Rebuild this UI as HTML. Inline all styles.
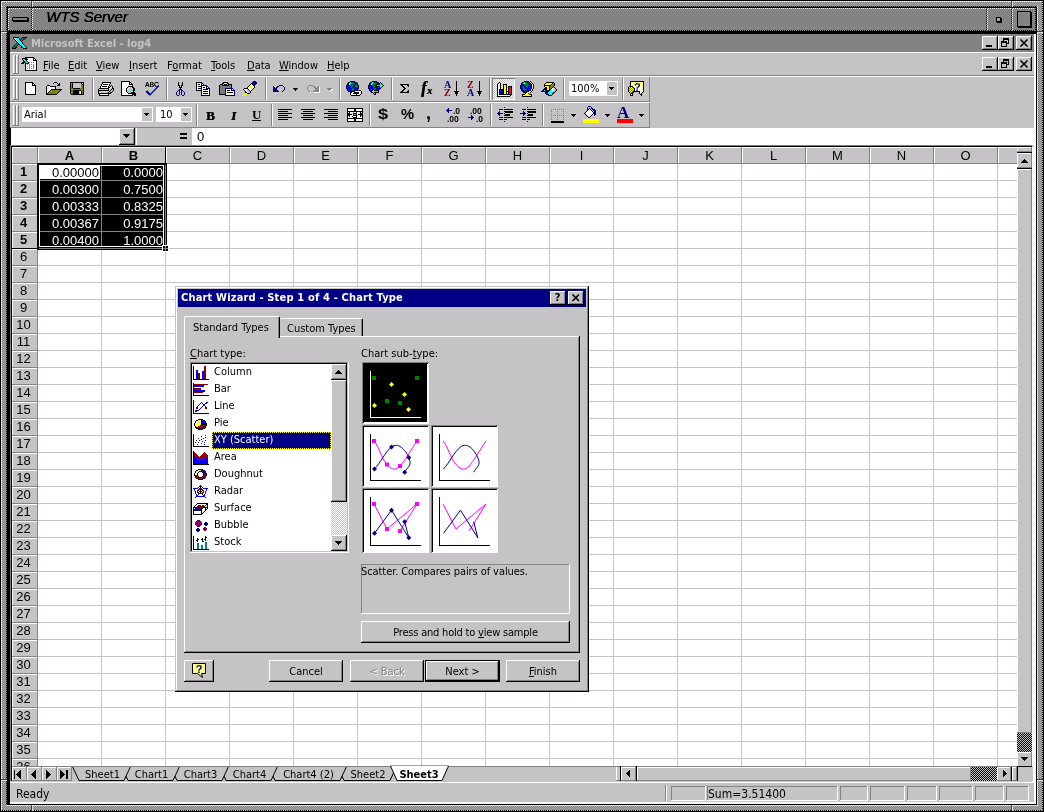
<!DOCTYPE html>
<html><head><meta charset="utf-8"><title>WTS Server</title>
<style>
html,body{margin:0;padding:0;background:#a5a2a5;}
#root{will-change:transform;position:relative;width:1044px;height:812px;overflow:hidden;background:#a5a2a5;font-family:"DejaVu Sans Condensed","Liberation Sans",sans-serif;font-size:11px;color:#000;}
#root div{position:absolute;box-sizing:border-box;white-space:nowrap;}
#root svg{position:absolute;overflow:visible;}
.dith{background:repeating-conic-gradient(#848284 0% 25%,#adaaad 0% 50%) 0 0/2px 2px;}
.dith2{background:repeating-conic-gradient(#000 0% 25%,#c6c3c6 0% 50%) 0 0/2px 2px;}
.dithw2{background:repeating-conic-gradient(#fff 0% 25%,#848284 0% 50%) 0 0/2px 2px;}
.dith3{background:repeating-conic-gradient(#000 0% 25%,#848284 0% 50%) 0 0/2px 2px;}
.dithw{background:repeating-conic-gradient(#fff 0% 25%,#c6c3c6 0% 50%) 0 0/2px 2px;}
.t{line-height:13px;}
.ar{font-family:"Liberation Sans",sans-serif;font-size:13px;line-height:15px;}
.face{background:#c6c3c6;}
.btn{background:#c6c3c6;box-shadow:inset -1px -1px 0 #000,inset 1px 1px 0 #fff,inset -2px -2px 0 #848284,inset 2px 2px 0 #c6c3c6;}
.btn1{background:#c6c3c6;box-shadow:inset -1px -1px 0 #848284,inset 1px 1px 0 #fff;}
.sunk{box-shadow:inset -1px -1px 0 #fff,inset 1px 1px 0 #848284,inset -2px -2px 0 #c6c3c6,inset 2px 2px 0 #000;}
.sunk1{box-shadow:inset -1px -1px 0 #fff,inset 1px 1px 0 #848284;}
u{text-decoration:underline;text-underline-offset:1px;}
</style></head>
<body><div id="root">
<div style="left:0px;top:0px;width:1044px;height:812px;background:#000"></div>
<div class="dith" style="left:1px;top:1px;width:1042px;height:810px;"></div>
<div class="dithw" style="left:1px;top:1px;width:1042px;height:1px;"></div>
<div class="dithw" style="left:1px;top:1px;width:1px;height:810px;"></div>
<div class="dith2" style="left:1px;top:810px;width:1042px;height:1px;"></div>
<div class="dith2" style="left:1042px;top:1px;width:1px;height:810px;"></div>
<div class="dith3" style="left:6px;top:6px;width:1032px;height:1px;"></div>
<div class="dith3" style="left:6px;top:6px;width:1px;height:800px;"></div>
<div class="dithw" style="left:6px;top:805px;width:1032px;height:1px;"></div>
<div class="dithw" style="left:1037px;top:6px;width:1px;height:800px;"></div>
<div style="left:31px;top:1px;width:1px;height:6px;background:#404040"></div>
<div style="left:32px;top:1px;width:1px;height:6px;background:#e0e0e0"></div>
<div style="left:31px;top:805px;width:1px;height:6px;background:#404040"></div>
<div style="left:32px;top:805px;width:1px;height:6px;background:#e0e0e0"></div>
<div style="left:1011px;top:1px;width:1px;height:6px;background:#404040"></div>
<div style="left:1012px;top:1px;width:1px;height:6px;background:#e0e0e0"></div>
<div style="left:1011px;top:805px;width:1px;height:6px;background:#404040"></div>
<div style="left:1012px;top:805px;width:1px;height:6px;background:#e0e0e0"></div>
<div style="left:1px;top:31px;width:6px;height:1px;background:#404040"></div>
<div style="left:1px;top:32px;width:6px;height:1px;background:#e0e0e0"></div>
<div style="left:1037px;top:31px;width:6px;height:1px;background:#404040"></div>
<div style="left:1037px;top:32px;width:6px;height:1px;background:#e0e0e0"></div>
<div style="left:1px;top:779px;width:6px;height:1px;background:#404040"></div>
<div style="left:1px;top:780px;width:6px;height:1px;background:#e0e0e0"></div>
<div style="left:1037px;top:779px;width:6px;height:1px;background:#404040"></div>
<div style="left:1037px;top:780px;width:6px;height:1px;background:#e0e0e0"></div>
<div style="left:7px;top:7px;width:1030px;height:798px;background:#000"></div>
<div style="left:8px;top:8px;width:1028px;height:23px;background:#848284"></div>
<div class="dithw2" style="left:8px;top:8px;width:24px;height:1px;"></div>
<div class="dithw2" style="left:8px;top:8px;width:1px;height:23px;"></div>
<div class="dith3" style="left:8px;top:30px;width:24px;height:1px;"></div>
<div class="dith3" style="left:31px;top:8px;width:1px;height:23px;"></div>
<div class="dithw2" style="left:32px;top:8px;width:955px;height:1px;"></div>
<div class="dithw2" style="left:32px;top:8px;width:1px;height:23px;"></div>
<div class="dith3" style="left:32px;top:30px;width:955px;height:1px;"></div>
<div class="dith3" style="left:986px;top:8px;width:1px;height:23px;"></div>
<div class="dithw2" style="left:987px;top:8px;width:25px;height:1px;"></div>
<div class="dithw2" style="left:987px;top:8px;width:1px;height:23px;"></div>
<div class="dith3" style="left:987px;top:30px;width:25px;height:1px;"></div>
<div class="dith3" style="left:1011px;top:8px;width:1px;height:23px;"></div>
<div class="dithw2" style="left:1012px;top:8px;width:24px;height:1px;"></div>
<div class="dithw2" style="left:1012px;top:8px;width:1px;height:23px;"></div>
<div class="dith3" style="left:1012px;top:30px;width:24px;height:1px;"></div>
<div class="dith3" style="left:1035px;top:8px;width:1px;height:23px;"></div>
<div style="left:12px;top:17px;width:16px;height:4px;background:#848284;border:1px solid #000;box-shadow:1px 1px 0 #000"></div>
<div style="left:996px;top:17px;width:5px;height:5px;background:#a5a2a5;border:1px solid #000;box-shadow:1px 1px 0 #000"></div>
<div style="left:1017px;top:11px;width:14px;height:16px;background:#848284;border:1px solid #000;box-shadow:1px 1px 0 #000"></div>
<div class="t" style="left:46px;top:7px;font-family:'Liberation Sans',sans-serif;font-style:italic;font-size:15px;line-height:20px;color:#000;text-shadow:0.4px 0 0 #000">WTS Server</div>
<div style="left:10px;top:34px;width:1026px;height:770px;background:#fff"></div>
<div style="left:10px;top:34px;width:1024px;height:768px;background:#c6c3c6"></div>
<div style="left:10px;top:34px;width:1024px;height:18px;background:#848284"></div>
<div class="t" style="left:31px;top:37px;font-family:'DejaVu Sans Condensed','Liberation Sans',sans-serif;font-size:11px;font-weight:bold;color:#c6c3c6;line-height:14px">Microsoft Excel - log4</div>
<svg style="left:12px;top:37px" width="16" height="12" viewBox="0 0 16 12" shape-rendering="crispEdges"><rect x="1" y="0" width="6" height="1" fill="#000"/><rect x="10" y="0" width="5" height="1" fill="#000"/><rect x="1" y="1" width="1" height="1" fill="#000"/><rect x="2" y="1" width="1" height="1" fill="#fff"/><rect x="3" y="1" width="4" height="1" fill="#00ffff"/><rect x="7" y="1" width="1" height="1" fill="#000"/><rect x="9" y="1" width="1" height="1" fill="#000"/><rect x="10" y="1" width="3" height="1" fill="#008284"/><rect x="13" y="1" width="1" height="1" fill="#000"/><rect x="2" y="2" width="1" height="1" fill="#000"/><rect x="3" y="2" width="1" height="1" fill="#fff"/><rect x="4" y="2" width="3" height="1" fill="#00ffff"/><rect x="7" y="2" width="2" height="1" fill="#000"/><rect x="9" y="2" width="2" height="1" fill="#008284"/><rect x="11" y="2" width="2" height="1" fill="#000"/><rect x="3" y="3" width="1" height="1" fill="#000"/><rect x="4" y="3" width="1" height="1" fill="#fff"/><rect x="5" y="3" width="3" height="1" fill="#00ffff"/><rect x="8" y="3" width="1" height="1" fill="#000"/><rect x="9" y="3" width="1" height="1" fill="#008284"/><rect x="10" y="3" width="1" height="1" fill="#000"/><rect x="4" y="4" width="1" height="1" fill="#000"/><rect x="5" y="4" width="1" height="1" fill="#fff"/><rect x="6" y="4" width="3" height="1" fill="#00ffff"/><rect x="9" y="4" width="1" height="1" fill="#000"/><rect x="5" y="5" width="1" height="1" fill="#000"/><rect x="6" y="5" width="4" height="1" fill="#00ffff"/><rect x="10" y="5" width="1" height="1" fill="#000"/><rect x="4" y="6" width="1" height="1" fill="#000"/><rect x="5" y="6" width="1" height="1" fill="#008284"/><rect x="6" y="6" width="1" height="1" fill="#000"/><rect x="7" y="6" width="3" height="1" fill="#00ffff"/><rect x="10" y="6" width="1" height="1" fill="#000"/><rect x="3" y="7" width="1" height="1" fill="#000"/><rect x="4" y="7" width="2" height="1" fill="#008284"/><rect x="6" y="7" width="2" height="1" fill="#000"/><rect x="8" y="7" width="3" height="1" fill="#00ffff"/><rect x="11" y="7" width="1" height="1" fill="#000"/><rect x="2" y="8" width="1" height="1" fill="#000"/><rect x="3" y="8" width="2" height="1" fill="#008284"/><rect x="5" y="8" width="1" height="1" fill="#000"/><rect x="8" y="8" width="1" height="1" fill="#000"/><rect x="9" y="8" width="3" height="1" fill="#00ffff"/><rect x="12" y="8" width="1" height="1" fill="#000"/><rect x="1" y="9" width="1" height="1" fill="#000"/><rect x="2" y="9" width="2" height="1" fill="#008284"/><rect x="4" y="9" width="1" height="1" fill="#000"/><rect x="9" y="9" width="1" height="1" fill="#000"/><rect x="10" y="9" width="3" height="1" fill="#00ffff"/><rect x="13" y="9" width="1" height="1" fill="#000"/><rect x="0" y="10" width="1" height="1" fill="#000"/><rect x="1" y="10" width="2" height="1" fill="#008284"/><rect x="3" y="10" width="2" height="1" fill="#000"/><rect x="9" y="10" width="2" height="1" fill="#000"/><rect x="11" y="10" width="3" height="1" fill="#00ffff"/><rect x="14" y="10" width="1" height="1" fill="#000"/><rect x="0" y="11" width="4" height="1" fill="#000"/><rect x="11" y="11" width="4" height="1" fill="#000"/></svg>
<div class="btn" style="left:982px;top:36px;width:16px;height:14px;"></div>
<div style="left:986px;top:45px;width:6px;height:2px;background:#000"></div>
<div class="btn" style="left:998px;top:36px;width:16px;height:14px;"></div>
<svg style="left:998px;top:36px" width="16" height="14" viewBox="0 0 16 14" shape-rendering="crispEdges"><path d="M5 2h6v2H5zM5 4h1v1H5zM10 4h1v4h-1zM9 7h1v1H9z" fill="#000"/><path d="M3 5h6v2H3zM3 7h1v4H3zM8 7h1v4H8zM3 10h6v1H3z" fill="#000"/></svg>
<div class="btn" style="left:1016px;top:36px;width:16px;height:14px;"></div>
<svg style="left:1016px;top:36px" width="16" height="14" viewBox="0 0 16 14"><path d="M4.5 3.5l7 7M11.5 3.5l-7 7" stroke="#000" stroke-width="1.6" fill="none"/></svg>
<div class="btn" style="left:982px;top:57px;width:16px;height:14px;"></div>
<div style="left:986px;top:66px;width:6px;height:2px;background:#000"></div>
<div class="btn" style="left:998px;top:57px;width:16px;height:14px;"></div>
<svg style="left:998px;top:57px" width="16" height="14" viewBox="0 0 16 14" shape-rendering="crispEdges"><path d="M5 2h6v2H5zM5 4h1v1H5zM10 4h1v4h-1zM9 7h1v1H9z" fill="#000"/><path d="M3 5h6v2H3zM3 7h1v4H3zM8 7h1v4H8zM3 10h6v1H3z" fill="#000"/></svg>
<div class="btn" style="left:1016px;top:57px;width:16px;height:14px;"></div>
<svg style="left:1016px;top:57px" width="16" height="14" viewBox="0 0 16 14"><path d="M4.5 3.5l7 7M11.5 3.5l-7 7" stroke="#000" stroke-width="1.6" fill="none"/></svg>
<div style="left:10px;top:52px;width:1024px;height:1px;background:#fff"></div>
<div style="left:10px;top:75px;width:1024px;height:1px;background:#848284"></div>
<div style="left:10px;top:76px;width:1024px;height:1px;background:#fff"></div>
<div style="left:10px;top:101px;width:640px;height:1px;background:#848284"></div>
<div style="left:10px;top:102px;width:640px;height:1px;background:#fff"></div>
<div style="left:10px;top:127px;width:640px;height:1px;background:#848284"></div>
<div class="btn1" style="left:13px;top:55px;width:3px;height:19px;"></div>
<div class="btn1" style="left:16px;top:55px;width:3px;height:19px;"></div>
<div class="btn1" style="left:13px;top:79px;width:3px;height:21px;"></div>
<div class="btn1" style="left:16px;top:79px;width:3px;height:21px;"></div>
<div class="btn1" style="left:13px;top:105px;width:3px;height:21px;"></div>
<div class="btn1" style="left:16px;top:105px;width:3px;height:21px;"></div>
<svg style="left:21px;top:57px" width="16" height="14" viewBox="0 0 16 14" shape-rendering="crispEdges"><rect x="4" y="0" width="9" height="1" fill="#000"/><rect x="1" y="1" width="5" height="1" fill="#000"/><rect x="7" y="1" width="5" height="1" fill="#fff"/><rect x="12" y="1" width="2" height="1" fill="#000"/><rect x="1" y="2" width="1" height="1" fill="#000"/><rect x="2" y="2" width="2" height="1" fill="#00ffff"/><rect x="4" y="2" width="3" height="1" fill="#000"/><rect x="7" y="2" width="5" height="1" fill="#fff"/><rect x="12" y="2" width="1" height="1" fill="#000"/><rect x="13" y="2" width="1" height="1" fill="#fff"/><rect x="14" y="2" width="1" height="1" fill="#000"/><rect x="2" y="3" width="1" height="1" fill="#000"/><rect x="3" y="3" width="2" height="1" fill="#00ffff"/><rect x="5" y="3" width="1" height="1" fill="#000"/><rect x="6" y="3" width="6" height="1" fill="#fff"/><rect x="12" y="3" width="4" height="1" fill="#000"/><rect x="2" y="4" width="2" height="1" fill="#000"/><rect x="4" y="4" width="2" height="1" fill="#00ffff"/><rect x="6" y="4" width="1" height="1" fill="#000"/><rect x="7" y="4" width="8" height="1" fill="#fff"/><rect x="15" y="4" width="1" height="1" fill="#000"/><rect x="1" y="5" width="4" height="1" fill="#000"/><rect x="5" y="5" width="2" height="1" fill="#00ffff"/><rect x="7" y="5" width="1" height="1" fill="#000"/><rect x="8" y="5" width="1" height="1" fill="#848284"/><rect x="9" y="5" width="1" height="1" fill="#fff"/><rect x="10" y="5" width="1" height="1" fill="#848284"/><rect x="11" y="5" width="1" height="1" fill="#fff"/><rect x="12" y="5" width="1" height="1" fill="#848284"/><rect x="13" y="5" width="2" height="1" fill="#fff"/><rect x="15" y="5" width="1" height="1" fill="#000"/><rect x="0" y="6" width="3" height="1" fill="#000"/><rect x="4" y="6" width="4" height="1" fill="#000"/><rect x="8" y="6" width="7" height="1" fill="#fff"/><rect x="15" y="6" width="1" height="1" fill="#000"/><rect x="4" y="7" width="1" height="1" fill="#000"/><rect x="5" y="7" width="1" height="1" fill="#fff"/><rect x="6" y="7" width="1" height="1" fill="#848284"/><rect x="7" y="7" width="1" height="1" fill="#fff"/><rect x="8" y="7" width="1" height="1" fill="#848284"/><rect x="9" y="7" width="1" height="1" fill="#fff"/><rect x="10" y="7" width="1" height="1" fill="#848284"/><rect x="11" y="7" width="1" height="1" fill="#fff"/><rect x="12" y="7" width="1" height="1" fill="#848284"/><rect x="13" y="7" width="2" height="1" fill="#fff"/><rect x="15" y="7" width="1" height="1" fill="#000"/><rect x="4" y="8" width="1" height="1" fill="#000"/><rect x="5" y="8" width="3" height="1" fill="#fff"/><rect x="8" y="8" width="1" height="1" fill="#848284"/><rect x="9" y="8" width="3" height="1" fill="#fff"/><rect x="12" y="8" width="1" height="1" fill="#848284"/><rect x="13" y="8" width="2" height="1" fill="#fff"/><rect x="15" y="8" width="1" height="1" fill="#000"/><rect x="4" y="9" width="1" height="1" fill="#000"/><rect x="5" y="9" width="1" height="1" fill="#fff"/><rect x="6" y="9" width="1" height="1" fill="#848284"/><rect x="7" y="9" width="1" height="1" fill="#fff"/><rect x="8" y="9" width="1" height="1" fill="#848284"/><rect x="9" y="9" width="1" height="1" fill="#fff"/><rect x="10" y="9" width="1" height="1" fill="#848284"/><rect x="11" y="9" width="1" height="1" fill="#fff"/><rect x="12" y="9" width="1" height="1" fill="#848284"/><rect x="13" y="9" width="2" height="1" fill="#fff"/><rect x="15" y="9" width="1" height="1" fill="#000"/><rect x="4" y="10" width="1" height="1" fill="#000"/><rect x="5" y="10" width="3" height="1" fill="#fff"/><rect x="8" y="10" width="1" height="1" fill="#848284"/><rect x="9" y="10" width="3" height="1" fill="#fff"/><rect x="12" y="10" width="1" height="1" fill="#848284"/><rect x="13" y="10" width="2" height="1" fill="#fff"/><rect x="15" y="10" width="1" height="1" fill="#000"/><rect x="4" y="11" width="1" height="1" fill="#000"/><rect x="5" y="11" width="1" height="1" fill="#fff"/><rect x="6" y="11" width="1" height="1" fill="#848284"/><rect x="7" y="11" width="1" height="1" fill="#fff"/><rect x="8" y="11" width="1" height="1" fill="#848284"/><rect x="9" y="11" width="1" height="1" fill="#fff"/><rect x="10" y="11" width="1" height="1" fill="#848284"/><rect x="11" y="11" width="1" height="1" fill="#fff"/><rect x="12" y="11" width="1" height="1" fill="#848284"/><rect x="13" y="11" width="2" height="1" fill="#fff"/><rect x="15" y="11" width="1" height="1" fill="#000"/><rect x="4" y="12" width="1" height="1" fill="#000"/><rect x="5" y="12" width="10" height="1" fill="#fff"/><rect x="15" y="12" width="1" height="1" fill="#000"/><rect x="4" y="13" width="12" height="1" fill="#000"/></svg>
<div class="t" style="left:43px;top:59px;font-family:'DejaVu Sans Condensed','Liberation Sans',sans-serif;font-size:11px;line-height:14px"><u>F</u>ile</div>
<div class="t" style="left:68px;top:59px;font-family:'DejaVu Sans Condensed','Liberation Sans',sans-serif;font-size:11px;line-height:14px"><u>E</u>dit</div>
<div class="t" style="left:96px;top:59px;font-family:'DejaVu Sans Condensed','Liberation Sans',sans-serif;font-size:11px;line-height:14px"><u>V</u>iew</div>
<div class="t" style="left:129px;top:59px;font-family:'DejaVu Sans Condensed','Liberation Sans',sans-serif;font-size:11px;line-height:14px"><u>I</u>nsert</div>
<div class="t" style="left:167px;top:59px;font-family:'DejaVu Sans Condensed','Liberation Sans',sans-serif;font-size:11px;line-height:14px">F<u>o</u>rmat</div>
<div class="t" style="left:211px;top:59px;font-family:'DejaVu Sans Condensed','Liberation Sans',sans-serif;font-size:11px;line-height:14px"><u>T</u>ools</div>
<div class="t" style="left:247px;top:59px;font-family:'DejaVu Sans Condensed','Liberation Sans',sans-serif;font-size:11px;line-height:14px"><u>D</u>ata</div>
<div class="t" style="left:279px;top:59px;font-family:'DejaVu Sans Condensed','Liberation Sans',sans-serif;font-size:11px;line-height:14px"><u>W</u>indow</div>
<div class="t" style="left:327px;top:59px;font-family:'DejaVu Sans Condensed','Liberation Sans',sans-serif;font-size:11px;line-height:14px"><u>H</u>elp</div>
<div style="left:649px;top:77px;width:1px;height:25px;background:#848284"></div>
<div style="left:649px;top:103px;width:1px;height:25px;background:#848284"></div>
<div style="left:92px;top:78px;width:1px;height:22px;background:#848284"></div>
<div style="left:93px;top:78px;width:1px;height:22px;background:#fff"></div>
<div style="left:166px;top:78px;width:1px;height:22px;background:#848284"></div>
<div style="left:167px;top:78px;width:1px;height:22px;background:#fff"></div>
<div style="left:265px;top:78px;width:1px;height:22px;background:#848284"></div>
<div style="left:266px;top:78px;width:1px;height:22px;background:#fff"></div>
<div style="left:339px;top:78px;width:1px;height:22px;background:#848284"></div>
<div style="left:340px;top:78px;width:1px;height:22px;background:#fff"></div>
<div style="left:391px;top:78px;width:1px;height:22px;background:#848284"></div>
<div style="left:392px;top:78px;width:1px;height:22px;background:#fff"></div>
<div style="left:489px;top:78px;width:1px;height:22px;background:#848284"></div>
<div style="left:490px;top:78px;width:1px;height:22px;background:#fff"></div>
<div style="left:563px;top:78px;width:1px;height:22px;background:#848284"></div>
<div style="left:564px;top:78px;width:1px;height:22px;background:#fff"></div>
<div style="left:622px;top:78px;width:1px;height:22px;background:#848284"></div>
<div style="left:623px;top:78px;width:1px;height:22px;background:#fff"></div>
<div style="left:196px;top:104px;width:1px;height:22px;background:#848284"></div>
<div style="left:197px;top:104px;width:1px;height:22px;background:#fff"></div>
<div style="left:271px;top:104px;width:1px;height:22px;background:#848284"></div>
<div style="left:272px;top:104px;width:1px;height:22px;background:#fff"></div>
<div style="left:369px;top:104px;width:1px;height:22px;background:#848284"></div>
<div style="left:370px;top:104px;width:1px;height:22px;background:#fff"></div>
<div style="left:490px;top:104px;width:1px;height:22px;background:#848284"></div>
<div style="left:491px;top:104px;width:1px;height:22px;background:#fff"></div>
<div style="left:542px;top:104px;width:1px;height:22px;background:#848284"></div>
<div style="left:543px;top:104px;width:1px;height:22px;background:#fff"></div>
<div style="left:22px;top:107px;width:131px;height:15px;background:#fff"></div>
<div style="left:142px;top:108px;width:10px;height:13px;background:#c6c3c6"></div>
<div class="t" style="left:24px;top:108px;font-family:'DejaVu Sans Condensed','Liberation Sans',sans-serif;font-size:11px;line-height:14px">Arial</div>
<div style="left:156px;top:107px;width:36px;height:15px;background:#fff"></div>
<div style="left:181px;top:108px;width:10px;height:13px;background:#c6c3c6"></div>
<div class="t" style="left:160px;top:108px;font-family:'DejaVu Sans Condensed','Liberation Sans',sans-serif;font-size:11px;line-height:14px">10</div>
<div style="left:569px;top:81px;width:49px;height:15px;background:#fff"></div>
<div style="left:607px;top:82px;width:10px;height:13px;background:#c6c3c6"></div>
<div class="t" style="left:571px;top:82px;font-family:'DejaVu Sans Condensed','Liberation Sans',sans-serif;font-size:11px;line-height:14px">100%</div>
<svg style="left:144px;top:113px" width="5" height="3" shape-rendering="crispEdges"><path d="M0 0h5 l-2.5 3 z" fill="#000"/></svg>
<svg style="left:183px;top:113px" width="5" height="3" shape-rendering="crispEdges"><path d="M0 0h5 l-2.5 3 z" fill="#000"/></svg>
<svg style="left:609px;top:87px" width="5" height="3" shape-rendering="crispEdges"><path d="M0 0h5 l-2.5 3 z" fill="#000"/></svg>
<div style="left:10px;top:128px;width:1024px;height:17px;background:#c6c3c6"></div>
<div style="left:11px;top:128px;width:108px;height:17px;background:#fff"></div>
<div class="btn" style="left:119px;top:128px;width:16px;height:17px;"></div>
<svg style="left:123px;top:134px" width="7" height="4" shape-rendering="crispEdges"><path d="M0 0h7 l-3.5 4 z" fill="#000"/></svg>
<div style="left:136px;top:128px;width:1px;height:17px;background:#fff"></div>
<div style="left:192px;top:128px;width:844px;height:17px;background:#fff"></div>
<div style="left:180px;top:133px;width:7px;height:2px;background:#000"></div>
<div style="left:180px;top:137px;width:7px;height:2px;background:#000"></div>
<div class="t" style="left:197px;top:129px;font-family:'Liberation Sans',sans-serif;font-size:13px;line-height:15px">0</div>
<div style="left:10px;top:145px;width:1022px;height:1px;background:#848284"></div>
<div style="left:10px;top:146px;width:1022px;height:1px;background:#000"></div>
<div style="left:10px;top:781px;width:1024px;height:1px;background:#c6c3c6"></div>
<div style="left:10px;top:782px;width:1024px;height:1px;background:#fff"></div>
<div style="left:10px;top:783px;width:1024px;height:19px;background:#c6c3c6"></div>
<div class="t" style="left:16px;top:787px;font-family:'DejaVu Sans Condensed','Liberation Sans',sans-serif;font-size:11px;font-size:12px;line-height:14px">Ready</div>
<div class="t" style="left:708px;top:787px;font-family:'DejaVu Sans Condensed','Liberation Sans',sans-serif;font-size:11px;font-size:12px;line-height:14px">Sum=3.51400</div>
<div class="sunk1" style="left:671px;top:786px;width:35px;height:15px;"></div>
<div class="sunk1" style="left:707px;top:786px;width:131px;height:15px;"></div>
<div class="sunk1" style="left:840px;top:786px;width:28px;height:15px;"></div>
<div class="sunk1" style="left:870px;top:786px;width:35px;height:15px;"></div>
<div class="sunk1" style="left:907px;top:786px;width:30px;height:15px;"></div>
<div class="sunk1" style="left:939px;top:786px;width:34px;height:15px;"></div>
<div class="sunk1" style="left:975px;top:786px;width:29px;height:15px;"></div>
<div class="sunk1" style="left:1006px;top:786px;width:23px;height:15px;"></div>
<div style="left:665px;top:785px;width:1px;height:16px;background:#848284"></div>
<div style="left:666px;top:785px;width:1px;height:16px;background:#fff"></div>
<svg style="left:25px;top:82px" width="11" height="13" viewBox="0 0 11 13" shape-rendering="crispEdges"><rect x="0" y="0" width="8" height="1" fill="#000"/><rect x="0" y="1" width="1" height="1" fill="#000"/><rect x="1" y="1" width="6" height="1" fill="#fff"/><rect x="7" y="1" width="2" height="1" fill="#000"/><rect x="0" y="2" width="1" height="1" fill="#000"/><rect x="1" y="2" width="6" height="1" fill="#fff"/><rect x="7" y="2" width="1" height="1" fill="#000"/><rect x="8" y="2" width="1" height="1" fill="#fff"/><rect x="9" y="2" width="1" height="1" fill="#000"/><rect x="0" y="3" width="1" height="1" fill="#000"/><rect x="1" y="3" width="6" height="1" fill="#fff"/><rect x="7" y="3" width="4" height="1" fill="#000"/><rect x="0" y="4" width="1" height="1" fill="#000"/><rect x="1" y="4" width="9" height="1" fill="#fff"/><rect x="10" y="4" width="1" height="1" fill="#000"/><rect x="0" y="5" width="1" height="1" fill="#000"/><rect x="1" y="5" width="9" height="1" fill="#fff"/><rect x="10" y="5" width="1" height="1" fill="#000"/><rect x="0" y="6" width="1" height="1" fill="#000"/><rect x="1" y="6" width="9" height="1" fill="#fff"/><rect x="10" y="6" width="1" height="1" fill="#000"/><rect x="0" y="7" width="1" height="1" fill="#000"/><rect x="1" y="7" width="9" height="1" fill="#fff"/><rect x="10" y="7" width="1" height="1" fill="#000"/><rect x="0" y="8" width="1" height="1" fill="#000"/><rect x="1" y="8" width="9" height="1" fill="#fff"/><rect x="10" y="8" width="1" height="1" fill="#000"/><rect x="0" y="9" width="1" height="1" fill="#000"/><rect x="1" y="9" width="9" height="1" fill="#fff"/><rect x="10" y="9" width="1" height="1" fill="#000"/><rect x="0" y="10" width="1" height="1" fill="#000"/><rect x="1" y="10" width="9" height="1" fill="#fff"/><rect x="10" y="10" width="1" height="1" fill="#000"/><rect x="0" y="11" width="1" height="1" fill="#000"/><rect x="1" y="11" width="9" height="1" fill="#fff"/><rect x="10" y="11" width="1" height="1" fill="#000"/><rect x="0" y="12" width="11" height="1" fill="#000"/></svg>
<svg style="left:46px;top:82px" width="16" height="13" viewBox="0 0 16 13" shape-rendering="crispEdges"><rect x="8" y="0" width="3" height="1" fill="#000"/><rect x="7" y="1" width="1" height="1" fill="#000"/><rect x="11" y="1" width="1" height="1" fill="#000"/><rect x="13" y="1" width="1" height="1" fill="#000"/><rect x="12" y="2" width="2" height="1" fill="#000"/><rect x="1" y="3" width="3" height="1" fill="#000"/><rect x="11" y="3" width="3" height="1" fill="#000"/><rect x="0" y="4" width="1" height="1" fill="#000"/><rect x="1" y="4" width="1" height="1" fill="#ffff00"/><rect x="2" y="4" width="1" height="1" fill="#fff"/><rect x="3" y="4" width="1" height="1" fill="#ffff00"/><rect x="4" y="4" width="6" height="1" fill="#000"/><rect x="0" y="5" width="1" height="1" fill="#000"/><rect x="1" y="5" width="1" height="1" fill="#fff"/><rect x="2" y="5" width="1" height="1" fill="#ffff00"/><rect x="3" y="5" width="1" height="1" fill="#fff"/><rect x="4" y="5" width="1" height="1" fill="#ffff00"/><rect x="5" y="5" width="1" height="1" fill="#fff"/><rect x="6" y="5" width="1" height="1" fill="#ffff00"/><rect x="7" y="5" width="1" height="1" fill="#fff"/><rect x="8" y="5" width="1" height="1" fill="#ffff00"/><rect x="9" y="5" width="1" height="1" fill="#000"/><rect x="0" y="6" width="1" height="1" fill="#000"/><rect x="1" y="6" width="1" height="1" fill="#ffff00"/><rect x="2" y="6" width="1" height="1" fill="#fff"/><rect x="3" y="6" width="1" height="1" fill="#ffff00"/><rect x="4" y="6" width="1" height="1" fill="#fff"/><rect x="5" y="6" width="1" height="1" fill="#ffff00"/><rect x="6" y="6" width="1" height="1" fill="#fff"/><rect x="7" y="6" width="1" height="1" fill="#ffff00"/><rect x="8" y="6" width="1" height="1" fill="#fff"/><rect x="9" y="6" width="1" height="1" fill="#000"/><rect x="0" y="7" width="1" height="1" fill="#000"/><rect x="1" y="7" width="1" height="1" fill="#fff"/><rect x="2" y="7" width="1" height="1" fill="#ffff00"/><rect x="3" y="7" width="1" height="1" fill="#fff"/><rect x="4" y="7" width="1" height="1" fill="#ffff00"/><rect x="5" y="7" width="11" height="1" fill="#000"/><rect x="0" y="8" width="1" height="1" fill="#000"/><rect x="1" y="8" width="1" height="1" fill="#ffff00"/><rect x="2" y="8" width="1" height="1" fill="#fff"/><rect x="3" y="8" width="1" height="1" fill="#ffff00"/><rect x="4" y="8" width="1" height="1" fill="#000"/><rect x="5" y="8" width="9" height="1" fill="#848200"/><rect x="14" y="8" width="1" height="1" fill="#000"/><rect x="0" y="9" width="1" height="1" fill="#000"/><rect x="1" y="9" width="1" height="1" fill="#fff"/><rect x="2" y="9" width="1" height="1" fill="#ffff00"/><rect x="3" y="9" width="1" height="1" fill="#000"/><rect x="4" y="9" width="9" height="1" fill="#848200"/><rect x="13" y="9" width="1" height="1" fill="#000"/><rect x="0" y="10" width="1" height="1" fill="#000"/><rect x="1" y="10" width="1" height="1" fill="#ffff00"/><rect x="2" y="10" width="1" height="1" fill="#000"/><rect x="3" y="10" width="9" height="1" fill="#848200"/><rect x="12" y="10" width="1" height="1" fill="#000"/><rect x="0" y="11" width="2" height="1" fill="#000"/><rect x="2" y="11" width="9" height="1" fill="#848200"/><rect x="11" y="11" width="1" height="1" fill="#000"/><rect x="0" y="12" width="11" height="1" fill="#000"/></svg>
<svg style="left:70px;top:82px" width="14" height="13" viewBox="0 0 14 13" shape-rendering="crispEdges"><rect x="0" y="0" width="14" height="1" fill="#000"/><rect x="0" y="1" width="1" height="1" fill="#000"/><rect x="1" y="1" width="1" height="1" fill="#848200"/><rect x="2" y="1" width="1" height="1" fill="#000"/><rect x="3" y="1" width="8" height="1" fill="#c6c3c6"/><rect x="11" y="1" width="1" height="1" fill="#000"/><rect x="12" y="1" width="1" height="1" fill="#c6c3c6"/><rect x="13" y="1" width="1" height="1" fill="#000"/><rect x="0" y="2" width="1" height="1" fill="#000"/><rect x="1" y="2" width="1" height="1" fill="#848200"/><rect x="2" y="2" width="1" height="1" fill="#000"/><rect x="3" y="2" width="8" height="1" fill="#c6c3c6"/><rect x="11" y="2" width="1" height="1" fill="#848200"/><rect x="12" y="2" width="2" height="1" fill="#000"/><rect x="0" y="3" width="1" height="1" fill="#000"/><rect x="1" y="3" width="1" height="1" fill="#848200"/><rect x="2" y="3" width="1" height="1" fill="#000"/><rect x="3" y="3" width="8" height="1" fill="#c6c3c6"/><rect x="11" y="3" width="2" height="1" fill="#848200"/><rect x="13" y="3" width="1" height="1" fill="#000"/><rect x="0" y="4" width="1" height="1" fill="#000"/><rect x="1" y="4" width="1" height="1" fill="#848200"/><rect x="2" y="4" width="1" height="1" fill="#000"/><rect x="3" y="4" width="8" height="1" fill="#c6c3c6"/><rect x="11" y="4" width="2" height="1" fill="#848200"/><rect x="13" y="4" width="1" height="1" fill="#000"/><rect x="0" y="5" width="1" height="1" fill="#000"/><rect x="1" y="5" width="1" height="1" fill="#848200"/><rect x="2" y="5" width="1" height="1" fill="#000"/><rect x="3" y="5" width="8" height="1" fill="#c6c3c6"/><rect x="11" y="5" width="2" height="1" fill="#848200"/><rect x="13" y="5" width="1" height="1" fill="#000"/><rect x="0" y="6" width="1" height="1" fill="#000"/><rect x="1" y="6" width="2" height="1" fill="#848200"/><rect x="3" y="6" width="7" height="1" fill="#000"/><rect x="10" y="6" width="3" height="1" fill="#848200"/><rect x="13" y="6" width="1" height="1" fill="#000"/><rect x="0" y="7" width="1" height="1" fill="#000"/><rect x="1" y="7" width="12" height="1" fill="#848200"/><rect x="13" y="7" width="1" height="1" fill="#000"/><rect x="0" y="8" width="1" height="1" fill="#000"/><rect x="1" y="8" width="2" height="1" fill="#848200"/><rect x="3" y="8" width="8" height="1" fill="#000"/><rect x="11" y="8" width="2" height="1" fill="#848200"/><rect x="13" y="8" width="1" height="1" fill="#000"/><rect x="0" y="9" width="1" height="1" fill="#000"/><rect x="1" y="9" width="2" height="1" fill="#848200"/><rect x="3" y="9" width="6" height="1" fill="#000"/><rect x="9" y="9" width="1" height="1" fill="#c6c3c6"/><rect x="10" y="9" width="1" height="1" fill="#fff"/><rect x="11" y="9" width="1" height="1" fill="#000"/><rect x="12" y="9" width="1" height="1" fill="#848200"/><rect x="13" y="9" width="1" height="1" fill="#000"/><rect x="0" y="10" width="1" height="1" fill="#000"/><rect x="1" y="10" width="2" height="1" fill="#848200"/><rect x="3" y="10" width="6" height="1" fill="#000"/><rect x="9" y="10" width="1" height="1" fill="#c6c3c6"/><rect x="10" y="10" width="1" height="1" fill="#fff"/><rect x="11" y="10" width="1" height="1" fill="#000"/><rect x="12" y="10" width="1" height="1" fill="#848200"/><rect x="13" y="10" width="1" height="1" fill="#000"/><rect x="0" y="11" width="1" height="1" fill="#000"/><rect x="1" y="11" width="2" height="1" fill="#848200"/><rect x="3" y="11" width="6" height="1" fill="#000"/><rect x="9" y="11" width="1" height="1" fill="#c6c3c6"/><rect x="10" y="11" width="1" height="1" fill="#fff"/><rect x="11" y="11" width="1" height="1" fill="#000"/><rect x="12" y="11" width="1" height="1" fill="#848200"/><rect x="13" y="11" width="1" height="1" fill="#000"/><rect x="1" y="12" width="13" height="1" fill="#000"/></svg>
<svg style="left:98px;top:82px" width="16" height="14" viewBox="0 0 16 14" shape-rendering="crispEdges"><rect x="4" y="0" width="9" height="1" fill="#000"/><rect x="4" y="1" width="1" height="1" fill="#000"/><rect x="5" y="1" width="7" height="1" fill="#fff"/><rect x="12" y="1" width="1" height="1" fill="#000"/><rect x="3" y="2" width="1" height="1" fill="#000"/><rect x="4" y="2" width="1" height="1" fill="#fff"/><rect x="5" y="2" width="5" height="1" fill="#000"/><rect x="10" y="2" width="1" height="1" fill="#fff"/><rect x="11" y="2" width="1" height="1" fill="#000"/><rect x="3" y="3" width="1" height="1" fill="#000"/><rect x="4" y="3" width="7" height="1" fill="#fff"/><rect x="11" y="3" width="1" height="1" fill="#000"/><rect x="13" y="3" width="1" height="1" fill="#000"/><rect x="2" y="4" width="1" height="1" fill="#000"/><rect x="3" y="4" width="1" height="1" fill="#fff"/><rect x="4" y="4" width="5" height="1" fill="#000"/><rect x="9" y="4" width="1" height="1" fill="#fff"/><rect x="10" y="4" width="1" height="1" fill="#000"/><rect x="12" y="4" width="1" height="1" fill="#000"/><rect x="13" y="4" width="1" height="1" fill="#fff"/><rect x="14" y="4" width="1" height="1" fill="#000"/><rect x="2" y="5" width="1" height="1" fill="#000"/><rect x="3" y="5" width="7" height="1" fill="#fff"/><rect x="10" y="5" width="2" height="1" fill="#000"/><rect x="12" y="5" width="1" height="1" fill="#fff"/><rect x="13" y="5" width="1" height="1" fill="#c6c3c6"/><rect x="14" y="5" width="1" height="1" fill="#000"/><rect x="1" y="6" width="10" height="1" fill="#000"/><rect x="11" y="6" width="1" height="1" fill="#fff"/><rect x="12" y="6" width="2" height="1" fill="#c6c3c6"/><rect x="14" y="6" width="2" height="1" fill="#000"/><rect x="0" y="7" width="1" height="1" fill="#000"/><rect x="1" y="7" width="9" height="1" fill="#c6c3c6"/><rect x="10" y="7" width="1" height="1" fill="#000"/><rect x="11" y="7" width="2" height="1" fill="#c6c3c6"/><rect x="13" y="7" width="1" height="1" fill="#000"/><rect x="14" y="7" width="1" height="1" fill="#c6c3c6"/><rect x="15" y="7" width="1" height="1" fill="#000"/><rect x="0" y="8" width="11" height="1" fill="#000"/><rect x="11" y="8" width="1" height="1" fill="#c6c3c6"/><rect x="12" y="8" width="1" height="1" fill="#000"/><rect x="13" y="8" width="2" height="1" fill="#c6c3c6"/><rect x="15" y="8" width="1" height="1" fill="#000"/><rect x="0" y="9" width="1" height="1" fill="#000"/><rect x="1" y="9" width="4" height="1" fill="#c6c3c6"/><rect x="5" y="9" width="3" height="1" fill="#ffff00"/><rect x="8" y="9" width="3" height="1" fill="#c6c3c6"/><rect x="11" y="9" width="1" height="1" fill="#000"/><rect x="12" y="9" width="2" height="1" fill="#c6c3c6"/><rect x="14" y="9" width="1" height="1" fill="#000"/><rect x="0" y="10" width="1" height="1" fill="#000"/><rect x="1" y="10" width="9" height="1" fill="#c6c3c6"/><rect x="10" y="10" width="1" height="1" fill="#000"/><rect x="11" y="10" width="1" height="1" fill="#c6c3c6"/><rect x="12" y="10" width="2" height="1" fill="#000"/><rect x="0" y="11" width="13" height="1" fill="#000"/><rect x="1" y="12" width="1" height="1" fill="#000"/><rect x="2" y="12" width="8" height="1" fill="#fff"/><rect x="10" y="12" width="1" height="1" fill="#000"/><rect x="1" y="13" width="10" height="1" fill="#000"/></svg>
<svg style="left:121px;top:81px" width="16" height="15" viewBox="0 0 16 15" shape-rendering="crispEdges"><rect x="0" y="0" width="9" height="1" fill="#000"/><rect x="0" y="1" width="1" height="1" fill="#000"/><rect x="1" y="1" width="7" height="1" fill="#fff"/><rect x="8" y="1" width="2" height="1" fill="#000"/><rect x="0" y="2" width="1" height="1" fill="#000"/><rect x="1" y="2" width="7" height="1" fill="#fff"/><rect x="8" y="2" width="1" height="1" fill="#000"/><rect x="9" y="2" width="1" height="1" fill="#fff"/><rect x="10" y="2" width="1" height="1" fill="#000"/><rect x="0" y="3" width="1" height="1" fill="#000"/><rect x="1" y="3" width="7" height="1" fill="#fff"/><rect x="8" y="3" width="4" height="1" fill="#000"/><rect x="0" y="4" width="1" height="1" fill="#000"/><rect x="1" y="4" width="10" height="1" fill="#fff"/><rect x="11" y="4" width="1" height="1" fill="#000"/><rect x="0" y="5" width="1" height="1" fill="#000"/><rect x="1" y="5" width="6" height="1" fill="#fff"/><rect x="7" y="5" width="5" height="1" fill="#000"/><rect x="0" y="6" width="1" height="1" fill="#000"/><rect x="1" y="6" width="5" height="1" fill="#fff"/><rect x="6" y="6" width="1" height="1" fill="#000"/><rect x="7" y="6" width="1" height="1" fill="#00ffff"/><rect x="8" y="6" width="1" height="1" fill="#fff"/><rect x="9" y="6" width="2" height="1" fill="#c6c3c6"/><rect x="11" y="6" width="2" height="1" fill="#000"/><rect x="0" y="7" width="1" height="1" fill="#000"/><rect x="1" y="7" width="4" height="1" fill="#fff"/><rect x="5" y="7" width="1" height="1" fill="#000"/><rect x="6" y="7" width="1" height="1" fill="#00ffff"/><rect x="7" y="7" width="1" height="1" fill="#fff"/><rect x="8" y="7" width="4" height="1" fill="#c6c3c6"/><rect x="12" y="7" width="2" height="1" fill="#000"/><rect x="0" y="8" width="1" height="1" fill="#000"/><rect x="1" y="8" width="4" height="1" fill="#fff"/><rect x="5" y="8" width="1" height="1" fill="#000"/><rect x="6" y="8" width="1" height="1" fill="#fff"/><rect x="7" y="8" width="3" height="1" fill="#c6c3c6"/><rect x="10" y="8" width="1" height="1" fill="#00ffff"/><rect x="11" y="8" width="1" height="1" fill="#c6c3c6"/><rect x="12" y="8" width="2" height="1" fill="#000"/><rect x="0" y="9" width="1" height="1" fill="#000"/><rect x="1" y="9" width="4" height="1" fill="#fff"/><rect x="5" y="9" width="1" height="1" fill="#000"/><rect x="6" y="9" width="3" height="1" fill="#c6c3c6"/><rect x="9" y="9" width="1" height="1" fill="#00ffff"/><rect x="10" y="9" width="2" height="1" fill="#c6c3c6"/><rect x="12" y="9" width="2" height="1" fill="#000"/><rect x="0" y="10" width="1" height="1" fill="#000"/><rect x="1" y="10" width="4" height="1" fill="#fff"/><rect x="5" y="10" width="1" height="1" fill="#000"/><rect x="6" y="10" width="6" height="1" fill="#c6c3c6"/><rect x="12" y="10" width="1" height="1" fill="#000"/><rect x="0" y="11" width="1" height="1" fill="#000"/><rect x="1" y="11" width="5" height="1" fill="#fff"/><rect x="6" y="11" width="1" height="1" fill="#000"/><rect x="7" y="11" width="3" height="1" fill="#c6c3c6"/><rect x="10" y="11" width="4" height="1" fill="#000"/><rect x="0" y="12" width="1" height="1" fill="#000"/><rect x="1" y="12" width="6" height="1" fill="#fff"/><rect x="7" y="12" width="8" height="1" fill="#000"/><rect x="0" y="13" width="1" height="1" fill="#000"/><rect x="1" y="13" width="10" height="1" fill="#fff"/><rect x="11" y="13" width="4" height="1" fill="#000"/><rect x="0" y="14" width="12" height="1" fill="#000"/><rect x="13" y="14" width="2" height="1" fill="#000"/></svg>
<div class="t" style="left:145px;top:81px;font-family:'Liberation Sans',sans-serif;font-size:6.5px;line-height:8px;letter-spacing:0.2px;text-shadow:0.3px 0 0 #000">ABC</div>
<svg style="left:145px;top:83px" width="16" height="14" viewBox="0 0 16 14"><path d="M1.500 8.500l3.500 3.500L14 2.500" stroke="#000084" stroke-width="1.200" fill="none"/><path d="M0.500 8.500l2-1 3 3.500-1 1.500z" fill="#000084"/></svg>
<svg style="left:176px;top:82px" width="10" height="14" viewBox="0 0 10 14" shape-rendering="crispEdges"><rect x="2" y="0" width="1" height="1" fill="#000"/><rect x="6" y="0" width="1" height="1" fill="#000"/><rect x="2" y="1" width="1" height="1" fill="#000"/><rect x="6" y="1" width="1" height="1" fill="#000"/><rect x="2" y="2" width="1" height="1" fill="#000"/><rect x="6" y="2" width="1" height="1" fill="#000"/><rect x="2" y="3" width="2" height="1" fill="#000"/><rect x="5" y="3" width="2" height="1" fill="#000"/><rect x="3" y="4" width="1" height="1" fill="#000"/><rect x="5" y="4" width="1" height="1" fill="#000"/><rect x="3" y="5" width="3" height="1" fill="#000"/><rect x="4" y="6" width="1" height="1" fill="#000"/><rect x="3" y="7" width="1" height="1" fill="#000"/><rect x="4" y="7" width="1" height="1" fill="#000084"/><rect x="5" y="7" width="1" height="1" fill="#000"/><rect x="2" y="8" width="2" height="1" fill="#000084"/><rect x="5" y="8" width="2" height="1" fill="#000084"/><rect x="1" y="9" width="1" height="1" fill="#000084"/><rect x="3" y="9" width="1" height="1" fill="#000084"/><rect x="5" y="9" width="1" height="1" fill="#000084"/><rect x="7" y="9" width="1" height="1" fill="#000084"/><rect x="0" y="10" width="1" height="1" fill="#000084"/><rect x="3" y="10" width="1" height="1" fill="#000084"/><rect x="5" y="10" width="1" height="1" fill="#000084"/><rect x="8" y="10" width="1" height="1" fill="#000084"/><rect x="0" y="11" width="1" height="1" fill="#000084"/><rect x="3" y="11" width="1" height="1" fill="#000084"/><rect x="5" y="11" width="1" height="1" fill="#000084"/><rect x="8" y="11" width="1" height="1" fill="#000084"/><rect x="0" y="12" width="1" height="1" fill="#000084"/><rect x="3" y="12" width="1" height="1" fill="#000084"/><rect x="5" y="12" width="1" height="1" fill="#000084"/><rect x="8" y="12" width="1" height="1" fill="#000084"/><rect x="1" y="13" width="2" height="1" fill="#000084"/><rect x="6" y="13" width="2" height="1" fill="#000084"/></svg>
<svg style="left:196px;top:82px" width="16" height="14" viewBox="0 0 16 14" shape-rendering="crispEdges"><rect x="0" y="0" width="6" height="1" fill="#000"/><rect x="0" y="1" width="1" height="1" fill="#000"/><rect x="1" y="1" width="4" height="1" fill="#fff"/><rect x="5" y="1" width="2" height="1" fill="#000"/><rect x="0" y="2" width="1" height="1" fill="#000"/><rect x="1" y="2" width="1" height="1" fill="#fff"/><rect x="2" y="2" width="2" height="1" fill="#000"/><rect x="4" y="2" width="1" height="1" fill="#fff"/><rect x="5" y="2" width="1" height="1" fill="#000"/><rect x="6" y="2" width="1" height="1" fill="#fff"/><rect x="7" y="2" width="1" height="1" fill="#000"/><rect x="0" y="3" width="1" height="1" fill="#000"/><rect x="1" y="3" width="4" height="1" fill="#fff"/><rect x="5" y="3" width="6" height="1" fill="#000084"/><rect x="0" y="4" width="1" height="1" fill="#000"/><rect x="1" y="4" width="1" height="1" fill="#fff"/><rect x="2" y="4" width="3" height="1" fill="#000"/><rect x="5" y="4" width="1" height="1" fill="#000084"/><rect x="6" y="4" width="4" height="1" fill="#fff"/><rect x="10" y="4" width="2" height="1" fill="#000084"/><rect x="0" y="5" width="1" height="1" fill="#000"/><rect x="1" y="5" width="4" height="1" fill="#fff"/><rect x="5" y="5" width="1" height="1" fill="#000084"/><rect x="6" y="5" width="1" height="1" fill="#fff"/><rect x="7" y="5" width="2" height="1" fill="#000"/><rect x="9" y="5" width="1" height="1" fill="#fff"/><rect x="10" y="5" width="1" height="1" fill="#000084"/><rect x="11" y="5" width="1" height="1" fill="#fff"/><rect x="12" y="5" width="1" height="1" fill="#000084"/><rect x="0" y="6" width="1" height="1" fill="#000"/><rect x="1" y="6" width="1" height="1" fill="#fff"/><rect x="2" y="6" width="3" height="1" fill="#000"/><rect x="5" y="6" width="1" height="1" fill="#000084"/><rect x="6" y="6" width="4" height="1" fill="#fff"/><rect x="10" y="6" width="4" height="1" fill="#000084"/><rect x="0" y="7" width="1" height="1" fill="#000"/><rect x="1" y="7" width="4" height="1" fill="#fff"/><rect x="5" y="7" width="1" height="1" fill="#000084"/><rect x="6" y="7" width="1" height="1" fill="#fff"/><rect x="7" y="7" width="5" height="1" fill="#000"/><rect x="12" y="7" width="1" height="1" fill="#fff"/><rect x="13" y="7" width="1" height="1" fill="#000084"/><rect x="0" y="8" width="5" height="1" fill="#000"/><rect x="5" y="8" width="1" height="1" fill="#000084"/><rect x="6" y="8" width="7" height="1" fill="#fff"/><rect x="13" y="8" width="1" height="1" fill="#000084"/><rect x="5" y="9" width="1" height="1" fill="#000084"/><rect x="6" y="9" width="1" height="1" fill="#fff"/><rect x="7" y="9" width="5" height="1" fill="#000"/><rect x="12" y="9" width="1" height="1" fill="#fff"/><rect x="13" y="9" width="1" height="1" fill="#000084"/><rect x="5" y="10" width="1" height="1" fill="#000084"/><rect x="6" y="10" width="7" height="1" fill="#fff"/><rect x="13" y="10" width="1" height="1" fill="#000084"/><rect x="5" y="11" width="1" height="1" fill="#000084"/><rect x="6" y="11" width="1" height="1" fill="#fff"/><rect x="7" y="11" width="5" height="1" fill="#000"/><rect x="12" y="11" width="1" height="1" fill="#fff"/><rect x="13" y="11" width="1" height="1" fill="#000084"/><rect x="5" y="12" width="1" height="1" fill="#000084"/><rect x="6" y="12" width="7" height="1" fill="#fff"/><rect x="13" y="12" width="1" height="1" fill="#000084"/><rect x="5" y="13" width="9" height="1" fill="#000084"/></svg>
<svg style="left:219px;top:82px" width="16" height="14" viewBox="0 0 16 14" shape-rendering="crispEdges"><rect x="4" y="0" width="5" height="1" fill="#000"/><rect x="3" y="1" width="2" height="1" fill="#000"/><rect x="5" y="1" width="3" height="1" fill="#ffff00"/><rect x="8" y="1" width="2" height="1" fill="#000"/><rect x="1" y="2" width="3" height="1" fill="#000"/><rect x="4" y="2" width="1" height="1" fill="#ffff00"/><rect x="5" y="2" width="3" height="1" fill="#000"/><rect x="8" y="2" width="1" height="1" fill="#ffff00"/><rect x="9" y="2" width="4" height="1" fill="#000"/><rect x="0" y="3" width="1" height="1" fill="#000"/><rect x="1" y="3" width="1" height="1" fill="#848200"/><rect x="2" y="3" width="1" height="1" fill="#848284"/><rect x="3" y="3" width="7" height="1" fill="#000"/><rect x="10" y="3" width="1" height="1" fill="#848284"/><rect x="11" y="3" width="1" height="1" fill="#848200"/><rect x="12" y="3" width="1" height="1" fill="#000"/><rect x="0" y="4" width="1" height="1" fill="#000"/><rect x="1" y="4" width="1" height="1" fill="#848284"/><rect x="2" y="4" width="1" height="1" fill="#848200"/><rect x="3" y="4" width="1" height="1" fill="#848284"/><rect x="4" y="4" width="1" height="1" fill="#848200"/><rect x="5" y="4" width="1" height="1" fill="#848284"/><rect x="6" y="4" width="1" height="1" fill="#848200"/><rect x="7" y="4" width="1" height="1" fill="#848284"/><rect x="8" y="4" width="1" height="1" fill="#848200"/><rect x="9" y="4" width="1" height="1" fill="#848284"/><rect x="10" y="4" width="1" height="1" fill="#848200"/><rect x="11" y="4" width="1" height="1" fill="#848284"/><rect x="12" y="4" width="1" height="1" fill="#000"/><rect x="0" y="5" width="1" height="1" fill="#000"/><rect x="1" y="5" width="1" height="1" fill="#848200"/><rect x="2" y="5" width="1" height="1" fill="#848284"/><rect x="3" y="5" width="1" height="1" fill="#848200"/><rect x="4" y="5" width="1" height="1" fill="#848284"/><rect x="5" y="5" width="1" height="1" fill="#848200"/><rect x="6" y="5" width="1" height="1" fill="#848284"/><rect x="7" y="5" width="1" height="1" fill="#848200"/><rect x="8" y="5" width="1" height="1" fill="#848284"/><rect x="9" y="5" width="1" height="1" fill="#848200"/><rect x="10" y="5" width="1" height="1" fill="#848284"/><rect x="11" y="5" width="1" height="1" fill="#848200"/><rect x="12" y="5" width="1" height="1" fill="#000"/><rect x="0" y="6" width="1" height="1" fill="#000"/><rect x="1" y="6" width="1" height="1" fill="#848284"/><rect x="2" y="6" width="1" height="1" fill="#848200"/><rect x="3" y="6" width="1" height="1" fill="#848284"/><rect x="4" y="6" width="1" height="1" fill="#848200"/><rect x="5" y="6" width="1" height="1" fill="#848284"/><rect x="6" y="6" width="8" height="1" fill="#000084"/><rect x="0" y="7" width="1" height="1" fill="#000"/><rect x="1" y="7" width="1" height="1" fill="#848200"/><rect x="2" y="7" width="1" height="1" fill="#848284"/><rect x="3" y="7" width="1" height="1" fill="#848200"/><rect x="4" y="7" width="1" height="1" fill="#848284"/><rect x="5" y="7" width="1" height="1" fill="#848200"/><rect x="6" y="7" width="1" height="1" fill="#000084"/><rect x="7" y="7" width="5" height="1" fill="#fff"/><rect x="12" y="7" width="1" height="1" fill="#000084"/><rect x="13" y="7" width="1" height="1" fill="#fff"/><rect x="14" y="7" width="1" height="1" fill="#000084"/><rect x="0" y="8" width="1" height="1" fill="#000"/><rect x="1" y="8" width="1" height="1" fill="#848284"/><rect x="2" y="8" width="1" height="1" fill="#848200"/><rect x="3" y="8" width="1" height="1" fill="#848284"/><rect x="4" y="8" width="1" height="1" fill="#848200"/><rect x="5" y="8" width="1" height="1" fill="#848284"/><rect x="6" y="8" width="1" height="1" fill="#000084"/><rect x="7" y="8" width="1" height="1" fill="#fff"/><rect x="8" y="8" width="3" height="1" fill="#000"/><rect x="11" y="8" width="1" height="1" fill="#fff"/><rect x="12" y="8" width="4" height="1" fill="#000084"/><rect x="0" y="9" width="1" height="1" fill="#000"/><rect x="1" y="9" width="1" height="1" fill="#848200"/><rect x="2" y="9" width="1" height="1" fill="#848284"/><rect x="3" y="9" width="1" height="1" fill="#848200"/><rect x="4" y="9" width="1" height="1" fill="#848284"/><rect x="5" y="9" width="1" height="1" fill="#848200"/><rect x="6" y="9" width="1" height="1" fill="#000084"/><rect x="7" y="9" width="8" height="1" fill="#fff"/><rect x="15" y="9" width="1" height="1" fill="#000084"/><rect x="0" y="10" width="1" height="1" fill="#000"/><rect x="1" y="10" width="1" height="1" fill="#848284"/><rect x="2" y="10" width="1" height="1" fill="#848200"/><rect x="3" y="10" width="1" height="1" fill="#848284"/><rect x="4" y="10" width="1" height="1" fill="#848200"/><rect x="5" y="10" width="1" height="1" fill="#848284"/><rect x="6" y="10" width="1" height="1" fill="#000084"/><rect x="7" y="10" width="1" height="1" fill="#fff"/><rect x="8" y="10" width="6" height="1" fill="#000"/><rect x="14" y="10" width="1" height="1" fill="#fff"/><rect x="15" y="10" width="1" height="1" fill="#000084"/><rect x="0" y="11" width="1" height="1" fill="#000"/><rect x="1" y="11" width="1" height="1" fill="#848200"/><rect x="2" y="11" width="1" height="1" fill="#848284"/><rect x="3" y="11" width="1" height="1" fill="#848200"/><rect x="4" y="11" width="1" height="1" fill="#848284"/><rect x="5" y="11" width="1" height="1" fill="#848200"/><rect x="6" y="11" width="1" height="1" fill="#000084"/><rect x="7" y="11" width="8" height="1" fill="#fff"/><rect x="15" y="11" width="1" height="1" fill="#000084"/><rect x="0" y="12" width="6" height="1" fill="#000"/><rect x="6" y="12" width="1" height="1" fill="#000084"/><rect x="7" y="12" width="8" height="1" fill="#fff"/><rect x="15" y="12" width="1" height="1" fill="#000084"/><rect x="6" y="13" width="10" height="1" fill="#000084"/></svg>
<svg style="left:242px;top:81px" width="16" height="15" viewBox="0 0 16 15" shape-rendering="crispEdges"><rect x="11" y="0" width="3" height="1" fill="#000084"/><rect x="10" y="1" width="5" height="1" fill="#000084"/><rect x="9" y="2" width="1" height="1" fill="#000"/><rect x="10" y="2" width="5" height="1" fill="#000084"/><rect x="8" y="3" width="1" height="1" fill="#000"/><rect x="9" y="3" width="1" height="1" fill="#fff"/><rect x="10" y="3" width="1" height="1" fill="#000"/><rect x="11" y="3" width="3" height="1" fill="#000084"/><rect x="7" y="4" width="1" height="1" fill="#000"/><rect x="8" y="4" width="1" height="1" fill="#ffff00"/><rect x="9" y="4" width="2" height="1" fill="#fff"/><rect x="11" y="4" width="1" height="1" fill="#000"/><rect x="12" y="4" width="1" height="1" fill="#000084"/><rect x="6" y="5" width="1" height="1" fill="#000"/><rect x="7" y="5" width="1" height="1" fill="#fff"/><rect x="8" y="5" width="2" height="1" fill="#ffff00"/><rect x="10" y="5" width="2" height="1" fill="#fff"/><rect x="12" y="5" width="1" height="1" fill="#000"/><rect x="5" y="6" width="1" height="1" fill="#000"/><rect x="6" y="6" width="2" height="1" fill="#fff"/><rect x="8" y="6" width="3" height="1" fill="#ffff00"/><rect x="11" y="6" width="1" height="1" fill="#fff"/><rect x="12" y="6" width="1" height="1" fill="#000"/><rect x="2" y="7" width="4" height="1" fill="#000"/><rect x="6" y="7" width="3" height="1" fill="#fff"/><rect x="9" y="7" width="2" height="1" fill="#ffff00"/><rect x="11" y="7" width="1" height="1" fill="#000"/><rect x="1" y="8" width="1" height="1" fill="#000"/><rect x="2" y="8" width="3" height="1" fill="#fff"/><rect x="5" y="8" width="1" height="1" fill="#c6c3c6"/><rect x="6" y="8" width="1" height="1" fill="#000"/><rect x="7" y="8" width="3" height="1" fill="#fff"/><rect x="10" y="8" width="1" height="1" fill="#000"/><rect x="2" y="9" width="1" height="1" fill="#000"/><rect x="3" y="9" width="2" height="1" fill="#fff"/><rect x="5" y="9" width="2" height="1" fill="#c6c3c6"/><rect x="7" y="9" width="1" height="1" fill="#000"/><rect x="8" y="9" width="1" height="1" fill="#fff"/><rect x="9" y="9" width="1" height="1" fill="#000"/><rect x="3" y="10" width="1" height="1" fill="#000"/><rect x="4" y="10" width="1" height="1" fill="#fff"/><rect x="5" y="10" width="3" height="1" fill="#c6c3c6"/><rect x="8" y="10" width="1" height="1" fill="#000"/><rect x="3" y="11" width="2" height="1" fill="#000"/><rect x="5" y="11" width="1" height="1" fill="#fff"/><rect x="6" y="11" width="2" height="1" fill="#c6c3c6"/><rect x="8" y="11" width="1" height="1" fill="#000"/><rect x="4" y="12" width="1" height="1" fill="#ffff00"/><rect x="5" y="12" width="3" height="1" fill="#000"/><rect x="2" y="13" width="3" height="1" fill="#ffff00"/><rect x="0" y="14" width="3" height="1" fill="#ffff00"/></svg>
<svg style="left:273px;top:85px" width="12" height="7" viewBox="0 0 12 7" shape-rendering="crispEdges"><rect x="6" y="0" width="4" height="1" fill="#000084"/><rect x="0" y="1" width="1" height="1" fill="#000084"/><rect x="4" y="1" width="2" height="1" fill="#000084"/><rect x="10" y="1" width="1" height="1" fill="#000084"/><rect x="0" y="2" width="2" height="1" fill="#000084"/><rect x="3" y="2" width="2" height="1" fill="#000084"/><rect x="11" y="2" width="1" height="1" fill="#000084"/><rect x="0" y="3" width="4" height="1" fill="#000084"/><rect x="11" y="3" width="1" height="1" fill="#000084"/><rect x="0" y="4" width="4" height="1" fill="#000084"/><rect x="11" y="4" width="1" height="1" fill="#000084"/><rect x="0" y="5" width="5" height="1" fill="#000084"/><rect x="10" y="5" width="1" height="1" fill="#000084"/><rect x="0" y="6" width="6" height="1" fill="#000084"/><rect x="9" y="6" width="1" height="1" fill="#000084"/></svg>
<svg style="left:293px;top:88px" width="5" height="3" shape-rendering="crispEdges"><rect x="0" y="0" width="5" height="1" fill="#000"/><rect x="1" y="1" width="3" height="1" fill="#000"/><rect x="2" y="2" width="1" height="1" fill="#000"/></svg>
<svg style="left:307px;top:85px" width="13" height="8" viewBox="0 0 13 8" shape-rendering="crispEdges"><rect x="2" y="0" width="4" height="1" fill="#848284"/><rect x="1" y="1" width="1" height="1" fill="#848284"/><rect x="6" y="1" width="2" height="1" fill="#848284"/><rect x="11" y="1" width="1" height="1" fill="#848284"/><rect x="0" y="2" width="1" height="1" fill="#848284"/><rect x="7" y="2" width="2" height="1" fill="#848284"/><rect x="10" y="2" width="2" height="1" fill="#848284"/><rect x="12" y="2" width="1" height="1" fill="#fff"/><rect x="0" y="3" width="1" height="1" fill="#848284"/><rect x="8" y="3" width="4" height="1" fill="#848284"/><rect x="12" y="3" width="1" height="1" fill="#fff"/><rect x="0" y="4" width="1" height="1" fill="#848284"/><rect x="8" y="4" width="4" height="1" fill="#848284"/><rect x="12" y="4" width="1" height="1" fill="#fff"/><rect x="1" y="5" width="1" height="1" fill="#848284"/><rect x="7" y="5" width="5" height="1" fill="#848284"/><rect x="12" y="5" width="1" height="1" fill="#fff"/><rect x="2" y="6" width="1" height="1" fill="#848284"/><rect x="6" y="6" width="6" height="1" fill="#848284"/><rect x="12" y="6" width="1" height="1" fill="#fff"/><rect x="3" y="7" width="1" height="1" fill="#fff"/><rect x="7" y="7" width="6" height="1" fill="#fff"/></svg>
<svg style="left:328px;top:89px" width="5" height="3" shape-rendering="crispEdges"><rect x="0" y="0" width="5" height="1" fill="#fff"/><rect x="1" y="1" width="3" height="1" fill="#fff"/><rect x="2" y="2" width="1" height="1" fill="#fff"/></svg>
<svg style="left:327px;top:88px" width="5" height="3" shape-rendering="crispEdges"><rect x="0" y="0" width="5" height="1" fill="#848284"/><rect x="1" y="1" width="3" height="1" fill="#848284"/><rect x="2" y="2" width="1" height="1" fill="#848284"/></svg>
<svg style="left:346px;top:81px" width="16" height="15" viewBox="0 0 16 15" shape-rendering="crispEdges"><rect x="4" y="0" width="5" height="1" fill="#000"/><rect x="2" y="1" width="2" height="1" fill="#000"/><rect x="4" y="1" width="1" height="1" fill="#00ffff"/><rect x="5" y="1" width="3" height="1" fill="#008200"/><rect x="8" y="1" width="1" height="1" fill="#0000ff"/><rect x="9" y="1" width="2" height="1" fill="#000"/><rect x="1" y="2" width="1" height="1" fill="#000"/><rect x="2" y="2" width="1" height="1" fill="#0000ff"/><rect x="3" y="2" width="1" height="1" fill="#00ffff"/><rect x="4" y="2" width="1" height="1" fill="#fff"/><rect x="5" y="2" width="4" height="1" fill="#008200"/><rect x="9" y="2" width="2" height="1" fill="#0000ff"/><rect x="11" y="2" width="1" height="1" fill="#000"/><rect x="1" y="3" width="1" height="1" fill="#000"/><rect x="2" y="3" width="1" height="1" fill="#0000ff"/><rect x="3" y="3" width="1" height="1" fill="#fff"/><rect x="4" y="3" width="4" height="1" fill="#008200"/><rect x="8" y="3" width="2" height="1" fill="#0000ff"/><rect x="10" y="3" width="1" height="1" fill="#008200"/><rect x="11" y="3" width="1" height="1" fill="#000"/><rect x="0" y="4" width="1" height="1" fill="#000"/><rect x="1" y="4" width="3" height="1" fill="#0000ff"/><rect x="4" y="4" width="3" height="1" fill="#008200"/><rect x="7" y="4" width="2" height="1" fill="#0000ff"/><rect x="9" y="4" width="3" height="1" fill="#008200"/><rect x="12" y="4" width="1" height="1" fill="#000"/><rect x="0" y="5" width="1" height="1" fill="#000"/><rect x="1" y="5" width="4" height="1" fill="#0000ff"/><rect x="5" y="5" width="2" height="1" fill="#008200"/><rect x="7" y="5" width="2" height="1" fill="#0000ff"/><rect x="9" y="5" width="3" height="1" fill="#008200"/><rect x="12" y="5" width="1" height="1" fill="#000"/><rect x="0" y="6" width="1" height="1" fill="#000"/><rect x="1" y="6" width="4" height="1" fill="#0000ff"/><rect x="5" y="6" width="1" height="1" fill="#008200"/><rect x="6" y="6" width="4" height="1" fill="#0000ff"/><rect x="10" y="6" width="1" height="1" fill="#008200"/><rect x="11" y="6" width="1" height="1" fill="#0000ff"/><rect x="12" y="6" width="1" height="1" fill="#000"/><rect x="0" y="7" width="1" height="1" fill="#000"/><rect x="1" y="7" width="5" height="1" fill="#0000ff"/><rect x="6" y="7" width="2" height="1" fill="#008200"/><rect x="8" y="7" width="4" height="1" fill="#0000ff"/><rect x="12" y="7" width="1" height="1" fill="#000"/><rect x="1" y="8" width="1" height="1" fill="#000"/><rect x="2" y="8" width="4" height="1" fill="#0000ff"/><rect x="6" y="8" width="2" height="1" fill="#008200"/><rect x="8" y="8" width="3" height="1" fill="#0000ff"/><rect x="11" y="8" width="1" height="1" fill="#000"/><rect x="1" y="9" width="1" height="1" fill="#000"/><rect x="2" y="9" width="4" height="1" fill="#0000ff"/><rect x="6" y="9" width="1" height="1" fill="#008200"/><rect x="7" y="9" width="2" height="1" fill="#0000ff"/><rect x="9" y="9" width="6" height="1" fill="#000"/><rect x="2" y="10" width="7" height="1" fill="#000"/><rect x="9" y="10" width="6" height="1" fill="#fff"/><rect x="15" y="10" width="1" height="1" fill="#000"/><rect x="4" y="11" width="2" height="1" fill="#000"/><rect x="6" y="11" width="2" height="1" fill="#fff"/><rect x="8" y="11" width="5" height="1" fill="#000"/><rect x="13" y="11" width="2" height="1" fill="#fff"/><rect x="15" y="11" width="1" height="1" fill="#000"/><rect x="4" y="12" width="1" height="1" fill="#000"/><rect x="5" y="12" width="2" height="1" fill="#fff"/><rect x="7" y="12" width="6" height="1" fill="#000"/><rect x="13" y="12" width="2" height="1" fill="#fff"/><rect x="15" y="12" width="1" height="1" fill="#000"/><rect x="4" y="13" width="1" height="1" fill="#000"/><rect x="5" y="13" width="5" height="1" fill="#fff"/><rect x="10" y="13" width="1" height="1" fill="#000"/><rect x="11" y="13" width="3" height="1" fill="#fff"/><rect x="14" y="13" width="1" height="1" fill="#000"/><rect x="5" y="14" width="9" height="1" fill="#000"/></svg>
<svg style="left:368px;top:81px" width="16" height="14" viewBox="0 0 16 14" shape-rendering="crispEdges"><rect x="4" y="0" width="5" height="1" fill="#000"/><rect x="2" y="1" width="2" height="1" fill="#000"/><rect x="4" y="1" width="1" height="1" fill="#00ffff"/><rect x="5" y="1" width="3" height="1" fill="#008200"/><rect x="8" y="1" width="1" height="1" fill="#0000ff"/><rect x="9" y="1" width="2" height="1" fill="#000"/><rect x="12" y="1" width="1" height="1" fill="#000"/><rect x="1" y="2" width="1" height="1" fill="#000"/><rect x="2" y="2" width="1" height="1" fill="#0000ff"/><rect x="3" y="2" width="1" height="1" fill="#00ffff"/><rect x="4" y="2" width="1" height="1" fill="#fff"/><rect x="5" y="2" width="4" height="1" fill="#008200"/><rect x="9" y="2" width="2" height="1" fill="#0000ff"/><rect x="11" y="2" width="1" height="1" fill="#000"/><rect x="12" y="2" width="1" height="1" fill="#00ffff"/><rect x="13" y="2" width="1" height="1" fill="#000"/><rect x="1" y="3" width="1" height="1" fill="#000"/><rect x="2" y="3" width="1" height="1" fill="#0000ff"/><rect x="3" y="3" width="1" height="1" fill="#fff"/><rect x="4" y="3" width="4" height="1" fill="#008200"/><rect x="8" y="3" width="4" height="1" fill="#000"/><rect x="12" y="3" width="2" height="1" fill="#00ffff"/><rect x="14" y="3" width="1" height="1" fill="#000"/><rect x="0" y="4" width="1" height="1" fill="#000"/><rect x="1" y="4" width="3" height="1" fill="#0000ff"/><rect x="4" y="4" width="3" height="1" fill="#008200"/><rect x="7" y="4" width="1" height="1" fill="#0000ff"/><rect x="8" y="4" width="1" height="1" fill="#000"/><rect x="9" y="4" width="6" height="1" fill="#00ffff"/><rect x="15" y="4" width="1" height="1" fill="#000"/><rect x="0" y="5" width="1" height="1" fill="#000"/><rect x="1" y="5" width="4" height="1" fill="#0000ff"/><rect x="5" y="5" width="2" height="1" fill="#008200"/><rect x="7" y="5" width="1" height="1" fill="#0000ff"/><rect x="8" y="5" width="4" height="1" fill="#000"/><rect x="12" y="5" width="2" height="1" fill="#00ffff"/><rect x="14" y="5" width="1" height="1" fill="#000"/><rect x="0" y="6" width="1" height="1" fill="#000"/><rect x="1" y="6" width="4" height="1" fill="#0000ff"/><rect x="5" y="6" width="1" height="1" fill="#008200"/><rect x="6" y="6" width="4" height="1" fill="#0000ff"/><rect x="10" y="6" width="1" height="1" fill="#008200"/><rect x="11" y="6" width="1" height="1" fill="#000"/><rect x="12" y="6" width="1" height="1" fill="#00ffff"/><rect x="13" y="6" width="1" height="1" fill="#000"/><rect x="0" y="7" width="1" height="1" fill="#000"/><rect x="1" y="7" width="5" height="1" fill="#0000ff"/><rect x="6" y="7" width="2" height="1" fill="#008200"/><rect x="8" y="7" width="3" height="1" fill="#0000ff"/><rect x="11" y="7" width="2" height="1" fill="#000"/><rect x="1" y="8" width="1" height="1" fill="#000"/><rect x="2" y="8" width="3" height="1" fill="#0000ff"/><rect x="5" y="8" width="1" height="1" fill="#000"/><rect x="6" y="8" width="2" height="1" fill="#008200"/><rect x="8" y="8" width="3" height="1" fill="#0000ff"/><rect x="11" y="8" width="1" height="1" fill="#000"/><rect x="1" y="9" width="1" height="1" fill="#000"/><rect x="2" y="9" width="2" height="1" fill="#0000ff"/><rect x="4" y="9" width="1" height="1" fill="#000"/><rect x="5" y="9" width="1" height="1" fill="#00ffff"/><rect x="6" y="9" width="5" height="1" fill="#000"/><rect x="2" y="10" width="2" height="1" fill="#000"/><rect x="4" y="10" width="6" height="1" fill="#00ffff"/><rect x="10" y="10" width="1" height="1" fill="#000"/><rect x="3" y="11" width="2" height="1" fill="#000"/><rect x="5" y="11" width="1" height="1" fill="#00ffff"/><rect x="6" y="11" width="5" height="1" fill="#000"/><rect x="5" y="12" width="1" height="1" fill="#000"/><rect x="6" y="12" width="1" height="1" fill="#00ffff"/><rect x="7" y="12" width="1" height="1" fill="#000"/><rect x="6" y="13" width="2" height="1" fill="#000"/></svg>
<svg style="left:400px;top:84px" width="9" height="9" viewBox="0 0 9 9" shape-rendering="crispEdges"><rect x="0" y="0" width="9" height="1" fill="#000"/><rect x="1" y="1" width="2" height="1" fill="#000"/><rect x="7" y="1" width="2" height="1" fill="#000"/><rect x="2" y="2" width="2" height="1" fill="#000"/><rect x="8" y="2" width="1" height="1" fill="#000"/><rect x="3" y="3" width="2" height="1" fill="#000"/><rect x="4" y="4" width="2" height="1" fill="#000"/><rect x="3" y="5" width="2" height="1" fill="#000"/><rect x="2" y="6" width="2" height="1" fill="#000"/><rect x="8" y="6" width="1" height="1" fill="#000"/><rect x="1" y="7" width="2" height="1" fill="#000"/><rect x="7" y="7" width="2" height="1" fill="#000"/><rect x="0" y="8" width="9" height="1" fill="#000"/></svg>
<div class="t" style="left:421px;top:80px;font-family:'Liberation Serif',serif;font-style:italic;font-weight:bold;font-size:16px;line-height:16px;text-shadow:0.5px 0 0 #000">f</div>
<div class="t" style="left:427px;top:86px;font-family:'Liberation Serif',serif;font-style:italic;font-weight:bold;font-size:10px;line-height:9px;text-shadow:0.4px 0 0 #000">x</div>
<div class="t" style="left:444px;top:80px;font-family:'Liberation Serif',serif;font-weight:bold;font-size:10px;line-height:9px;color:#000084">A</div>
<div class="t" style="left:444px;top:88px;font-family:'Liberation Serif',serif;font-weight:bold;font-size:10px;line-height:9px;color:#840000">Z</div>
<div style="left:456px;top:81px;width:1px;height:13px;background:#000"></div>
<svg style="left:454px;top:91px" width="5" height="5" shape-rendering="crispEdges"><path d="M0 0h5L2.500 5z" fill="#000"/></svg>
<div class="t" style="left:467px;top:80px;font-family:'Liberation Serif',serif;font-weight:bold;font-size:10px;line-height:9px;color:#840000">Z</div>
<div class="t" style="left:467px;top:88px;font-family:'Liberation Serif',serif;font-weight:bold;font-size:10px;line-height:9px;color:#000084">A</div>
<div style="left:479px;top:81px;width:1px;height:13px;background:#000"></div>
<svg style="left:477px;top:91px" width="5" height="5" shape-rendering="crispEdges"><path d="M0 0h5L2.500 5z" fill="#000"/></svg>
<div class="dithw" style="left:492px;top:78px;width:23px;height:22px;box-shadow:inset 1px 1px 0 #848284,inset -1px -1px 0 #fff;"></div>
<svg style="left:496px;top:82px" width="16" height="15" viewBox="0 0 16 15" shape-rendering="crispEdges"><rect x="3" y="0" width="1" height="1" fill="#000"/><rect x="2" y="1" width="1" height="1" fill="#000"/><rect x="3" y="1" width="1" height="1" fill="#fff"/><rect x="4" y="1" width="1" height="1" fill="#000"/><rect x="1" y="2" width="1" height="1" fill="#000"/><rect x="2" y="2" width="2" height="1" fill="#fff"/><rect x="4" y="2" width="1" height="1" fill="#000"/><rect x="7" y="2" width="4" height="1" fill="#000"/><rect x="1" y="3" width="1" height="1" fill="#000"/><rect x="2" y="3" width="2" height="1" fill="#fff"/><rect x="4" y="3" width="1" height="1" fill="#000"/><rect x="7" y="3" width="1" height="1" fill="#000"/><rect x="8" y="3" width="2" height="1" fill="#ffff00"/><rect x="10" y="3" width="1" height="1" fill="#000"/><rect x="1" y="4" width="1" height="1" fill="#000"/><rect x="2" y="4" width="2" height="1" fill="#fff"/><rect x="4" y="4" width="1" height="1" fill="#000"/><rect x="7" y="4" width="1" height="1" fill="#000"/><rect x="8" y="4" width="2" height="1" fill="#ffff00"/><rect x="10" y="4" width="1" height="1" fill="#000"/><rect x="12" y="4" width="4" height="1" fill="#000"/><rect x="1" y="5" width="1" height="1" fill="#000"/><rect x="2" y="5" width="2" height="1" fill="#fff"/><rect x="4" y="5" width="1" height="1" fill="#000"/><rect x="7" y="5" width="1" height="1" fill="#000"/><rect x="8" y="5" width="2" height="1" fill="#ffff00"/><rect x="10" y="5" width="1" height="1" fill="#000"/><rect x="12" y="5" width="1" height="1" fill="#000"/><rect x="13" y="5" width="2" height="1" fill="#ff0000"/><rect x="15" y="5" width="1" height="1" fill="#000"/><rect x="1" y="6" width="1" height="1" fill="#000"/><rect x="2" y="6" width="2" height="1" fill="#fff"/><rect x="4" y="6" width="1" height="1" fill="#000"/><rect x="7" y="6" width="1" height="1" fill="#000"/><rect x="8" y="6" width="2" height="1" fill="#ffff00"/><rect x="10" y="6" width="1" height="1" fill="#000"/><rect x="12" y="6" width="1" height="1" fill="#000"/><rect x="13" y="6" width="2" height="1" fill="#ff0000"/><rect x="15" y="6" width="1" height="1" fill="#000"/><rect x="1" y="7" width="1" height="1" fill="#000"/><rect x="2" y="7" width="1" height="1" fill="#fff"/><rect x="3" y="7" width="5" height="1" fill="#000"/><rect x="8" y="7" width="2" height="1" fill="#ffff00"/><rect x="10" y="7" width="1" height="1" fill="#000"/><rect x="12" y="7" width="1" height="1" fill="#000"/><rect x="13" y="7" width="2" height="1" fill="#ff0000"/><rect x="15" y="7" width="1" height="1" fill="#000"/><rect x="1" y="8" width="1" height="1" fill="#000"/><rect x="2" y="8" width="1" height="1" fill="#fff"/><rect x="3" y="8" width="1" height="1" fill="#000"/><rect x="4" y="8" width="2" height="1" fill="#0000ff"/><rect x="6" y="8" width="2" height="1" fill="#000"/><rect x="8" y="8" width="2" height="1" fill="#ffff00"/><rect x="10" y="8" width="1" height="1" fill="#000"/><rect x="12" y="8" width="1" height="1" fill="#000"/><rect x="13" y="8" width="2" height="1" fill="#ff0000"/><rect x="15" y="8" width="1" height="1" fill="#000"/><rect x="1" y="9" width="1" height="1" fill="#000"/><rect x="2" y="9" width="1" height="1" fill="#fff"/><rect x="3" y="9" width="1" height="1" fill="#000"/><rect x="4" y="9" width="2" height="1" fill="#0000ff"/><rect x="6" y="9" width="2" height="1" fill="#000"/><rect x="8" y="9" width="2" height="1" fill="#ffff00"/><rect x="10" y="9" width="3" height="1" fill="#000"/><rect x="13" y="9" width="2" height="1" fill="#ff0000"/><rect x="15" y="9" width="1" height="1" fill="#000"/><rect x="1" y="10" width="1" height="1" fill="#000"/><rect x="2" y="10" width="1" height="1" fill="#fff"/><rect x="3" y="10" width="1" height="1" fill="#000"/><rect x="4" y="10" width="2" height="1" fill="#0000ff"/><rect x="6" y="10" width="2" height="1" fill="#000"/><rect x="8" y="10" width="2" height="1" fill="#ffff00"/><rect x="10" y="10" width="1" height="1" fill="#000"/><rect x="12" y="10" width="1" height="1" fill="#000"/><rect x="13" y="10" width="2" height="1" fill="#ff0000"/><rect x="15" y="10" width="1" height="1" fill="#000"/><rect x="1" y="11" width="1" height="1" fill="#000"/><rect x="2" y="11" width="1" height="1" fill="#fff"/><rect x="3" y="11" width="1" height="1" fill="#000"/><rect x="4" y="11" width="2" height="1" fill="#0000ff"/><rect x="6" y="11" width="2" height="1" fill="#000"/><rect x="8" y="11" width="2" height="1" fill="#ffff00"/><rect x="10" y="11" width="1" height="1" fill="#000"/><rect x="12" y="11" width="1" height="1" fill="#000"/><rect x="13" y="11" width="2" height="1" fill="#ff0000"/><rect x="15" y="11" width="1" height="1" fill="#000"/><rect x="1" y="12" width="1" height="1" fill="#000"/><rect x="2" y="12" width="1" height="1" fill="#fff"/><rect x="3" y="12" width="13" height="1" fill="#000"/><rect x="1" y="13" width="1" height="1" fill="#000"/><rect x="2" y="13" width="12" height="1" fill="#fff"/><rect x="14" y="13" width="1" height="1" fill="#000"/><rect x="1" y="14" width="13" height="1" fill="#000"/></svg>
<svg style="left:520px;top:81px" width="14" height="16" viewBox="0 0 14 16" shape-rendering="crispEdges"><rect x="4" y="0" width="5" height="1" fill="#000"/><rect x="10" y="0" width="1" height="1" fill="#000"/><rect x="2" y="1" width="2" height="1" fill="#000"/><rect x="4" y="1" width="1" height="1" fill="#00ffff"/><rect x="5" y="1" width="1" height="1" fill="#0000ff"/><rect x="6" y="1" width="1" height="1" fill="#008200"/><rect x="7" y="1" width="2" height="1" fill="#0000ff"/><rect x="9" y="1" width="1" height="1" fill="#000"/><rect x="10" y="1" width="1" height="1" fill="#ffff00"/><rect x="11" y="1" width="1" height="1" fill="#000"/><rect x="1" y="2" width="1" height="1" fill="#000"/><rect x="2" y="2" width="1" height="1" fill="#0000ff"/><rect x="3" y="2" width="1" height="1" fill="#00ffff"/><rect x="4" y="2" width="1" height="1" fill="#fff"/><rect x="5" y="2" width="3" height="1" fill="#008200"/><rect x="8" y="2" width="2" height="1" fill="#0000ff"/><rect x="10" y="2" width="1" height="1" fill="#000"/><rect x="11" y="2" width="1" height="1" fill="#ffff00"/><rect x="12" y="2" width="1" height="1" fill="#000"/><rect x="1" y="3" width="1" height="1" fill="#000"/><rect x="2" y="3" width="2" height="1" fill="#0000ff"/><rect x="4" y="3" width="5" height="1" fill="#008200"/><rect x="9" y="3" width="2" height="1" fill="#0000ff"/><rect x="11" y="3" width="1" height="1" fill="#000"/><rect x="12" y="3" width="1" height="1" fill="#ffff00"/><rect x="13" y="3" width="1" height="1" fill="#000"/><rect x="0" y="4" width="1" height="1" fill="#000"/><rect x="1" y="4" width="4" height="1" fill="#0000ff"/><rect x="5" y="4" width="3" height="1" fill="#008200"/><rect x="8" y="4" width="1" height="1" fill="#0000ff"/><rect x="9" y="4" width="1" height="1" fill="#008200"/><rect x="10" y="4" width="1" height="1" fill="#0000ff"/><rect x="11" y="4" width="1" height="1" fill="#000"/><rect x="12" y="4" width="1" height="1" fill="#ffff00"/><rect x="13" y="4" width="1" height="1" fill="#000"/><rect x="0" y="5" width="1" height="1" fill="#000"/><rect x="1" y="5" width="2" height="1" fill="#0000ff"/><rect x="3" y="5" width="1" height="1" fill="#008200"/><rect x="4" y="5" width="2" height="1" fill="#0000ff"/><rect x="6" y="5" width="2" height="1" fill="#008200"/><rect x="8" y="5" width="3" height="1" fill="#0000ff"/><rect x="11" y="5" width="1" height="1" fill="#000"/><rect x="12" y="5" width="1" height="1" fill="#ffff00"/><rect x="13" y="5" width="1" height="1" fill="#000"/><rect x="0" y="6" width="1" height="1" fill="#000"/><rect x="1" y="6" width="1" height="1" fill="#0000ff"/><rect x="2" y="6" width="2" height="1" fill="#008200"/><rect x="4" y="6" width="3" height="1" fill="#0000ff"/><rect x="7" y="6" width="1" height="1" fill="#008200"/><rect x="8" y="6" width="3" height="1" fill="#0000ff"/><rect x="11" y="6" width="1" height="1" fill="#000"/><rect x="12" y="6" width="1" height="1" fill="#ffff00"/><rect x="13" y="6" width="1" height="1" fill="#000"/><rect x="0" y="7" width="1" height="1" fill="#000"/><rect x="1" y="7" width="2" height="1" fill="#0000ff"/><rect x="3" y="7" width="2" height="1" fill="#008200"/><rect x="5" y="7" width="6" height="1" fill="#0000ff"/><rect x="11" y="7" width="1" height="1" fill="#000"/><rect x="12" y="7" width="1" height="1" fill="#ffff00"/><rect x="13" y="7" width="1" height="1" fill="#000"/><rect x="1" y="8" width="1" height="1" fill="#000"/><rect x="2" y="8" width="1" height="1" fill="#0000ff"/><rect x="3" y="8" width="3" height="1" fill="#008200"/><rect x="6" y="8" width="4" height="1" fill="#0000ff"/><rect x="10" y="8" width="1" height="1" fill="#000"/><rect x="11" y="8" width="1" height="1" fill="#ffff00"/><rect x="12" y="8" width="1" height="1" fill="#000"/><rect x="1" y="9" width="1" height="1" fill="#000"/><rect x="2" y="9" width="2" height="1" fill="#0000ff"/><rect x="4" y="9" width="1" height="1" fill="#008200"/><rect x="5" y="9" width="4" height="1" fill="#0000ff"/><rect x="9" y="9" width="2" height="1" fill="#000"/><rect x="11" y="9" width="1" height="1" fill="#ffff00"/><rect x="12" y="9" width="1" height="1" fill="#000"/><rect x="2" y="10" width="2" height="1" fill="#000"/><rect x="4" y="10" width="3" height="1" fill="#0000ff"/><rect x="7" y="10" width="2" height="1" fill="#000"/><rect x="9" y="10" width="2" height="1" fill="#ffff00"/><rect x="11" y="10" width="1" height="1" fill="#000"/><rect x="3" y="11" width="4" height="1" fill="#000"/><rect x="7" y="11" width="3" height="1" fill="#ffff00"/><rect x="10" y="11" width="1" height="1" fill="#000"/><rect x="5" y="12" width="1" height="1" fill="#000"/><rect x="6" y="12" width="2" height="1" fill="#ffff00"/><rect x="8" y="12" width="1" height="1" fill="#000"/><rect x="2" y="13" width="3" height="1" fill="#000"/><rect x="5" y="13" width="4" height="1" fill="#ffff00"/><rect x="9" y="13" width="3" height="1" fill="#000"/><rect x="2" y="14" width="1" height="1" fill="#000"/><rect x="3" y="14" width="8" height="1" fill="#ffff00"/><rect x="11" y="14" width="1" height="1" fill="#000"/><rect x="2" y="15" width="10" height="1" fill="#000"/></svg>
<svg style="left:541px;top:82px" width="16" height="14" viewBox="0 0 16 14" shape-rendering="crispEdges"><rect x="5" y="0" width="8" height="1" fill="#000"/><rect x="4" y="1" width="1" height="1" fill="#000"/><rect x="5" y="1" width="6" height="1" fill="#ffff00"/><rect x="11" y="1" width="1" height="1" fill="#000"/><rect x="12" y="1" width="1" height="1" fill="#848200"/><rect x="13" y="1" width="1" height="1" fill="#000"/><rect x="3" y="2" width="1" height="1" fill="#000"/><rect x="4" y="2" width="6" height="1" fill="#ffff00"/><rect x="10" y="2" width="1" height="1" fill="#000"/><rect x="11" y="2" width="2" height="1" fill="#848200"/><rect x="13" y="2" width="1" height="1" fill="#000"/><rect x="3" y="3" width="7" height="1" fill="#000"/><rect x="10" y="3" width="3" height="1" fill="#848200"/><rect x="13" y="3" width="1" height="1" fill="#000"/><rect x="3" y="4" width="1" height="1" fill="#000"/><rect x="4" y="4" width="4" height="1" fill="#ffff00"/><rect x="8" y="4" width="1" height="1" fill="#000"/><rect x="9" y="4" width="3" height="1" fill="#848200"/><rect x="12" y="4" width="1" height="1" fill="#000"/><rect x="4" y="5" width="1" height="1" fill="#000084"/><rect x="5" y="5" width="1" height="1" fill="#000"/><rect x="6" y="5" width="2" height="1" fill="#ffff00"/><rect x="8" y="5" width="1" height="1" fill="#000"/><rect x="9" y="5" width="2" height="1" fill="#848200"/><rect x="11" y="5" width="1" height="1" fill="#000"/><rect x="12" y="5" width="1" height="1" fill="#c6c3c6"/><rect x="13" y="5" width="1" height="1" fill="#000"/><rect x="3" y="6" width="2" height="1" fill="#000084"/><rect x="5" y="6" width="1" height="1" fill="#000"/><rect x="6" y="6" width="2" height="1" fill="#ffff00"/><rect x="8" y="6" width="1" height="1" fill="#000"/><rect x="9" y="6" width="1" height="1" fill="#848200"/><rect x="10" y="6" width="1" height="1" fill="#000"/><rect x="11" y="6" width="2" height="1" fill="#fff"/><rect x="13" y="6" width="1" height="1" fill="#c6c3c6"/><rect x="14" y="6" width="1" height="1" fill="#000"/><rect x="2" y="7" width="3" height="1" fill="#000084"/><rect x="5" y="7" width="1" height="1" fill="#000"/><rect x="6" y="7" width="2" height="1" fill="#ffff00"/><rect x="8" y="7" width="2" height="1" fill="#000"/><rect x="10" y="7" width="2" height="1" fill="#fff"/><rect x="12" y="7" width="3" height="1" fill="#c6c3c6"/><rect x="15" y="7" width="1" height="1" fill="#000"/><rect x="1" y="8" width="2" height="1" fill="#000084"/><rect x="4" y="8" width="1" height="1" fill="#000084"/><rect x="5" y="8" width="4" height="1" fill="#000"/><rect x="9" y="8" width="2" height="1" fill="#00ffff"/><rect x="11" y="8" width="1" height="1" fill="#fff"/><rect x="12" y="8" width="3" height="1" fill="#c6c3c6"/><rect x="15" y="8" width="1" height="1" fill="#000"/><rect x="0" y="9" width="6" height="1" fill="#000084"/><rect x="6" y="9" width="2" height="1" fill="#000"/><rect x="8" y="9" width="4" height="1" fill="#00ffff"/><rect x="12" y="9" width="2" height="1" fill="#c6c3c6"/><rect x="14" y="9" width="1" height="1" fill="#000"/><rect x="4" y="10" width="2" height="1" fill="#000084"/><rect x="6" y="10" width="1" height="1" fill="#000"/><rect x="7" y="10" width="5" height="1" fill="#00ffff"/><rect x="12" y="10" width="2" height="1" fill="#000"/><rect x="4" y="11" width="2" height="1" fill="#000084"/><rect x="6" y="11" width="1" height="1" fill="#000"/><rect x="7" y="11" width="4" height="1" fill="#00ffff"/><rect x="11" y="11" width="2" height="1" fill="#000"/><rect x="5" y="12" width="1" height="1" fill="#000084"/><rect x="6" y="12" width="2" height="1" fill="#000"/><rect x="8" y="12" width="3" height="1" fill="#00ffff"/><rect x="11" y="12" width="1" height="1" fill="#000"/><rect x="7" y="13" width="4" height="1" fill="#000"/></svg>
<svg style="left:628px;top:81px" width="16" height="15" viewBox="0 0 16 15" shape-rendering="crispEdges"><rect x="2" y="0" width="14" height="1" fill="#000"/><rect x="2" y="1" width="1" height="1" fill="#000"/><rect x="3" y="1" width="1" height="1" fill="#fff"/><rect x="4" y="1" width="1" height="1" fill="#ffff80"/><rect x="5" y="1" width="1" height="1" fill="#fff"/><rect x="6" y="1" width="1" height="1" fill="#ffff80"/><rect x="7" y="1" width="1" height="1" fill="#fff"/><rect x="8" y="1" width="1" height="1" fill="#ffff80"/><rect x="9" y="1" width="1" height="1" fill="#fff"/><rect x="10" y="1" width="1" height="1" fill="#ffff80"/><rect x="11" y="1" width="1" height="1" fill="#fff"/><rect x="12" y="1" width="1" height="1" fill="#ffff80"/><rect x="13" y="1" width="1" height="1" fill="#fff"/><rect x="14" y="1" width="1" height="1" fill="#ffff80"/><rect x="15" y="1" width="1" height="1" fill="#000"/><rect x="2" y="2" width="1" height="1" fill="#000"/><rect x="3" y="2" width="1" height="1" fill="#ffff80"/><rect x="4" y="2" width="1" height="1" fill="#fff"/><rect x="5" y="2" width="1" height="1" fill="#ffff80"/><rect x="6" y="2" width="1" height="1" fill="#fff"/><rect x="7" y="2" width="1" height="1" fill="#ffff80"/><rect x="8" y="2" width="1" height="1" fill="#fff"/><rect x="9" y="2" width="1" height="1" fill="#ffff80"/><rect x="10" y="2" width="1" height="1" fill="#fff"/><rect x="11" y="2" width="1" height="1" fill="#ffff80"/><rect x="12" y="2" width="1" height="1" fill="#fff"/><rect x="13" y="2" width="1" height="1" fill="#ffff80"/><rect x="14" y="2" width="1" height="1" fill="#fff"/><rect x="15" y="2" width="1" height="1" fill="#000"/><rect x="2" y="3" width="1" height="1" fill="#000"/><rect x="3" y="3" width="1" height="1" fill="#fff"/><rect x="4" y="3" width="1" height="1" fill="#ffff80"/><rect x="5" y="3" width="1" height="1" fill="#fff"/><rect x="6" y="3" width="1" height="1" fill="#ffff80"/><rect x="7" y="3" width="1" height="1" fill="#fff"/><rect x="8" y="3" width="1" height="1" fill="#ffff80"/><rect x="9" y="3" width="1" height="1" fill="#fff"/><rect x="10" y="3" width="1" height="1" fill="#ffff80"/><rect x="11" y="3" width="1" height="1" fill="#fff"/><rect x="12" y="3" width="1" height="1" fill="#ffff80"/><rect x="13" y="3" width="1" height="1" fill="#fff"/><rect x="14" y="3" width="1" height="1" fill="#ffff80"/><rect x="15" y="3" width="1" height="1" fill="#000"/><rect x="2" y="4" width="1" height="1" fill="#000"/><rect x="3" y="4" width="1" height="1" fill="#ffff80"/><rect x="4" y="4" width="1" height="1" fill="#fff"/><rect x="5" y="4" width="1" height="1" fill="#ffff80"/><rect x="6" y="4" width="1" height="1" fill="#fff"/><rect x="7" y="4" width="1" height="1" fill="#ffff80"/><rect x="8" y="4" width="1" height="1" fill="#fff"/><rect x="9" y="4" width="1" height="1" fill="#ffff80"/><rect x="10" y="4" width="1" height="1" fill="#fff"/><rect x="11" y="4" width="1" height="1" fill="#ffff80"/><rect x="12" y="4" width="1" height="1" fill="#fff"/><rect x="13" y="4" width="1" height="1" fill="#ffff80"/><rect x="14" y="4" width="1" height="1" fill="#fff"/><rect x="15" y="4" width="1" height="1" fill="#000"/><rect x="1" y="5" width="4" height="1" fill="#000"/><rect x="5" y="5" width="1" height="1" fill="#fff"/><rect x="6" y="5" width="1" height="1" fill="#ffff80"/><rect x="7" y="5" width="1" height="1" fill="#fff"/><rect x="8" y="5" width="1" height="1" fill="#ffff80"/><rect x="9" y="5" width="1" height="1" fill="#fff"/><rect x="10" y="5" width="1" height="1" fill="#ffff80"/><rect x="11" y="5" width="1" height="1" fill="#fff"/><rect x="12" y="5" width="1" height="1" fill="#ffff80"/><rect x="13" y="5" width="1" height="1" fill="#fff"/><rect x="14" y="5" width="1" height="1" fill="#ffff80"/><rect x="15" y="5" width="1" height="1" fill="#000"/><rect x="0" y="6" width="1" height="1" fill="#000"/><rect x="1" y="6" width="1" height="1" fill="#ffff00"/><rect x="2" y="6" width="1" height="1" fill="#848200"/><rect x="3" y="6" width="1" height="1" fill="#ffff00"/><rect x="4" y="6" width="1" height="1" fill="#848200"/><rect x="5" y="6" width="1" height="1" fill="#000"/><rect x="6" y="6" width="1" height="1" fill="#ffff80"/><rect x="7" y="6" width="1" height="1" fill="#fff"/><rect x="8" y="6" width="1" height="1" fill="#ffff80"/><rect x="9" y="6" width="1" height="1" fill="#fff"/><rect x="10" y="6" width="1" height="1" fill="#ffff80"/><rect x="11" y="6" width="1" height="1" fill="#fff"/><rect x="12" y="6" width="1" height="1" fill="#ffff80"/><rect x="13" y="6" width="2" height="1" fill="#fff"/><rect x="15" y="6" width="1" height="1" fill="#000"/><rect x="0" y="7" width="1" height="1" fill="#000"/><rect x="1" y="7" width="1" height="1" fill="#848200"/><rect x="2" y="7" width="1" height="1" fill="#ffff00"/><rect x="3" y="7" width="1" height="1" fill="#848200"/><rect x="4" y="7" width="1" height="1" fill="#ffff00"/><rect x="5" y="7" width="1" height="1" fill="#848200"/><rect x="6" y="7" width="1" height="1" fill="#000"/><rect x="7" y="7" width="1" height="1" fill="#ffff80"/><rect x="8" y="7" width="1" height="1" fill="#fff"/><rect x="9" y="7" width="1" height="1" fill="#ffff80"/><rect x="10" y="7" width="1" height="1" fill="#fff"/><rect x="11" y="7" width="1" height="1" fill="#ffff80"/><rect x="12" y="7" width="1" height="1" fill="#fff"/><rect x="13" y="7" width="2" height="1" fill="#ffff80"/><rect x="15" y="7" width="1" height="1" fill="#000"/><rect x="0" y="8" width="1" height="1" fill="#000"/><rect x="1" y="8" width="1" height="1" fill="#ffff00"/><rect x="2" y="8" width="1" height="1" fill="#848200"/><rect x="3" y="8" width="1" height="1" fill="#ffff00"/><rect x="4" y="8" width="1" height="1" fill="#848200"/><rect x="5" y="8" width="1" height="1" fill="#ffff00"/><rect x="6" y="8" width="1" height="1" fill="#000"/><rect x="7" y="8" width="1" height="1" fill="#fff"/><rect x="8" y="8" width="1" height="1" fill="#ffff80"/><rect x="9" y="8" width="1" height="1" fill="#fff"/><rect x="10" y="8" width="1" height="1" fill="#ffff80"/><rect x="11" y="8" width="1" height="1" fill="#fff"/><rect x="12" y="8" width="1" height="1" fill="#ffff80"/><rect x="13" y="8" width="2" height="1" fill="#fff"/><rect x="15" y="8" width="1" height="1" fill="#000"/><rect x="0" y="9" width="1" height="1" fill="#000"/><rect x="1" y="9" width="1" height="1" fill="#848200"/><rect x="2" y="9" width="1" height="1" fill="#ffff00"/><rect x="3" y="9" width="1" height="1" fill="#848200"/><rect x="4" y="9" width="1" height="1" fill="#ffff00"/><rect x="5" y="9" width="1" height="1" fill="#848200"/><rect x="6" y="9" width="1" height="1" fill="#000"/><rect x="7" y="9" width="1" height="1" fill="#ffff80"/><rect x="8" y="9" width="1" height="1" fill="#fff"/><rect x="9" y="9" width="1" height="1" fill="#ffff80"/><rect x="10" y="9" width="1" height="1" fill="#fff"/><rect x="11" y="9" width="1" height="1" fill="#ffff80"/><rect x="12" y="9" width="1" height="1" fill="#fff"/><rect x="13" y="9" width="2" height="1" fill="#ffff80"/><rect x="15" y="9" width="1" height="1" fill="#000"/><rect x="0" y="10" width="1" height="1" fill="#000"/><rect x="1" y="10" width="1" height="1" fill="#ffff00"/><rect x="2" y="10" width="1" height="1" fill="#848200"/><rect x="3" y="10" width="1" height="1" fill="#ffff00"/><rect x="4" y="10" width="1" height="1" fill="#848200"/><rect x="5" y="10" width="7" height="1" fill="#000"/><rect x="12" y="10" width="1" height="1" fill="#ffff80"/><rect x="13" y="10" width="1" height="1" fill="#fff"/><rect x="14" y="10" width="1" height="1" fill="#ffff80"/><rect x="15" y="10" width="1" height="1" fill="#000"/><rect x="1" y="11" width="1" height="1" fill="#000"/><rect x="2" y="11" width="1" height="1" fill="#ffff00"/><rect x="3" y="11" width="1" height="1" fill="#848200"/><rect x="4" y="11" width="2" height="1" fill="#000"/><rect x="11" y="11" width="1" height="1" fill="#000"/><rect x="12" y="11" width="1" height="1" fill="#fff"/><rect x="13" y="11" width="1" height="1" fill="#ffff80"/><rect x="14" y="11" width="1" height="1" fill="#000"/><rect x="2" y="12" width="3" height="1" fill="#000"/><rect x="11" y="12" width="1" height="1" fill="#000"/><rect x="12" y="12" width="1" height="1" fill="#ffff80"/><rect x="13" y="12" width="1" height="1" fill="#000"/><rect x="2" y="13" width="1" height="1" fill="#000"/><rect x="3" y="13" width="1" height="1" fill="#fff"/><rect x="4" y="13" width="1" height="1" fill="#000"/><rect x="12" y="13" width="2" height="1" fill="#000"/><rect x="2" y="14" width="3" height="1" fill="#000"/><rect x="13" y="14" width="1" height="1" fill="#000"/></svg>
<div class="t" style="left:634px;top:81px;font-family:'Liberation Sans',sans-serif;font-weight:bold;font-size:11px;line-height:12px;color:#000084">?</div>
<div class="t" style="left:206px;top:108px;font-family:'Liberation Serif',serif;font-weight:bold;font-size:13px;line-height:16px;text-shadow:0.5px 0 0 #000">B</div>
<div class="t" style="left:229px;top:108px;font-family:'Liberation Serif',serif;font-weight:bold;font-style:italic;font-size:13px;line-height:16px;padding-left:2px;text-shadow:0.5px 0 0 #000">I</div>
<div class="t" style="left:252px;top:107px;font-family:'Liberation Serif',serif;font-weight:bold;font-size:13px;line-height:16px">U</div>
<div style="left:252px;top:120px;width:9px;height:1px;background:#000"></div>
<div style="left:278px;top:109px;width:14px;height:1px;background:#000"></div>
<div style="left:278px;top:111px;width:10px;height:1px;background:#000"></div>
<div style="left:278px;top:113px;width:14px;height:1px;background:#000"></div>
<div style="left:278px;top:115px;width:10px;height:1px;background:#000"></div>
<div style="left:278px;top:117px;width:14px;height:1px;background:#000"></div>
<div style="left:278px;top:119px;width:10px;height:1px;background:#000"></div>
<div style="left:301px;top:109px;width:14px;height:1px;background:#000"></div>
<div style="left:303px;top:111px;width:10px;height:1px;background:#000"></div>
<div style="left:301px;top:113px;width:14px;height:1px;background:#000"></div>
<div style="left:303px;top:115px;width:10px;height:1px;background:#000"></div>
<div style="left:301px;top:117px;width:14px;height:1px;background:#000"></div>
<div style="left:303px;top:119px;width:10px;height:1px;background:#000"></div>
<div style="left:324px;top:109px;width:14px;height:1px;background:#000"></div>
<div style="left:328px;top:111px;width:10px;height:1px;background:#000"></div>
<div style="left:324px;top:113px;width:14px;height:1px;background:#000"></div>
<div style="left:328px;top:115px;width:10px;height:1px;background:#000"></div>
<div style="left:324px;top:117px;width:14px;height:1px;background:#000"></div>
<div style="left:328px;top:119px;width:10px;height:1px;background:#000"></div>
<svg style="left:347px;top:108px" width="16" height="14" viewBox="0 0 16 14" shape-rendering="crispEdges"><rect x="0" y="0" width="16" height="1" fill="#000"/><rect x="0" y="1" width="1" height="1" fill="#000"/><rect x="1" y="1" width="6" height="1" fill="#fff"/><rect x="7" y="1" width="2" height="1" fill="#000"/><rect x="9" y="1" width="6" height="1" fill="#fff"/><rect x="15" y="1" width="1" height="1" fill="#000"/><rect x="0" y="2" width="1" height="1" fill="#000"/><rect x="1" y="2" width="6" height="1" fill="#fff"/><rect x="7" y="2" width="2" height="1" fill="#000"/><rect x="9" y="2" width="6" height="1" fill="#fff"/><rect x="15" y="2" width="1" height="1" fill="#000"/><rect x="0" y="3" width="16" height="1" fill="#000"/><rect x="0" y="4" width="1" height="1" fill="#000"/><rect x="1" y="4" width="1" height="1" fill="#fff"/><rect x="2" y="4" width="1" height="1" fill="#000"/><rect x="3" y="4" width="10" height="1" fill="#fff"/><rect x="13" y="4" width="1" height="1" fill="#000"/><rect x="14" y="4" width="1" height="1" fill="#fff"/><rect x="15" y="4" width="1" height="1" fill="#000"/><rect x="0" y="5" width="3" height="1" fill="#000"/><rect x="3" y="5" width="3" height="1" fill="#fff"/><rect x="6" y="5" width="3" height="1" fill="#000"/><rect x="9" y="5" width="4" height="1" fill="#fff"/><rect x="13" y="5" width="3" height="1" fill="#000"/><rect x="0" y="6" width="5" height="1" fill="#000"/><rect x="5" y="6" width="1" height="1" fill="#fff"/><rect x="9" y="6" width="1" height="1" fill="#000"/><rect x="10" y="6" width="1" height="1" fill="#fff"/><rect x="11" y="6" width="5" height="1" fill="#000"/><rect x="0" y="7" width="3" height="1" fill="#000"/><rect x="3" y="7" width="3" height="1" fill="#fff"/><rect x="6" y="7" width="4" height="1" fill="#000"/><rect x="10" y="7" width="3" height="1" fill="#fff"/><rect x="13" y="7" width="3" height="1" fill="#000"/><rect x="0" y="8" width="1" height="1" fill="#000"/><rect x="1" y="8" width="1" height="1" fill="#fff"/><rect x="2" y="8" width="1" height="1" fill="#000"/><rect x="3" y="8" width="2" height="1" fill="#fff"/><rect x="5" y="8" width="1" height="1" fill="#000"/><rect x="6" y="8" width="3" height="1" fill="#fff"/><rect x="9" y="8" width="1" height="1" fill="#000"/><rect x="10" y="8" width="3" height="1" fill="#fff"/><rect x="13" y="8" width="1" height="1" fill="#000"/><rect x="14" y="8" width="1" height="1" fill="#fff"/><rect x="15" y="8" width="1" height="1" fill="#000"/><rect x="0" y="9" width="1" height="1" fill="#000"/><rect x="1" y="9" width="5" height="1" fill="#fff"/><rect x="6" y="9" width="4" height="1" fill="#000"/><rect x="10" y="9" width="5" height="1" fill="#fff"/><rect x="15" y="9" width="1" height="1" fill="#000"/><rect x="0" y="10" width="16" height="1" fill="#000"/><rect x="0" y="11" width="1" height="1" fill="#000"/><rect x="1" y="11" width="6" height="1" fill="#fff"/><rect x="7" y="11" width="2" height="1" fill="#000"/><rect x="9" y="11" width="6" height="1" fill="#fff"/><rect x="15" y="11" width="1" height="1" fill="#000"/><rect x="0" y="12" width="1" height="1" fill="#000"/><rect x="1" y="12" width="6" height="1" fill="#fff"/><rect x="7" y="12" width="2" height="1" fill="#000"/><rect x="9" y="12" width="6" height="1" fill="#fff"/><rect x="15" y="12" width="1" height="1" fill="#000"/><rect x="0" y="13" width="16" height="1" fill="#000"/></svg>
<div class="t" style="left:346px;top:108px;font-family:'Liberation Sans',sans-serif;font-size:9px;line-height:10px;width:18px;text-align:center">a</div>
<div class="t" style="left:378px;top:106px;font-family:'Liberation Sans',sans-serif;font-weight:bold;font-size:14px;line-height:16px;transform:scaleX(1.3);transform-origin:0 0">$</div>
<div class="t" style="left:401px;top:106px;font-family:'Liberation Sans',sans-serif;font-weight:bold;font-size:14px;line-height:16px;transform:scaleX(1.05);transform-origin:0 0">%</div>
<div class="t" style="left:426px;top:105px;font-family:'Liberation Sans',sans-serif;font-weight:bold;font-size:18px;line-height:16px">,</div>
<div class="t" style="left:453px;top:107px;font-family:'Liberation Sans',sans-serif;font-size:8.5px;line-height:8px;font-weight:bold;">.0</div>
<div class="t" style="left:447px;top:115px;font-family:'Liberation Sans',sans-serif;font-size:8.5px;line-height:8px;font-weight:bold;">.00</div>
<svg style="left:446px;top:108px" width="6" height="5" viewBox="0 0 6 5" shape-rendering="crispEdges"><path d="M0 2h6v1H0zM1 1h2v3H1zM2 0h1v5H2z" fill="#000084"/></svg>
<div class="t" style="left:470px;top:107px;font-family:'Liberation Sans',sans-serif;font-size:8.5px;line-height:8px;font-weight:bold;">.00</div>
<div class="t" style="left:476px;top:115px;font-family:'Liberation Sans',sans-serif;font-size:8.5px;line-height:8px;font-weight:bold;">.0</div>
<svg style="left:468px;top:115px" width="6" height="5" viewBox="0 0 6 5" shape-rendering="crispEdges"><path d="M0 2h6v1H0zM3 1h2v3H3zM3 0h1v5H3z" fill="#000084"/></svg>
<svg style="left:497px;top:107px" width="16" height="15" viewBox="0 0 16 15" shape-rendering="crispEdges"><rect x="7" y="0" width="1" height="1" fill="#000"/><rect x="2" y="2" width="4" height="1" fill="#000"/><rect x="7" y="2" width="9" height="1" fill="#000"/><rect x="2" y="4" width="1" height="1" fill="#000084"/><rect x="7" y="4" width="9" height="1" fill="#000"/><rect x="1" y="5" width="2" height="1" fill="#000084"/><rect x="8" y="5" width="8" height="1" fill="#000"/><rect x="0" y="6" width="6" height="1" fill="#000084"/><rect x="7" y="6" width="1" height="1" fill="#000"/><rect x="1" y="7" width="2" height="1" fill="#000084"/><rect x="8" y="7" width="5" height="1" fill="#000"/><rect x="2" y="8" width="1" height="1" fill="#000084"/><rect x="7" y="8" width="6" height="1" fill="#000"/><rect x="2" y="10" width="4" height="1" fill="#000"/><rect x="7" y="10" width="9" height="1" fill="#000"/><rect x="2" y="12" width="4" height="1" fill="#000"/><rect x="7" y="12" width="3" height="1" fill="#000"/><rect x="7" y="14" width="1" height="1" fill="#000"/></svg>
<svg style="left:520px;top:107px" width="16" height="15" viewBox="0 0 16 15" shape-rendering="crispEdges"><rect x="7" y="0" width="1" height="1" fill="#000"/><rect x="2" y="2" width="4" height="1" fill="#000"/><rect x="7" y="2" width="9" height="1" fill="#000"/><rect x="3" y="4" width="1" height="1" fill="#000084"/><rect x="7" y="4" width="9" height="1" fill="#000"/><rect x="3" y="5" width="2" height="1" fill="#000084"/><rect x="8" y="5" width="8" height="1" fill="#000"/><rect x="0" y="6" width="6" height="1" fill="#000084"/><rect x="7" y="6" width="1" height="1" fill="#000"/><rect x="3" y="7" width="2" height="1" fill="#000084"/><rect x="8" y="7" width="5" height="1" fill="#000"/><rect x="3" y="8" width="1" height="1" fill="#000084"/><rect x="7" y="8" width="6" height="1" fill="#000"/><rect x="2" y="10" width="4" height="1" fill="#000"/><rect x="7" y="10" width="9" height="1" fill="#000"/><rect x="2" y="12" width="4" height="1" fill="#000"/><rect x="7" y="12" width="3" height="1" fill="#000"/><rect x="7" y="14" width="1" height="1" fill="#000"/></svg>
<svg style="left:551px;top:109px" width="13" height="14" viewBox="0 0 13 14" shape-rendering="crispEdges"><rect x="0" y="0" width="1" height="1" fill="#848284"/><rect x="2" y="0" width="1" height="1" fill="#848284"/><rect x="4" y="0" width="1" height="1" fill="#848284"/><rect x="6" y="0" width="1" height="1" fill="#848284"/><rect x="8" y="0" width="1" height="1" fill="#848284"/><rect x="10" y="0" width="1" height="1" fill="#848284"/><rect x="12" y="0" width="1" height="1" fill="#848284"/><rect x="0" y="2" width="1" height="1" fill="#848284"/><rect x="6" y="2" width="1" height="1" fill="#848284"/><rect x="12" y="2" width="1" height="1" fill="#848284"/><rect x="0" y="4" width="1" height="1" fill="#848284"/><rect x="6" y="4" width="1" height="1" fill="#848284"/><rect x="12" y="4" width="1" height="1" fill="#848284"/><rect x="0" y="6" width="1" height="1" fill="#848284"/><rect x="2" y="6" width="1" height="1" fill="#848284"/><rect x="4" y="6" width="1" height="1" fill="#848284"/><rect x="6" y="6" width="1" height="1" fill="#848284"/><rect x="8" y="6" width="1" height="1" fill="#848284"/><rect x="10" y="6" width="1" height="1" fill="#848284"/><rect x="12" y="6" width="1" height="1" fill="#848284"/><rect x="0" y="8" width="1" height="1" fill="#848284"/><rect x="6" y="8" width="1" height="1" fill="#848284"/><rect x="12" y="8" width="1" height="1" fill="#848284"/><rect x="0" y="10" width="1" height="1" fill="#848284"/><rect x="6" y="10" width="1" height="1" fill="#848284"/><rect x="12" y="10" width="1" height="1" fill="#848284"/><rect x="0" y="12" width="13" height="1" fill="#000"/><rect x="0" y="13" width="13" height="1" fill="#000"/></svg>
<svg style="left:571px;top:114px" width="5" height="3" shape-rendering="crispEdges"><rect x="0" y="0" width="5" height="1" fill="#000"/><rect x="1" y="1" width="3" height="1" fill="#000"/><rect x="2" y="2" width="1" height="1" fill="#000"/></svg>
<svg style="left:584px;top:106px" width="14" height="12" viewBox="0 0 14 12" shape-rendering="crispEdges"><rect x="4" y="0" width="3" height="1" fill="#000084"/><rect x="3" y="1" width="1" height="1" fill="#000084"/><rect x="7" y="1" width="1" height="1" fill="#000084"/><rect x="3" y="2" width="1" height="1" fill="#000084"/><rect x="5" y="2" width="1" height="1" fill="#000"/><rect x="7" y="2" width="2" height="1" fill="#000084"/><rect x="3" y="3" width="1" height="1" fill="#000084"/><rect x="4" y="3" width="1" height="1" fill="#000"/><rect x="5" y="3" width="1" height="1" fill="#fff"/><rect x="6" y="3" width="1" height="1" fill="#000"/><rect x="8" y="3" width="3" height="1" fill="#000084"/><rect x="3" y="4" width="1" height="1" fill="#000"/><rect x="4" y="4" width="3" height="1" fill="#fff"/><rect x="7" y="4" width="1" height="1" fill="#000"/><rect x="9" y="4" width="3" height="1" fill="#000084"/><rect x="2" y="5" width="1" height="1" fill="#000"/><rect x="3" y="5" width="5" height="1" fill="#fff"/><rect x="8" y="5" width="1" height="1" fill="#000"/><rect x="10" y="5" width="2" height="1" fill="#000084"/><rect x="1" y="6" width="1" height="1" fill="#000"/><rect x="2" y="6" width="7" height="1" fill="#fff"/><rect x="9" y="6" width="1" height="1" fill="#000"/><rect x="10" y="6" width="2" height="1" fill="#000084"/><rect x="0" y="7" width="1" height="1" fill="#000"/><rect x="1" y="7" width="1" height="1" fill="#c6c3c6"/><rect x="2" y="7" width="7" height="1" fill="#fff"/><rect x="9" y="7" width="1" height="1" fill="#000"/><rect x="10" y="7" width="2" height="1" fill="#000084"/><rect x="1" y="8" width="1" height="1" fill="#000"/><rect x="2" y="8" width="1" height="1" fill="#c6c3c6"/><rect x="3" y="8" width="5" height="1" fill="#fff"/><rect x="8" y="8" width="1" height="1" fill="#000"/><rect x="10" y="8" width="2" height="1" fill="#000084"/><rect x="2" y="9" width="1" height="1" fill="#000"/><rect x="3" y="9" width="1" height="1" fill="#c6c3c6"/><rect x="4" y="9" width="3" height="1" fill="#fff"/><rect x="7" y="9" width="1" height="1" fill="#000"/><rect x="10" y="9" width="1" height="1" fill="#000084"/><rect x="3" y="10" width="1" height="1" fill="#000"/><rect x="4" y="10" width="1" height="1" fill="#c6c3c6"/><rect x="5" y="10" width="1" height="1" fill="#fff"/><rect x="6" y="10" width="1" height="1" fill="#000"/><rect x="4" y="11" width="2" height="1" fill="#000"/></svg>
<div style="left:583px;top:119px;width:16px;height:4px;background:#ff0"></div>
<svg style="left:605px;top:114px" width="5" height="3" shape-rendering="crispEdges"><rect x="0" y="0" width="5" height="1" fill="#000"/><rect x="1" y="1" width="3" height="1" fill="#000"/><rect x="2" y="2" width="1" height="1" fill="#000"/></svg>
<div class="t" style="left:617px;top:104px;font-family:'Liberation Serif',serif;font-weight:bold;font-size:17px;line-height:17px;color:#000084">A</div>
<div style="left:617px;top:119px;width:16px;height:4px;background:#f00"></div>
<svg style="left:639px;top:114px" width="5" height="3" shape-rendering="crispEdges"><rect x="0" y="0" width="5" height="1" fill="#000"/><rect x="1" y="1" width="3" height="1" fill="#000"/><rect x="2" y="2" width="1" height="1" fill="#000"/></svg>
<div style="left:10px;top:128px;width:1px;height:17px;background:#000"></div>
<div style="left:10px;top:145px;width:1px;height:636px;background:#848284"></div>
<div style="left:11px;top:146px;width:1px;height:635px;background:#000"></div>
<div style="left:38px;top:164px;width:979px;height:603px;background-color:#fff;background-image:linear-gradient(90deg,#c6c3c6 1px,transparent 1px),linear-gradient(#c6c3c6 1px,transparent 1px);background-size:64px 17px,64px 17px;background-position:63px 0,0 16px;"></div>
<div style="left:12px;top:147px;width:1005px;height:17px;background:#c6c3c6"></div>
<div style="left:12px;top:147px;width:1005px;height:1px;background:#fff"></div>
<div style="left:12px;top:163px;width:1005px;height:1px;background:#848284"></div>
<div style="left:12px;top:147px;width:1px;height:16px;background:#fff"></div>
<div style="left:37px;top:147px;width:1px;height:17px;background:#848284"></div>
<div style="left:38px;top:147px;width:1px;height:16px;background:#fff"></div>
<div style="left:101px;top:147px;width:1px;height:17px;background:#848284"></div>
<div style="left:38px;top:148px;width:63px;height:15px;font-family:'Liberation Sans',sans-serif;font-size:13px;line-height:15px;font-weight:bold;text-align:center;">A</div>
<div style="left:102px;top:147px;width:1px;height:16px;background:#fff"></div>
<div style="left:165px;top:147px;width:1px;height:17px;background:#848284"></div>
<div style="left:102px;top:148px;width:63px;height:15px;font-family:'Liberation Sans',sans-serif;font-size:13px;line-height:15px;font-weight:bold;text-align:center;">B</div>
<div style="left:166px;top:147px;width:1px;height:16px;background:#fff"></div>
<div style="left:229px;top:147px;width:1px;height:17px;background:#848284"></div>
<div style="left:166px;top:148px;width:63px;height:15px;font-family:'Liberation Sans',sans-serif;font-size:13px;line-height:15px;text-align:center;">C</div>
<div style="left:230px;top:147px;width:1px;height:16px;background:#fff"></div>
<div style="left:293px;top:147px;width:1px;height:17px;background:#848284"></div>
<div style="left:230px;top:148px;width:63px;height:15px;font-family:'Liberation Sans',sans-serif;font-size:13px;line-height:15px;text-align:center;">D</div>
<div style="left:294px;top:147px;width:1px;height:16px;background:#fff"></div>
<div style="left:357px;top:147px;width:1px;height:17px;background:#848284"></div>
<div style="left:294px;top:148px;width:63px;height:15px;font-family:'Liberation Sans',sans-serif;font-size:13px;line-height:15px;text-align:center;">E</div>
<div style="left:358px;top:147px;width:1px;height:16px;background:#fff"></div>
<div style="left:421px;top:147px;width:1px;height:17px;background:#848284"></div>
<div style="left:358px;top:148px;width:63px;height:15px;font-family:'Liberation Sans',sans-serif;font-size:13px;line-height:15px;text-align:center;">F</div>
<div style="left:422px;top:147px;width:1px;height:16px;background:#fff"></div>
<div style="left:485px;top:147px;width:1px;height:17px;background:#848284"></div>
<div style="left:422px;top:148px;width:63px;height:15px;font-family:'Liberation Sans',sans-serif;font-size:13px;line-height:15px;text-align:center;">G</div>
<div style="left:486px;top:147px;width:1px;height:16px;background:#fff"></div>
<div style="left:549px;top:147px;width:1px;height:17px;background:#848284"></div>
<div style="left:486px;top:148px;width:63px;height:15px;font-family:'Liberation Sans',sans-serif;font-size:13px;line-height:15px;text-align:center;">H</div>
<div style="left:550px;top:147px;width:1px;height:16px;background:#fff"></div>
<div style="left:613px;top:147px;width:1px;height:17px;background:#848284"></div>
<div style="left:550px;top:148px;width:63px;height:15px;font-family:'Liberation Sans',sans-serif;font-size:13px;line-height:15px;text-align:center;">I</div>
<div style="left:614px;top:147px;width:1px;height:16px;background:#fff"></div>
<div style="left:677px;top:147px;width:1px;height:17px;background:#848284"></div>
<div style="left:614px;top:148px;width:63px;height:15px;font-family:'Liberation Sans',sans-serif;font-size:13px;line-height:15px;text-align:center;">J</div>
<div style="left:678px;top:147px;width:1px;height:16px;background:#fff"></div>
<div style="left:741px;top:147px;width:1px;height:17px;background:#848284"></div>
<div style="left:678px;top:148px;width:63px;height:15px;font-family:'Liberation Sans',sans-serif;font-size:13px;line-height:15px;text-align:center;">K</div>
<div style="left:742px;top:147px;width:1px;height:16px;background:#fff"></div>
<div style="left:805px;top:147px;width:1px;height:17px;background:#848284"></div>
<div style="left:742px;top:148px;width:63px;height:15px;font-family:'Liberation Sans',sans-serif;font-size:13px;line-height:15px;text-align:center;">L</div>
<div style="left:806px;top:147px;width:1px;height:16px;background:#fff"></div>
<div style="left:869px;top:147px;width:1px;height:17px;background:#848284"></div>
<div style="left:806px;top:148px;width:63px;height:15px;font-family:'Liberation Sans',sans-serif;font-size:13px;line-height:15px;text-align:center;">M</div>
<div style="left:870px;top:147px;width:1px;height:16px;background:#fff"></div>
<div style="left:933px;top:147px;width:1px;height:17px;background:#848284"></div>
<div style="left:870px;top:148px;width:63px;height:15px;font-family:'Liberation Sans',sans-serif;font-size:13px;line-height:15px;text-align:center;">N</div>
<div style="left:934px;top:147px;width:1px;height:16px;background:#fff"></div>
<div style="left:997px;top:147px;width:1px;height:17px;background:#848284"></div>
<div style="left:934px;top:148px;width:63px;height:15px;font-family:'Liberation Sans',sans-serif;font-size:13px;line-height:15px;text-align:center;">O</div>
<div style="left:998px;top:147px;width:1px;height:16px;background:#fff"></div>
<div style="left:165px;top:147px;width:1px;height:17px;background:#000"></div>
<div style="left:12px;top:164px;width:26px;height:603px;background:#c6c3c6"></div>
<div style="left:37px;top:164px;width:1px;height:603px;background:#848284"></div>
<div style="left:12px;top:164px;width:1px;height:603px;background:#fff"></div>
<div style="left:12px;top:164px;width:25px;height:1px;background:#fff"></div>
<div style="left:12px;top:180px;width:26px;height:1px;background:#848284"></div>
<div style="left:11px;top:164px;width:25px;height:16px;font-family:'Liberation Sans',sans-serif;font-size:13px;line-height:15px;font-weight:bold;text-align:center;overflow:hidden;">1</div>
<div style="left:12px;top:181px;width:25px;height:1px;background:#fff"></div>
<div style="left:12px;top:197px;width:26px;height:1px;background:#848284"></div>
<div style="left:11px;top:181px;width:25px;height:16px;font-family:'Liberation Sans',sans-serif;font-size:13px;line-height:15px;font-weight:bold;text-align:center;overflow:hidden;">2</div>
<div style="left:12px;top:198px;width:25px;height:1px;background:#fff"></div>
<div style="left:12px;top:214px;width:26px;height:1px;background:#848284"></div>
<div style="left:11px;top:198px;width:25px;height:16px;font-family:'Liberation Sans',sans-serif;font-size:13px;line-height:15px;font-weight:bold;text-align:center;overflow:hidden;">3</div>
<div style="left:12px;top:215px;width:25px;height:1px;background:#fff"></div>
<div style="left:12px;top:231px;width:26px;height:1px;background:#848284"></div>
<div style="left:11px;top:215px;width:25px;height:16px;font-family:'Liberation Sans',sans-serif;font-size:13px;line-height:15px;font-weight:bold;text-align:center;overflow:hidden;">4</div>
<div style="left:12px;top:232px;width:25px;height:1px;background:#fff"></div>
<div style="left:12px;top:248px;width:26px;height:1px;background:#848284"></div>
<div style="left:11px;top:232px;width:25px;height:16px;font-family:'Liberation Sans',sans-serif;font-size:13px;line-height:15px;font-weight:bold;text-align:center;overflow:hidden;">5</div>
<div style="left:12px;top:249px;width:25px;height:1px;background:#fff"></div>
<div style="left:12px;top:265px;width:26px;height:1px;background:#848284"></div>
<div style="left:11px;top:249px;width:25px;height:16px;font-family:'Liberation Sans',sans-serif;font-size:13px;line-height:15px;text-align:center;overflow:hidden;">6</div>
<div style="left:12px;top:266px;width:25px;height:1px;background:#fff"></div>
<div style="left:12px;top:282px;width:26px;height:1px;background:#848284"></div>
<div style="left:11px;top:266px;width:25px;height:16px;font-family:'Liberation Sans',sans-serif;font-size:13px;line-height:15px;text-align:center;overflow:hidden;">7</div>
<div style="left:12px;top:283px;width:25px;height:1px;background:#fff"></div>
<div style="left:12px;top:299px;width:26px;height:1px;background:#848284"></div>
<div style="left:11px;top:283px;width:25px;height:16px;font-family:'Liberation Sans',sans-serif;font-size:13px;line-height:15px;text-align:center;overflow:hidden;">8</div>
<div style="left:12px;top:300px;width:25px;height:1px;background:#fff"></div>
<div style="left:12px;top:316px;width:26px;height:1px;background:#848284"></div>
<div style="left:11px;top:300px;width:25px;height:16px;font-family:'Liberation Sans',sans-serif;font-size:13px;line-height:15px;text-align:center;overflow:hidden;">9</div>
<div style="left:12px;top:317px;width:25px;height:1px;background:#fff"></div>
<div style="left:12px;top:333px;width:26px;height:1px;background:#848284"></div>
<div style="left:11px;top:317px;width:25px;height:16px;font-family:'Liberation Sans',sans-serif;font-size:13px;line-height:15px;text-align:center;overflow:hidden;">10</div>
<div style="left:12px;top:334px;width:25px;height:1px;background:#fff"></div>
<div style="left:12px;top:350px;width:26px;height:1px;background:#848284"></div>
<div style="left:11px;top:334px;width:25px;height:16px;font-family:'Liberation Sans',sans-serif;font-size:13px;line-height:15px;text-align:center;overflow:hidden;">11</div>
<div style="left:12px;top:351px;width:25px;height:1px;background:#fff"></div>
<div style="left:12px;top:367px;width:26px;height:1px;background:#848284"></div>
<div style="left:11px;top:351px;width:25px;height:16px;font-family:'Liberation Sans',sans-serif;font-size:13px;line-height:15px;text-align:center;overflow:hidden;">12</div>
<div style="left:12px;top:368px;width:25px;height:1px;background:#fff"></div>
<div style="left:12px;top:384px;width:26px;height:1px;background:#848284"></div>
<div style="left:11px;top:368px;width:25px;height:16px;font-family:'Liberation Sans',sans-serif;font-size:13px;line-height:15px;text-align:center;overflow:hidden;">13</div>
<div style="left:12px;top:385px;width:25px;height:1px;background:#fff"></div>
<div style="left:12px;top:401px;width:26px;height:1px;background:#848284"></div>
<div style="left:11px;top:385px;width:25px;height:16px;font-family:'Liberation Sans',sans-serif;font-size:13px;line-height:15px;text-align:center;overflow:hidden;">14</div>
<div style="left:12px;top:402px;width:25px;height:1px;background:#fff"></div>
<div style="left:12px;top:418px;width:26px;height:1px;background:#848284"></div>
<div style="left:11px;top:402px;width:25px;height:16px;font-family:'Liberation Sans',sans-serif;font-size:13px;line-height:15px;text-align:center;overflow:hidden;">15</div>
<div style="left:12px;top:419px;width:25px;height:1px;background:#fff"></div>
<div style="left:12px;top:435px;width:26px;height:1px;background:#848284"></div>
<div style="left:11px;top:419px;width:25px;height:16px;font-family:'Liberation Sans',sans-serif;font-size:13px;line-height:15px;text-align:center;overflow:hidden;">16</div>
<div style="left:12px;top:436px;width:25px;height:1px;background:#fff"></div>
<div style="left:12px;top:452px;width:26px;height:1px;background:#848284"></div>
<div style="left:11px;top:436px;width:25px;height:16px;font-family:'Liberation Sans',sans-serif;font-size:13px;line-height:15px;text-align:center;overflow:hidden;">17</div>
<div style="left:12px;top:453px;width:25px;height:1px;background:#fff"></div>
<div style="left:12px;top:469px;width:26px;height:1px;background:#848284"></div>
<div style="left:11px;top:453px;width:25px;height:16px;font-family:'Liberation Sans',sans-serif;font-size:13px;line-height:15px;text-align:center;overflow:hidden;">18</div>
<div style="left:12px;top:470px;width:25px;height:1px;background:#fff"></div>
<div style="left:12px;top:486px;width:26px;height:1px;background:#848284"></div>
<div style="left:11px;top:470px;width:25px;height:16px;font-family:'Liberation Sans',sans-serif;font-size:13px;line-height:15px;text-align:center;overflow:hidden;">19</div>
<div style="left:12px;top:487px;width:25px;height:1px;background:#fff"></div>
<div style="left:12px;top:503px;width:26px;height:1px;background:#848284"></div>
<div style="left:11px;top:487px;width:25px;height:16px;font-family:'Liberation Sans',sans-serif;font-size:13px;line-height:15px;text-align:center;overflow:hidden;">20</div>
<div style="left:12px;top:504px;width:25px;height:1px;background:#fff"></div>
<div style="left:12px;top:520px;width:26px;height:1px;background:#848284"></div>
<div style="left:11px;top:504px;width:25px;height:16px;font-family:'Liberation Sans',sans-serif;font-size:13px;line-height:15px;text-align:center;overflow:hidden;">21</div>
<div style="left:12px;top:521px;width:25px;height:1px;background:#fff"></div>
<div style="left:12px;top:537px;width:26px;height:1px;background:#848284"></div>
<div style="left:11px;top:521px;width:25px;height:16px;font-family:'Liberation Sans',sans-serif;font-size:13px;line-height:15px;text-align:center;overflow:hidden;">22</div>
<div style="left:12px;top:538px;width:25px;height:1px;background:#fff"></div>
<div style="left:12px;top:554px;width:26px;height:1px;background:#848284"></div>
<div style="left:11px;top:538px;width:25px;height:16px;font-family:'Liberation Sans',sans-serif;font-size:13px;line-height:15px;text-align:center;overflow:hidden;">23</div>
<div style="left:12px;top:555px;width:25px;height:1px;background:#fff"></div>
<div style="left:12px;top:571px;width:26px;height:1px;background:#848284"></div>
<div style="left:11px;top:555px;width:25px;height:16px;font-family:'Liberation Sans',sans-serif;font-size:13px;line-height:15px;text-align:center;overflow:hidden;">24</div>
<div style="left:12px;top:572px;width:25px;height:1px;background:#fff"></div>
<div style="left:12px;top:588px;width:26px;height:1px;background:#848284"></div>
<div style="left:11px;top:572px;width:25px;height:16px;font-family:'Liberation Sans',sans-serif;font-size:13px;line-height:15px;text-align:center;overflow:hidden;">25</div>
<div style="left:12px;top:589px;width:25px;height:1px;background:#fff"></div>
<div style="left:12px;top:605px;width:26px;height:1px;background:#848284"></div>
<div style="left:11px;top:589px;width:25px;height:16px;font-family:'Liberation Sans',sans-serif;font-size:13px;line-height:15px;text-align:center;overflow:hidden;">26</div>
<div style="left:12px;top:606px;width:25px;height:1px;background:#fff"></div>
<div style="left:12px;top:622px;width:26px;height:1px;background:#848284"></div>
<div style="left:11px;top:606px;width:25px;height:16px;font-family:'Liberation Sans',sans-serif;font-size:13px;line-height:15px;text-align:center;overflow:hidden;">27</div>
<div style="left:12px;top:623px;width:25px;height:1px;background:#fff"></div>
<div style="left:12px;top:639px;width:26px;height:1px;background:#848284"></div>
<div style="left:11px;top:623px;width:25px;height:16px;font-family:'Liberation Sans',sans-serif;font-size:13px;line-height:15px;text-align:center;overflow:hidden;">28</div>
<div style="left:12px;top:640px;width:25px;height:1px;background:#fff"></div>
<div style="left:12px;top:656px;width:26px;height:1px;background:#848284"></div>
<div style="left:11px;top:640px;width:25px;height:16px;font-family:'Liberation Sans',sans-serif;font-size:13px;line-height:15px;text-align:center;overflow:hidden;">29</div>
<div style="left:12px;top:657px;width:25px;height:1px;background:#fff"></div>
<div style="left:12px;top:673px;width:26px;height:1px;background:#848284"></div>
<div style="left:11px;top:657px;width:25px;height:16px;font-family:'Liberation Sans',sans-serif;font-size:13px;line-height:15px;text-align:center;overflow:hidden;">30</div>
<div style="left:12px;top:674px;width:25px;height:1px;background:#fff"></div>
<div style="left:12px;top:690px;width:26px;height:1px;background:#848284"></div>
<div style="left:11px;top:674px;width:25px;height:16px;font-family:'Liberation Sans',sans-serif;font-size:13px;line-height:15px;text-align:center;overflow:hidden;">31</div>
<div style="left:12px;top:691px;width:25px;height:1px;background:#fff"></div>
<div style="left:12px;top:707px;width:26px;height:1px;background:#848284"></div>
<div style="left:11px;top:691px;width:25px;height:16px;font-family:'Liberation Sans',sans-serif;font-size:13px;line-height:15px;text-align:center;overflow:hidden;">32</div>
<div style="left:12px;top:708px;width:25px;height:1px;background:#fff"></div>
<div style="left:12px;top:724px;width:26px;height:1px;background:#848284"></div>
<div style="left:11px;top:708px;width:25px;height:16px;font-family:'Liberation Sans',sans-serif;font-size:13px;line-height:15px;text-align:center;overflow:hidden;">33</div>
<div style="left:12px;top:725px;width:25px;height:1px;background:#fff"></div>
<div style="left:12px;top:741px;width:26px;height:1px;background:#848284"></div>
<div style="left:11px;top:725px;width:25px;height:16px;font-family:'Liberation Sans',sans-serif;font-size:13px;line-height:15px;text-align:center;overflow:hidden;">34</div>
<div style="left:12px;top:742px;width:25px;height:1px;background:#fff"></div>
<div style="left:12px;top:758px;width:26px;height:1px;background:#848284"></div>
<div style="left:11px;top:742px;width:25px;height:16px;font-family:'Liberation Sans',sans-serif;font-size:13px;line-height:15px;text-align:center;overflow:hidden;">35</div>
<div style="left:12px;top:759px;width:25px;height:1px;background:#fff"></div>
<div style="left:11px;top:759px;width:25px;height:8px;font-family:'Liberation Sans',sans-serif;font-size:13px;line-height:15px;text-align:center;overflow:hidden;">36</div>
<div style="left:12px;top:248px;width:26px;height:1px;background:#000"></div>
<div style="left:37px;top:163px;width:130px;height:87px;background:#fff"></div>
<div style="left:37px;top:163px;width:2px;height:87px;background:#000"></div>
<div style="left:37px;top:163px;width:130px;height:2px;background:#000"></div>
<div style="left:164px;top:163px;width:3px;height:82px;background:#000"></div>
<div style="left:165px;top:165px;width:1px;height:80px;background:#848284"></div>
<div style="left:37px;top:247px;width:125px;height:3px;background:#000"></div>
<div style="left:39px;top:248px;width:123px;height:1px;background:#848284"></div>
<div style="left:40px;top:166px;width:123px;height:80px;background:#000"></div>
<div style="left:40px;top:180px;width:123px;height:1px;background:#848284"></div>
<div style="left:40px;top:197px;width:123px;height:1px;background:#848284"></div>
<div style="left:40px;top:214px;width:123px;height:1px;background:#848284"></div>
<div style="left:40px;top:231px;width:123px;height:1px;background:#848284"></div>
<div style="left:101px;top:166px;width:1px;height:80px;background:#848284"></div>
<div style="left:39px;top:165px;width:61px;height:14px;background:#fff"></div>
<div style="left:40px;top:165px;width:59px;height:15px;font-family:'Liberation Sans',sans-serif;font-size:13px;line-height:15px;text-align:right;color:#000;">0.00000</div>
<div style="left:104px;top:165px;width:59px;height:15px;font-family:'Liberation Sans',sans-serif;font-size:13px;line-height:15px;text-align:right;color:#fff;">0.0000</div>
<div style="left:40px;top:182px;width:59px;height:15px;font-family:'Liberation Sans',sans-serif;font-size:13px;line-height:15px;text-align:right;color:#fff;">0.00300</div>
<div style="left:104px;top:182px;width:59px;height:15px;font-family:'Liberation Sans',sans-serif;font-size:13px;line-height:15px;text-align:right;color:#fff;">0.7500</div>
<div style="left:40px;top:199px;width:59px;height:15px;font-family:'Liberation Sans',sans-serif;font-size:13px;line-height:15px;text-align:right;color:#fff;">0.00333</div>
<div style="left:104px;top:199px;width:59px;height:15px;font-family:'Liberation Sans',sans-serif;font-size:13px;line-height:15px;text-align:right;color:#fff;">0.8325</div>
<div style="left:40px;top:216px;width:59px;height:15px;font-family:'Liberation Sans',sans-serif;font-size:13px;line-height:15px;text-align:right;color:#fff;">0.00367</div>
<div style="left:104px;top:216px;width:59px;height:15px;font-family:'Liberation Sans',sans-serif;font-size:13px;line-height:15px;text-align:right;color:#fff;">0.9175</div>
<div style="left:40px;top:233px;width:59px;height:15px;font-family:'Liberation Sans',sans-serif;font-size:13px;line-height:15px;text-align:right;color:#fff;">0.00400</div>
<div style="left:104px;top:233px;width:59px;height:15px;font-family:'Liberation Sans',sans-serif;font-size:13px;line-height:15px;text-align:right;color:#fff;">1.0000</div>
<div style="left:162px;top:245px;width:7px;height:7px;background:#fff"></div>
<div style="left:163px;top:246px;width:5px;height:5px;background:#000"></div>
<div style="left:165px;top:246px;width:1px;height:5px;background:#848284"></div>
<div style="left:163px;top:248px;width:5px;height:1px;background:#848284"></div>
<div style="left:1032px;top:147px;width:4px;height:635px;background:#fff"></div>
<div style="left:1017px;top:147px;width:15px;height:620px;background:#c6c3c6"></div>
<div class="btn1" style="left:1017px;top:147px;width:15px;height:5px;"></div>
<div style="left:1017px;top:152px;width:15px;height:1px;background:#000"></div>
<div class="btn1" style="left:1017px;top:153px;width:15px;height:15px;"></div>
<div style="left:1017px;top:168px;width:15px;height:1px;background:#000"></div>
<div class="btn1" style="left:1017px;top:169px;width:15px;height:564px;"></div>
<div class="dith2" style="left:1017px;top:733px;width:15px;height:19px;"></div>
<div class="btn1" style="left:1017px;top:752px;width:15px;height:15px;"></div>
<svg style="left:1021px;top:159px" width="7" height="4" shape-rendering="crispEdges"><path d="M3.500 0L7 4H0z" fill="#000"/></svg>
<svg style="left:1021px;top:757px" width="7" height="4" shape-rendering="crispEdges"><path d="M0 0h7L3.500 4z" fill="#000"/></svg>
<div style="left:12px;top:767px;width:1020px;height:14px;background:#c6c3c6"></div>
<div style="left:12px;top:766px;width:1005px;height:1px;background:#848284"></div>
<div class="btn1" style="left:12px;top:767px;width:15px;height:14px;"></div>
<div class="btn1" style="left:27px;top:767px;width:15px;height:14px;"></div>
<div class="btn1" style="left:42px;top:767px;width:15px;height:14px;"></div>
<div class="btn1" style="left:57px;top:767px;width:15px;height:14px;"></div>
<div style="left:14px;top:770px;width:1px;height:9px;background:#000"></div>
<svg style="left:16px;top:770px" width="5" height="9" shape-rendering="crispEdges"><path d="M5 0v9L0 4.500z" fill="#000"/></svg>
<svg style="left:31px;top:770px" width="5" height="9" shape-rendering="crispEdges"><path d="M5 0v9L0 4.500z" fill="#000"/></svg>
<svg style="left:46px;top:770px" width="5" height="9" shape-rendering="crispEdges"><path d="M0 0v9L5 4.500z" fill="#000"/></svg>
<svg style="left:60px;top:770px" width="5" height="9" shape-rendering="crispEdges"><path d="M0 0v9L5 4.500z" fill="#000"/></svg>
<div style="left:66px;top:770px;width:2px;height:9px;background:#000"></div>
<svg style="left:0;top:767px" width="700" height="14" viewBox="0 767 700 14"><path d="M72 767H617V781H72z" fill="#c6c3c6"/><path d="M337.7 767L344 780.500H390L396.3 767" fill="#c6c3c6" stroke="#000" stroke-width="1"/><path d="M268.7 767L275 780.500H340L346.3 767" fill="#c6c3c6" stroke="#000" stroke-width="1"/><path d="M219.7 767L226 780.500H271L277.3 767" fill="#c6c3c6" stroke="#000" stroke-width="1"/><path d="M170.7 767L177 780.500H222L228.3 767" fill="#c6c3c6" stroke="#000" stroke-width="1"/><path d="M121.7 767L128 780.500H173L179.3 767" fill="#c6c3c6" stroke="#000" stroke-width="1"/><path d="M72.7 767L79 780.500H124L130.3 767" fill="#c6c3c6" stroke="#000" stroke-width="1"/><path d="M390.500 766L397 780.500H442L448.500 766z" fill="#fff" stroke="#000" stroke-width="1"/><path d="M391.500 766.500H447.500" stroke="#fff" stroke-width="1.500"/></svg>
<div style="left:78px;top:768px;width:49px;height:13px;font-family:'DejaVu Sans Condensed','Liberation Sans',sans-serif;font-size:11px;text-align:center;line-height:13px;">Sheet1</div>
<div style="left:127px;top:768px;width:49px;height:13px;font-family:'DejaVu Sans Condensed','Liberation Sans',sans-serif;font-size:11px;text-align:center;line-height:13px;">Chart1</div>
<div style="left:176px;top:768px;width:49px;height:13px;font-family:'DejaVu Sans Condensed','Liberation Sans',sans-serif;font-size:11px;text-align:center;line-height:13px;">Chart3</div>
<div style="left:225px;top:768px;width:49px;height:13px;font-family:'DejaVu Sans Condensed','Liberation Sans',sans-serif;font-size:11px;text-align:center;line-height:13px;">Chart4</div>
<div style="left:274px;top:768px;width:69px;height:13px;font-family:'DejaVu Sans Condensed','Liberation Sans',sans-serif;font-size:11px;text-align:center;line-height:13px;">Chart4 (2)</div>
<div style="left:343px;top:768px;width:50px;height:13px;font-family:'DejaVu Sans Condensed','Liberation Sans',sans-serif;font-size:11px;text-align:center;line-height:13px;">Sheet2</div>
<div style="left:394px;top:768px;width:50px;height:13px;font-family:'DejaVu Sans Condensed','Liberation Sans',sans-serif;font-size:11px;text-align:center;line-height:13px;font-weight:bold;">Sheet3</div>
<div style="left:616px;top:767px;width:1px;height:14px;background:#fff"></div>
<div style="left:617px;top:767px;width:3px;height:14px;background:#c6c3c6"></div>
<div style="left:616px;top:780px;width:4px;height:1px;background:#848284"></div>
<div style="left:620px;top:766px;width:1px;height:15px;background:#000"></div>
<div style="left:621px;top:767px;width:391px;height:14px;background:#c6c3c6"></div>
<div class="btn1" style="left:621px;top:767px;width:15px;height:14px;"></div>
<svg style="left:626px;top:770px" width="4" height="7" shape-rendering="crispEdges"><path d="M4 0v7L0 3.500z" fill="#000"/></svg>
<div style="left:636px;top:766px;width:1px;height:15px;background:#000"></div>
<div class="btn1" style="left:637px;top:767px;width:334px;height:14px;"></div>
<div class="dith2" style="left:971px;top:767px;width:26px;height:14px;"></div>
<div class="btn1" style="left:997px;top:767px;width:14px;height:14px;"></div>
<svg style="left:1003px;top:770px" width="4" height="7" shape-rendering="crispEdges"><path d="M0 0v7L4 3.500z" fill="#000"/></svg>
<div style="left:1011px;top:767px;width:1px;height:14px;background:#000"></div>
<div class="btn1" style="left:1012px;top:767px;width:5px;height:14px;"></div>
<div style="left:1017px;top:766px;width:16px;height:15px;background:#c6c3c6"></div>
<div style="left:1017px;top:766px;width:15px;height:1px;background:#000"></div>
<div style="left:1017px;top:766px;width:1px;height:15px;background:#000"></div>
<div style="left:175px;top:286px;width:414px;height:406px;background:#c6c3c6;box-shadow:inset -1px -1px 0 #000,inset 1px 1px 0 #c6c3c6,inset -2px -2px 0 #848284,inset 2px 2px 0 #fff;"></div>
<div style="left:178px;top:289px;width:408px;height:18px;background:#000084"></div>
<div class="t" style="left:181px;top:291px;font-family:'DejaVu Sans Condensed','Liberation Sans',sans-serif;font-size:11px;line-height:13px;font-weight:bold;color:#fff;line-height:14px;letter-spacing:0.17px">Chart Wizard - Step 1 of 4 - Chart Type</div>
<div class="btn" style="left:550px;top:291px;width:16px;height:14px;"></div>
<div class="btn" style="left:568px;top:291px;width:16px;height:14px;"></div>
<div class="t" style="left:550px;top:291px;font-family:'DejaVu Sans Condensed','Liberation Sans',sans-serif;font-size:11px;line-height:13px;font-weight:bold;width:15px;text-align:center;line-height:13px;font-size:11px">?</div>
<svg style="left:568px;top:291px" width="16" height="14" viewBox="0 0 16 14"><path d="M4.500 3.500l6.500 6.500M11 3.500l-6.500 6.500" stroke="#000" stroke-width="1.600" fill="none"/></svg>
<div style="left:184px;top:336px;width:396px;height:317px;background:#c6c3c6;box-shadow:inset -1px -1px 0 #000,inset 1px 1px 0 #fff,inset -2px -2px 0 #848284;"></div>
<div style="left:280px;top:318px;width:83px;height:19px;background:#c6c3c6;border-top:1px solid #fff;border-right:1px solid #000;border-radius:2px 2px 0 0;box-shadow:inset -1px 0 0 #848284;"></div>
<div style="left:280px;top:336px;width:83px;height:1px;background:#fff"></div>
<div class="t" style="left:287px;top:322px;font-family:'DejaVu Sans Condensed','Liberation Sans',sans-serif;font-size:11px;line-height:13px;">Custom Types</div>
<div style="left:184px;top:316px;width:96px;height:22px;background:#c6c3c6;border-top:1px solid #fff;border-left:1px solid #fff;border-right:1px solid #000;border-radius:2px 2px 0 0;box-shadow:inset -1px 0 0 #848284;"></div>
<div style="left:185px;top:336px;width:93px;height:2px;background:#c6c3c6"></div>
<div class="t" style="left:193px;top:321px;font-family:'DejaVu Sans Condensed','Liberation Sans',sans-serif;font-size:11px;line-height:13px;">Standard Types</div>
<div class="t" style="left:190px;top:347px;font-family:'DejaVu Sans Condensed','Liberation Sans',sans-serif;font-size:11px;line-height:13px;"><u>C</u>hart type:</div>
<div class="t" style="left:361px;top:347px;font-family:'DejaVu Sans Condensed','Liberation Sans',sans-serif;font-size:11px;line-height:13px;">Chart sub-<u>t</u>ype:</div>
<div class="sunk" style="left:190px;top:362px;width:159px;height:191px;background:#fff;"></div>
<div class="t" style="left:214px;top:365px;font-family:'DejaVu Sans Condensed','Liberation Sans',sans-serif;font-size:11px;line-height:13px;">Column</div>
<div class="t" style="left:214px;top:382px;font-family:'DejaVu Sans Condensed','Liberation Sans',sans-serif;font-size:11px;line-height:13px;">Bar</div>
<div class="t" style="left:214px;top:399px;font-family:'DejaVu Sans Condensed','Liberation Sans',sans-serif;font-size:11px;line-height:13px;">Line</div>
<div class="t" style="left:214px;top:416px;font-family:'DejaVu Sans Condensed','Liberation Sans',sans-serif;font-size:11px;line-height:13px;">Pie</div>
<div style="left:212px;top:432px;width:119px;height:17px;background:#000084;outline:1px dotted #ff0;outline-offset:-1px;"></div>
<div class="t" style="left:214px;top:433px;font-family:'DejaVu Sans Condensed','Liberation Sans',sans-serif;font-size:11px;line-height:13px;color:#fff">XY (Scatter)</div>
<div class="t" style="left:214px;top:450px;font-family:'DejaVu Sans Condensed','Liberation Sans',sans-serif;font-size:11px;line-height:13px;">Area</div>
<div class="t" style="left:214px;top:467px;font-family:'DejaVu Sans Condensed','Liberation Sans',sans-serif;font-size:11px;line-height:13px;">Doughnut</div>
<div class="t" style="left:214px;top:484px;font-family:'DejaVu Sans Condensed','Liberation Sans',sans-serif;font-size:11px;line-height:13px;">Radar</div>
<div class="t" style="left:214px;top:501px;font-family:'DejaVu Sans Condensed','Liberation Sans',sans-serif;font-size:11px;line-height:13px;">Surface</div>
<div class="t" style="left:214px;top:518px;font-family:'DejaVu Sans Condensed','Liberation Sans',sans-serif;font-size:11px;line-height:13px;">Bubble</div>
<div class="t" style="left:214px;top:535px;font-family:'DejaVu Sans Condensed','Liberation Sans',sans-serif;font-size:11px;line-height:13px;">Stock</div>
<svg style="left:193px;top:365px" width="16" height="15" viewBox="0 0 16 15" shape-rendering="crispEdges"><rect x="0" y="1" width="1" height="1" fill="#000"/><rect x="11" y="1" width="2" height="1" fill="#840000"/><rect x="0" y="2" width="1" height="1" fill="#000"/><rect x="11" y="2" width="2" height="1" fill="#840000"/><rect x="0" y="3" width="1" height="1" fill="#000"/><rect x="11" y="3" width="2" height="1" fill="#840000"/><rect x="0" y="4" width="1" height="1" fill="#000"/><rect x="11" y="4" width="2" height="1" fill="#840000"/><rect x="0" y="5" width="1" height="1" fill="#000"/><rect x="3" y="5" width="2" height="1" fill="#0000ff"/><rect x="11" y="5" width="2" height="1" fill="#840000"/><rect x="0" y="6" width="1" height="1" fill="#000"/><rect x="3" y="6" width="2" height="1" fill="#0000ff"/><rect x="9" y="6" width="2" height="1" fill="#0000ff"/><rect x="11" y="6" width="2" height="1" fill="#840000"/><rect x="0" y="7" width="1" height="1" fill="#000"/><rect x="3" y="7" width="2" height="1" fill="#0000ff"/><rect x="9" y="7" width="2" height="1" fill="#0000ff"/><rect x="11" y="7" width="2" height="1" fill="#840000"/><rect x="0" y="8" width="1" height="1" fill="#000"/><rect x="3" y="8" width="2" height="1" fill="#0000ff"/><rect x="5" y="8" width="2" height="1" fill="#840000"/><rect x="9" y="8" width="2" height="1" fill="#0000ff"/><rect x="11" y="8" width="2" height="1" fill="#840000"/><rect x="0" y="9" width="1" height="1" fill="#000"/><rect x="3" y="9" width="2" height="1" fill="#0000ff"/><rect x="5" y="9" width="2" height="1" fill="#840000"/><rect x="9" y="9" width="2" height="1" fill="#0000ff"/><rect x="11" y="9" width="2" height="1" fill="#840000"/><rect x="0" y="10" width="1" height="1" fill="#000"/><rect x="3" y="10" width="2" height="1" fill="#0000ff"/><rect x="5" y="10" width="2" height="1" fill="#840000"/><rect x="9" y="10" width="2" height="1" fill="#0000ff"/><rect x="11" y="10" width="2" height="1" fill="#840000"/><rect x="0" y="11" width="1" height="1" fill="#000"/><rect x="3" y="11" width="2" height="1" fill="#0000ff"/><rect x="5" y="11" width="2" height="1" fill="#840000"/><rect x="9" y="11" width="2" height="1" fill="#0000ff"/><rect x="11" y="11" width="2" height="1" fill="#840000"/><rect x="0" y="12" width="1" height="1" fill="#000"/><rect x="3" y="12" width="2" height="1" fill="#0000ff"/><rect x="5" y="12" width="2" height="1" fill="#840000"/><rect x="9" y="12" width="2" height="1" fill="#0000ff"/><rect x="11" y="12" width="2" height="1" fill="#840000"/><rect x="0" y="13" width="1" height="1" fill="#000"/><rect x="3" y="13" width="2" height="1" fill="#0000ff"/><rect x="5" y="13" width="2" height="1" fill="#840000"/><rect x="9" y="13" width="2" height="1" fill="#0000ff"/><rect x="11" y="13" width="2" height="1" fill="#840000"/><rect x="0" y="14" width="16" height="1" fill="#000"/></svg>
<svg style="left:193px;top:382px" width="16" height="15" viewBox="0 0 16 15" shape-rendering="crispEdges"><rect x="0" y="1" width="1" height="1" fill="#000"/><rect x="0" y="2" width="1" height="1" fill="#000"/><rect x="1" y="2" width="14" height="1" fill="#840000"/><rect x="0" y="3" width="1" height="1" fill="#000"/><rect x="1" y="3" width="10" height="1" fill="#0000ff"/><rect x="0" y="4" width="1" height="1" fill="#000"/><rect x="1" y="4" width="10" height="1" fill="#0000ff"/><rect x="0" y="5" width="1" height="1" fill="#000"/><rect x="0" y="6" width="1" height="1" fill="#000"/><rect x="1" y="6" width="7" height="1" fill="#840000"/><rect x="0" y="7" width="1" height="1" fill="#000"/><rect x="1" y="7" width="7" height="1" fill="#840000"/><rect x="0" y="8" width="1" height="1" fill="#000"/><rect x="1" y="8" width="11" height="1" fill="#0000ff"/><rect x="0" y="9" width="1" height="1" fill="#000"/><rect x="1" y="9" width="11" height="1" fill="#0000ff"/><rect x="0" y="10" width="1" height="1" fill="#000"/><rect x="1" y="10" width="9" height="1" fill="#840000"/><rect x="0" y="11" width="1" height="1" fill="#000"/><rect x="0" y="12" width="1" height="1" fill="#000"/><rect x="0" y="13" width="16" height="1" fill="#000"/></svg>
<svg style="left:193px;top:399px" width="16" height="15" viewBox="0 0 16 15" shape-rendering="crispEdges"><rect x="0" y="1" width="1" height="1" fill="#000"/><rect x="0" y="2" width="1" height="1" fill="#000"/><rect x="0" y="3" width="1" height="1" fill="#000"/><rect x="8" y="3" width="1" height="1" fill="#840000"/><rect x="13" y="3" width="2" height="1" fill="#0000ff"/><rect x="0" y="4" width="1" height="1" fill="#000"/><rect x="7" y="4" width="1" height="1" fill="#840000"/><rect x="9" y="4" width="1" height="1" fill="#840000"/><rect x="12" y="4" width="2" height="1" fill="#0000ff"/><rect x="0" y="5" width="1" height="1" fill="#000"/><rect x="6" y="5" width="1" height="1" fill="#840000"/><rect x="10" y="5" width="1" height="1" fill="#840000"/><rect x="11" y="5" width="1" height="1" fill="#0000ff"/><rect x="0" y="6" width="1" height="1" fill="#000"/><rect x="5" y="6" width="1" height="1" fill="#840000"/><rect x="10" y="6" width="1" height="1" fill="#0000ff"/><rect x="11" y="6" width="1" height="1" fill="#840000"/><rect x="0" y="7" width="1" height="1" fill="#000"/><rect x="4" y="7" width="1" height="1" fill="#840000"/><rect x="9" y="7" width="1" height="1" fill="#0000ff"/><rect x="12" y="7" width="1" height="1" fill="#840000"/><rect x="0" y="8" width="1" height="1" fill="#000"/><rect x="3" y="8" width="2" height="1" fill="#840000"/><rect x="8" y="8" width="1" height="1" fill="#0000ff"/><rect x="12" y="8" width="2" height="1" fill="#840000"/><rect x="0" y="9" width="1" height="1" fill="#000"/><rect x="3" y="9" width="2" height="1" fill="#840000"/><rect x="7" y="9" width="1" height="1" fill="#0000ff"/><rect x="12" y="9" width="2" height="1" fill="#840000"/><rect x="0" y="10" width="1" height="1" fill="#000"/><rect x="6" y="10" width="1" height="1" fill="#0000ff"/><rect x="0" y="11" width="1" height="1" fill="#000"/><rect x="2" y="11" width="4" height="1" fill="#0000ff"/><rect x="0" y="12" width="1" height="1" fill="#000"/><rect x="2" y="12" width="2" height="1" fill="#0000ff"/><rect x="0" y="13" width="1" height="1" fill="#000"/><rect x="0" y="14" width="16" height="1" fill="#000"/></svg>
<svg style="left:193px;top:416px" width="16" height="15" viewBox="0 0 16 15" shape-rendering="crispEdges"><rect x="5" y="3" width="5" height="1" fill="#000"/><rect x="3" y="4" width="2" height="1" fill="#000"/><rect x="5" y="4" width="1" height="1" fill="#ffff00"/><rect x="6" y="4" width="1" height="1" fill="#fff"/><rect x="7" y="4" width="1" height="1" fill="#ffff00"/><rect x="8" y="4" width="1" height="1" fill="#000"/><rect x="9" y="4" width="1" height="1" fill="#0000ff"/><rect x="10" y="4" width="2" height="1" fill="#000"/><rect x="2" y="5" width="1" height="1" fill="#000"/><rect x="3" y="5" width="1" height="1" fill="#ffff00"/><rect x="4" y="5" width="1" height="1" fill="#fff"/><rect x="5" y="5" width="1" height="1" fill="#ffff00"/><rect x="6" y="5" width="1" height="1" fill="#fff"/><rect x="7" y="5" width="1" height="1" fill="#ffff00"/><rect x="8" y="5" width="1" height="1" fill="#000"/><rect x="9" y="5" width="3" height="1" fill="#0000ff"/><rect x="12" y="5" width="1" height="1" fill="#000"/><rect x="2" y="6" width="1" height="1" fill="#000"/><rect x="3" y="6" width="1" height="1" fill="#fff"/><rect x="4" y="6" width="1" height="1" fill="#ffff00"/><rect x="5" y="6" width="1" height="1" fill="#fff"/><rect x="6" y="6" width="1" height="1" fill="#ffff00"/><rect x="7" y="6" width="1" height="1" fill="#fff"/><rect x="8" y="6" width="1" height="1" fill="#000"/><rect x="9" y="6" width="3" height="1" fill="#0000ff"/><rect x="12" y="6" width="1" height="1" fill="#000"/><rect x="1" y="7" width="1" height="1" fill="#000"/><rect x="2" y="7" width="1" height="1" fill="#ffff00"/><rect x="3" y="7" width="1" height="1" fill="#fff"/><rect x="4" y="7" width="1" height="1" fill="#ffff00"/><rect x="5" y="7" width="1" height="1" fill="#fff"/><rect x="6" y="7" width="1" height="1" fill="#ffff00"/><rect x="7" y="7" width="1" height="1" fill="#fff"/><rect x="8" y="7" width="1" height="1" fill="#000"/><rect x="9" y="7" width="4" height="1" fill="#0000ff"/><rect x="13" y="7" width="1" height="1" fill="#000"/><rect x="1" y="8" width="1" height="1" fill="#000"/><rect x="2" y="8" width="1" height="1" fill="#fff"/><rect x="3" y="8" width="1" height="1" fill="#ffff00"/><rect x="4" y="8" width="1" height="1" fill="#fff"/><rect x="5" y="8" width="1" height="1" fill="#ffff00"/><rect x="6" y="8" width="1" height="1" fill="#fff"/><rect x="7" y="8" width="1" height="1" fill="#ffff00"/><rect x="8" y="8" width="6" height="1" fill="#000"/><rect x="1" y="9" width="1" height="1" fill="#000"/><rect x="2" y="9" width="1" height="1" fill="#ffff00"/><rect x="3" y="9" width="1" height="1" fill="#fff"/><rect x="4" y="9" width="1" height="1" fill="#ffff00"/><rect x="5" y="9" width="1" height="1" fill="#fff"/><rect x="6" y="9" width="1" height="1" fill="#ffff00"/><rect x="7" y="9" width="2" height="1" fill="#840000"/><rect x="9" y="9" width="1" height="1" fill="#840084"/><rect x="10" y="9" width="1" height="1" fill="#840000"/><rect x="11" y="9" width="1" height="1" fill="#840084"/><rect x="12" y="9" width="1" height="1" fill="#840000"/><rect x="13" y="9" width="1" height="1" fill="#000"/><rect x="2" y="10" width="1" height="1" fill="#000"/><rect x="3" y="10" width="1" height="1" fill="#ffff00"/><rect x="4" y="10" width="1" height="1" fill="#fff"/><rect x="5" y="10" width="1" height="1" fill="#840000"/><rect x="6" y="10" width="1" height="1" fill="#840084"/><rect x="7" y="10" width="1" height="1" fill="#840000"/><rect x="8" y="10" width="1" height="1" fill="#840084"/><rect x="9" y="10" width="1" height="1" fill="#840000"/><rect x="10" y="10" width="1" height="1" fill="#840084"/><rect x="11" y="10" width="1" height="1" fill="#840000"/><rect x="12" y="10" width="1" height="1" fill="#000"/><rect x="2" y="11" width="2" height="1" fill="#000"/><rect x="4" y="11" width="1" height="1" fill="#840000"/><rect x="5" y="11" width="1" height="1" fill="#840084"/><rect x="6" y="11" width="1" height="1" fill="#840000"/><rect x="7" y="11" width="1" height="1" fill="#840084"/><rect x="8" y="11" width="1" height="1" fill="#840000"/><rect x="9" y="11" width="1" height="1" fill="#840084"/><rect x="10" y="11" width="1" height="1" fill="#840000"/><rect x="11" y="11" width="2" height="1" fill="#000"/><rect x="3" y="12" width="3" height="1" fill="#000"/><rect x="6" y="12" width="1" height="1" fill="#840000"/><rect x="7" y="12" width="1" height="1" fill="#840084"/><rect x="8" y="12" width="1" height="1" fill="#840000"/><rect x="9" y="12" width="3" height="1" fill="#000"/><rect x="5" y="13" width="5" height="1" fill="#000"/></svg>
<svg style="left:193px;top:433px" width="16" height="15" viewBox="0 0 16 15" shape-rendering="crispEdges"><rect x="0" y="1" width="1" height="1" fill="#000"/><rect x="0" y="2" width="1" height="1" fill="#000"/><rect x="12" y="2" width="1" height="1" fill="#0000ff"/><rect x="0" y="3" width="1" height="1" fill="#000"/><rect x="8" y="3" width="1" height="1" fill="#000"/><rect x="0" y="4" width="1" height="1" fill="#000"/><rect x="12" y="4" width="1" height="1" fill="#000"/><rect x="0" y="5" width="1" height="1" fill="#000"/><rect x="5" y="5" width="1" height="1" fill="#0000ff"/><rect x="10" y="5" width="1" height="1" fill="#0000ff"/><rect x="0" y="6" width="1" height="1" fill="#000"/><rect x="8" y="6" width="1" height="1" fill="#000"/><rect x="0" y="7" width="1" height="1" fill="#000"/><rect x="3" y="7" width="1" height="1" fill="#000"/><rect x="6" y="7" width="1" height="1" fill="#0000ff"/><rect x="12" y="7" width="1" height="1" fill="#000"/><rect x="0" y="8" width="1" height="1" fill="#000"/><rect x="9" y="8" width="1" height="1" fill="#0000ff"/><rect x="0" y="9" width="1" height="1" fill="#000"/><rect x="2" y="9" width="1" height="1" fill="#0000ff"/><rect x="5" y="9" width="1" height="1" fill="#000"/><rect x="11" y="9" width="1" height="1" fill="#0000ff"/><rect x="0" y="10" width="1" height="1" fill="#000"/><rect x="8" y="10" width="1" height="1" fill="#000"/><rect x="0" y="11" width="1" height="1" fill="#000"/><rect x="4" y="11" width="1" height="1" fill="#0000ff"/><rect x="11" y="11" width="1" height="1" fill="#0000ff"/><rect x="0" y="12" width="1" height="1" fill="#000"/><rect x="0" y="13" width="16" height="1" fill="#000"/></svg>
<svg style="left:193px;top:450px" width="16" height="15" viewBox="0 0 16 15" shape-rendering="crispEdges"><rect x="0" y="1" width="1" height="1" fill="#000"/><rect x="0" y="2" width="1" height="1" fill="#000"/><rect x="1" y="2" width="1" height="1" fill="#840000"/><rect x="11" y="2" width="1" height="1" fill="#840000"/><rect x="0" y="3" width="1" height="1" fill="#000"/><rect x="1" y="3" width="1" height="1" fill="#840000"/><rect x="2" y="3" width="1" height="1" fill="#840084"/><rect x="10" y="3" width="1" height="1" fill="#840000"/><rect x="11" y="3" width="1" height="1" fill="#840084"/><rect x="12" y="3" width="1" height="1" fill="#840000"/><rect x="0" y="4" width="1" height="1" fill="#000"/><rect x="1" y="4" width="1" height="1" fill="#840000"/><rect x="2" y="4" width="1" height="1" fill="#840084"/><rect x="3" y="4" width="1" height="1" fill="#840000"/><rect x="9" y="4" width="1" height="1" fill="#840000"/><rect x="10" y="4" width="1" height="1" fill="#840084"/><rect x="11" y="4" width="1" height="1" fill="#840000"/><rect x="12" y="4" width="1" height="1" fill="#840084"/><rect x="13" y="4" width="1" height="1" fill="#840000"/><rect x="0" y="5" width="1" height="1" fill="#000"/><rect x="1" y="5" width="1" height="1" fill="#840000"/><rect x="2" y="5" width="1" height="1" fill="#840084"/><rect x="3" y="5" width="1" height="1" fill="#840000"/><rect x="4" y="5" width="1" height="1" fill="#840084"/><rect x="8" y="5" width="1" height="1" fill="#840000"/><rect x="9" y="5" width="1" height="1" fill="#840084"/><rect x="10" y="5" width="1" height="1" fill="#840000"/><rect x="11" y="5" width="1" height="1" fill="#840084"/><rect x="12" y="5" width="1" height="1" fill="#840000"/><rect x="13" y="5" width="1" height="1" fill="#840084"/><rect x="14" y="5" width="1" height="1" fill="#840000"/><rect x="0" y="6" width="1" height="1" fill="#000"/><rect x="1" y="6" width="1" height="1" fill="#840000"/><rect x="2" y="6" width="1" height="1" fill="#840084"/><rect x="3" y="6" width="1" height="1" fill="#840000"/><rect x="4" y="6" width="1" height="1" fill="#840084"/><rect x="5" y="6" width="1" height="1" fill="#840000"/><rect x="7" y="6" width="1" height="1" fill="#840000"/><rect x="8" y="6" width="1" height="1" fill="#840084"/><rect x="9" y="6" width="1" height="1" fill="#840000"/><rect x="10" y="6" width="1" height="1" fill="#840084"/><rect x="11" y="6" width="1" height="1" fill="#840000"/><rect x="12" y="6" width="1" height="1" fill="#840084"/><rect x="13" y="6" width="1" height="1" fill="#840000"/><rect x="14" y="6" width="1" height="1" fill="#840084"/><rect x="0" y="7" width="1" height="1" fill="#000"/><rect x="1" y="7" width="1" height="1" fill="#0000ff"/><rect x="2" y="7" width="1" height="1" fill="#840000"/><rect x="3" y="7" width="1" height="1" fill="#840084"/><rect x="4" y="7" width="1" height="1" fill="#840000"/><rect x="5" y="7" width="1" height="1" fill="#840084"/><rect x="6" y="7" width="1" height="1" fill="#840000"/><rect x="7" y="7" width="1" height="1" fill="#840084"/><rect x="8" y="7" width="1" height="1" fill="#840000"/><rect x="9" y="7" width="1" height="1" fill="#840084"/><rect x="10" y="7" width="1" height="1" fill="#840000"/><rect x="11" y="7" width="1" height="1" fill="#840084"/><rect x="12" y="7" width="1" height="1" fill="#840000"/><rect x="13" y="7" width="1" height="1" fill="#840084"/><rect x="14" y="7" width="1" height="1" fill="#840000"/><rect x="0" y="8" width="1" height="1" fill="#000"/><rect x="1" y="8" width="3" height="1" fill="#0000ff"/><rect x="4" y="8" width="1" height="1" fill="#840000"/><rect x="5" y="8" width="1" height="1" fill="#840084"/><rect x="6" y="8" width="1" height="1" fill="#840000"/><rect x="7" y="8" width="1" height="1" fill="#840084"/><rect x="8" y="8" width="1" height="1" fill="#840000"/><rect x="9" y="8" width="1" height="1" fill="#840084"/><rect x="10" y="8" width="1" height="1" fill="#840000"/><rect x="11" y="8" width="1" height="1" fill="#840084"/><rect x="12" y="8" width="3" height="1" fill="#0000ff"/><rect x="0" y="9" width="1" height="1" fill="#000"/><rect x="1" y="9" width="5" height="1" fill="#0000ff"/><rect x="6" y="9" width="1" height="1" fill="#840000"/><rect x="7" y="9" width="1" height="1" fill="#840084"/><rect x="8" y="9" width="1" height="1" fill="#840000"/><rect x="9" y="9" width="1" height="1" fill="#840084"/><rect x="10" y="9" width="5" height="1" fill="#0000ff"/><rect x="0" y="10" width="1" height="1" fill="#000"/><rect x="1" y="10" width="7" height="1" fill="#0000ff"/><rect x="8" y="10" width="1" height="1" fill="#840000"/><rect x="9" y="10" width="6" height="1" fill="#0000ff"/><rect x="0" y="11" width="1" height="1" fill="#000"/><rect x="1" y="11" width="14" height="1" fill="#0000ff"/><rect x="0" y="12" width="1" height="1" fill="#000"/><rect x="1" y="12" width="14" height="1" fill="#0000ff"/><rect x="0" y="13" width="1" height="1" fill="#000"/><rect x="1" y="13" width="14" height="1" fill="#0000ff"/><rect x="0" y="14" width="16" height="1" fill="#000"/></svg>
<svg style="left:193px;top:467px" width="16" height="15" viewBox="0 0 16 15" shape-rendering="crispEdges"><rect x="5" y="2" width="5" height="1" fill="#000"/><rect x="3" y="3" width="2" height="1" fill="#000"/><rect x="5" y="3" width="1" height="1" fill="#ffff00"/><rect x="6" y="3" width="1" height="1" fill="#fff"/><rect x="7" y="3" width="1" height="1" fill="#ffff00"/><rect x="8" y="3" width="2" height="1" fill="#0000ff"/><rect x="10" y="3" width="2" height="1" fill="#000"/><rect x="2" y="4" width="1" height="1" fill="#000"/><rect x="3" y="4" width="1" height="1" fill="#ffff00"/><rect x="4" y="4" width="1" height="1" fill="#fff"/><rect x="5" y="4" width="1" height="1" fill="#ffff00"/><rect x="6" y="4" width="3" height="1" fill="#000"/><rect x="9" y="4" width="3" height="1" fill="#0000ff"/><rect x="12" y="4" width="1" height="1" fill="#000"/><rect x="2" y="5" width="1" height="1" fill="#000"/><rect x="3" y="5" width="1" height="1" fill="#fff"/><rect x="4" y="5" width="1" height="1" fill="#ffff00"/><rect x="5" y="5" width="1" height="1" fill="#000"/><rect x="6" y="5" width="3" height="1" fill="#fff"/><rect x="9" y="5" width="1" height="1" fill="#000"/><rect x="10" y="5" width="2" height="1" fill="#0000ff"/><rect x="12" y="5" width="1" height="1" fill="#000"/><rect x="1" y="6" width="1" height="1" fill="#000"/><rect x="2" y="6" width="1" height="1" fill="#ffff00"/><rect x="3" y="6" width="1" height="1" fill="#fff"/><rect x="4" y="6" width="1" height="1" fill="#000"/><rect x="5" y="6" width="5" height="1" fill="#fff"/><rect x="10" y="6" width="1" height="1" fill="#000"/><rect x="11" y="6" width="2" height="1" fill="#0000ff"/><rect x="13" y="6" width="1" height="1" fill="#000"/><rect x="1" y="7" width="1" height="1" fill="#000"/><rect x="2" y="7" width="1" height="1" fill="#fff"/><rect x="3" y="7" width="1" height="1" fill="#ffff00"/><rect x="4" y="7" width="1" height="1" fill="#000"/><rect x="5" y="7" width="5" height="1" fill="#fff"/><rect x="10" y="7" width="1" height="1" fill="#000"/><rect x="11" y="7" width="2" height="1" fill="#840000"/><rect x="13" y="7" width="1" height="1" fill="#000"/><rect x="1" y="8" width="1" height="1" fill="#000"/><rect x="2" y="8" width="1" height="1" fill="#840000"/><rect x="3" y="8" width="1" height="1" fill="#840084"/><rect x="4" y="8" width="1" height="1" fill="#000"/><rect x="5" y="8" width="5" height="1" fill="#fff"/><rect x="10" y="8" width="1" height="1" fill="#000"/><rect x="11" y="8" width="1" height="1" fill="#840084"/><rect x="12" y="8" width="1" height="1" fill="#840000"/><rect x="13" y="8" width="1" height="1" fill="#000"/><rect x="2" y="9" width="1" height="1" fill="#000"/><rect x="3" y="9" width="1" height="1" fill="#840000"/><rect x="4" y="9" width="1" height="1" fill="#840084"/><rect x="5" y="9" width="1" height="1" fill="#000"/><rect x="6" y="9" width="3" height="1" fill="#fff"/><rect x="9" y="9" width="1" height="1" fill="#000"/><rect x="10" y="9" width="1" height="1" fill="#840000"/><rect x="11" y="9" width="1" height="1" fill="#840084"/><rect x="12" y="9" width="1" height="1" fill="#000"/><rect x="2" y="10" width="1" height="1" fill="#000"/><rect x="3" y="10" width="1" height="1" fill="#840084"/><rect x="4" y="10" width="1" height="1" fill="#840000"/><rect x="5" y="10" width="1" height="1" fill="#840084"/><rect x="6" y="10" width="3" height="1" fill="#000"/><rect x="9" y="10" width="1" height="1" fill="#840084"/><rect x="10" y="10" width="1" height="1" fill="#840000"/><rect x="11" y="10" width="1" height="1" fill="#840084"/><rect x="12" y="10" width="1" height="1" fill="#000"/><rect x="3" y="11" width="2" height="1" fill="#000"/><rect x="5" y="11" width="1" height="1" fill="#840000"/><rect x="6" y="11" width="1" height="1" fill="#840084"/><rect x="7" y="11" width="1" height="1" fill="#840000"/><rect x="8" y="11" width="1" height="1" fill="#840084"/><rect x="9" y="11" width="1" height="1" fill="#840000"/><rect x="10" y="11" width="2" height="1" fill="#000"/><rect x="5" y="12" width="5" height="1" fill="#000"/></svg>
<svg style="left:193px;top:484px" width="16" height="15" viewBox="0 0 16 15" shape-rendering="crispEdges"><rect x="7" y="1" width="1" height="1" fill="#0000ff"/><rect x="6" y="2" width="1" height="1" fill="#0000ff"/><rect x="7" y="2" width="1" height="1" fill="#000"/><rect x="8" y="2" width="1" height="1" fill="#0000ff"/><rect x="5" y="3" width="1" height="1" fill="#0000ff"/><rect x="7" y="3" width="1" height="1" fill="#000"/><rect x="9" y="3" width="1" height="1" fill="#0000ff"/><rect x="0" y="4" width="5" height="1" fill="#0000ff"/><rect x="6" y="4" width="3" height="1" fill="#840000"/><rect x="10" y="4" width="5" height="1" fill="#0000ff"/><rect x="1" y="5" width="1" height="1" fill="#0000ff"/><rect x="5" y="5" width="2" height="1" fill="#840000"/><rect x="7" y="5" width="1" height="1" fill="#000"/><rect x="8" y="5" width="2" height="1" fill="#840000"/><rect x="13" y="5" width="1" height="1" fill="#0000ff"/><rect x="1" y="6" width="1" height="1" fill="#0000ff"/><rect x="4" y="6" width="1" height="1" fill="#840000"/><rect x="5" y="6" width="1" height="1" fill="#000"/><rect x="6" y="6" width="1" height="1" fill="#fff"/><rect x="7" y="6" width="1" height="1" fill="#000"/><rect x="8" y="6" width="1" height="1" fill="#fff"/><rect x="9" y="6" width="1" height="1" fill="#000"/><rect x="10" y="6" width="1" height="1" fill="#840000"/><rect x="13" y="6" width="1" height="1" fill="#0000ff"/><rect x="2" y="7" width="1" height="1" fill="#0000ff"/><rect x="4" y="7" width="1" height="1" fill="#840000"/><rect x="6" y="7" width="3" height="1" fill="#000"/><rect x="10" y="7" width="1" height="1" fill="#840000"/><rect x="12" y="7" width="1" height="1" fill="#0000ff"/><rect x="2" y="8" width="1" height="1" fill="#0000ff"/><rect x="4" y="8" width="2" height="1" fill="#840000"/><rect x="7" y="8" width="1" height="1" fill="#000"/><rect x="9" y="8" width="2" height="1" fill="#840000"/><rect x="12" y="8" width="1" height="1" fill="#0000ff"/><rect x="2" y="9" width="1" height="1" fill="#0000ff"/><rect x="5" y="9" width="5" height="1" fill="#840000"/><rect x="12" y="9" width="1" height="1" fill="#0000ff"/><rect x="3" y="10" width="1" height="1" fill="#0000ff"/><rect x="5" y="10" width="1" height="1" fill="#000"/><rect x="9" y="10" width="1" height="1" fill="#000"/><rect x="11" y="10" width="1" height="1" fill="#0000ff"/><rect x="3" y="11" width="1" height="1" fill="#0000ff"/><rect x="4" y="11" width="1" height="1" fill="#000"/><rect x="10" y="11" width="1" height="1" fill="#000"/><rect x="11" y="11" width="1" height="1" fill="#0000ff"/><rect x="3" y="12" width="9" height="1" fill="#0000ff"/><rect x="2" y="13" width="1" height="1" fill="#000"/><rect x="12" y="13" width="1" height="1" fill="#000"/></svg>
<svg style="left:193px;top:501px" width="16" height="15" viewBox="0 0 16 15" shape-rendering="crispEdges"><rect x="4" y="2" width="11" height="1" fill="#000"/><rect x="3" y="3" width="1" height="1" fill="#000"/><rect x="4" y="3" width="9" height="1" fill="#fff"/><rect x="13" y="3" width="2" height="1" fill="#000"/><rect x="2" y="4" width="1" height="1" fill="#000"/><rect x="3" y="4" width="2" height="1" fill="#fff"/><rect x="5" y="4" width="3" height="1" fill="#840000"/><rect x="8" y="4" width="1" height="1" fill="#fff"/><rect x="9" y="4" width="2" height="1" fill="#840000"/><rect x="11" y="4" width="1" height="1" fill="#fff"/><rect x="12" y="4" width="1" height="1" fill="#000"/><rect x="13" y="4" width="1" height="1" fill="#fff"/><rect x="14" y="4" width="1" height="1" fill="#000"/><rect x="1" y="5" width="1" height="1" fill="#000"/><rect x="2" y="5" width="2" height="1" fill="#fff"/><rect x="4" y="5" width="7" height="1" fill="#840000"/><rect x="11" y="5" width="1" height="1" fill="#000"/><rect x="12" y="5" width="2" height="1" fill="#fff"/><rect x="14" y="5" width="1" height="1" fill="#000"/><rect x="0" y="6" width="3" height="1" fill="#000"/><rect x="3" y="6" width="2" height="1" fill="#0000ff"/><rect x="5" y="6" width="5" height="1" fill="#840000"/><rect x="10" y="6" width="5" height="1" fill="#000"/><rect x="0" y="7" width="1" height="1" fill="#000"/><rect x="1" y="7" width="1" height="1" fill="#fff"/><rect x="2" y="7" width="5" height="1" fill="#0000ff"/><rect x="7" y="7" width="2" height="1" fill="#840000"/><rect x="9" y="7" width="1" height="1" fill="#000"/><rect x="10" y="7" width="2" height="1" fill="#fff"/><rect x="12" y="7" width="1" height="1" fill="#000"/><rect x="13" y="7" width="1" height="1" fill="#fff"/><rect x="14" y="7" width="1" height="1" fill="#000"/><rect x="0" y="8" width="1" height="1" fill="#000"/><rect x="1" y="8" width="7" height="1" fill="#0000ff"/><rect x="8" y="8" width="1" height="1" fill="#000"/><rect x="9" y="8" width="3" height="1" fill="#fff"/><rect x="12" y="8" width="2" height="1" fill="#000"/><rect x="0" y="9" width="9" height="1" fill="#000"/><rect x="9" y="9" width="3" height="1" fill="#fff"/><rect x="12" y="9" width="1" height="1" fill="#000"/><rect x="0" y="10" width="1" height="1" fill="#000"/><rect x="1" y="10" width="7" height="1" fill="#fff"/><rect x="8" y="10" width="1" height="1" fill="#000"/><rect x="9" y="10" width="2" height="1" fill="#fff"/><rect x="11" y="10" width="1" height="1" fill="#000"/><rect x="0" y="11" width="1" height="1" fill="#000"/><rect x="1" y="11" width="7" height="1" fill="#fff"/><rect x="8" y="11" width="1" height="1" fill="#000"/><rect x="9" y="11" width="1" height="1" fill="#fff"/><rect x="10" y="11" width="1" height="1" fill="#000"/><rect x="0" y="12" width="1" height="1" fill="#000"/><rect x="1" y="12" width="7" height="1" fill="#fff"/><rect x="8" y="12" width="2" height="1" fill="#000"/><rect x="0" y="13" width="9" height="1" fill="#000"/></svg>
<svg style="left:193px;top:518px" width="16" height="15" viewBox="0 0 16 15" shape-rendering="crispEdges"><rect x="4" y="2" width="3" height="1" fill="#840000"/><rect x="3" y="3" width="1" height="1" fill="#840000"/><rect x="4" y="3" width="1" height="1" fill="#840084"/><rect x="5" y="3" width="1" height="1" fill="#840000"/><rect x="6" y="3" width="1" height="1" fill="#840084"/><rect x="7" y="3" width="1" height="1" fill="#840000"/><rect x="2" y="4" width="1" height="1" fill="#840000"/><rect x="3" y="4" width="1" height="1" fill="#840084"/><rect x="4" y="4" width="1" height="1" fill="#840000"/><rect x="5" y="4" width="1" height="1" fill="#840084"/><rect x="6" y="4" width="1" height="1" fill="#840000"/><rect x="7" y="4" width="1" height="1" fill="#840084"/><rect x="8" y="4" width="1" height="1" fill="#840000"/><rect x="12" y="4" width="2" height="1" fill="#000084"/><rect x="2" y="5" width="2" height="1" fill="#840000"/><rect x="4" y="5" width="1" height="1" fill="#840084"/><rect x="5" y="5" width="1" height="1" fill="#840000"/><rect x="6" y="5" width="1" height="1" fill="#840084"/><rect x="7" y="5" width="2" height="1" fill="#840000"/><rect x="11" y="5" width="4" height="1" fill="#000084"/><rect x="2" y="6" width="1" height="1" fill="#840000"/><rect x="3" y="6" width="1" height="1" fill="#840084"/><rect x="4" y="6" width="1" height="1" fill="#840000"/><rect x="5" y="6" width="1" height="1" fill="#840084"/><rect x="6" y="6" width="1" height="1" fill="#840000"/><rect x="7" y="6" width="1" height="1" fill="#840084"/><rect x="8" y="6" width="1" height="1" fill="#840000"/><rect x="11" y="6" width="4" height="1" fill="#000084"/><rect x="3" y="7" width="1" height="1" fill="#840000"/><rect x="4" y="7" width="1" height="1" fill="#840084"/><rect x="5" y="7" width="1" height="1" fill="#840000"/><rect x="6" y="7" width="1" height="1" fill="#840084"/><rect x="7" y="7" width="1" height="1" fill="#840000"/><rect x="12" y="7" width="2" height="1" fill="#000084"/><rect x="4" y="8" width="3" height="1" fill="#840000"/><rect x="11" y="9" width="2" height="1" fill="#840000"/><rect x="4" y="10" width="2" height="1" fill="#000084"/><rect x="10" y="10" width="1" height="1" fill="#840000"/><rect x="11" y="10" width="1" height="1" fill="#840084"/><rect x="12" y="10" width="2" height="1" fill="#840000"/><rect x="3" y="11" width="4" height="1" fill="#000084"/><rect x="10" y="11" width="2" height="1" fill="#840000"/><rect x="12" y="11" width="1" height="1" fill="#840084"/><rect x="13" y="11" width="1" height="1" fill="#840000"/><rect x="3" y="12" width="4" height="1" fill="#000084"/><rect x="11" y="12" width="2" height="1" fill="#840000"/><rect x="4" y="13" width="2" height="1" fill="#000084"/></svg>
<svg style="left:193px;top:535px" width="16" height="15" viewBox="0 0 16 15" shape-rendering="crispEdges"><rect x="0" y="1" width="1" height="1" fill="#000"/><rect x="12" y="1" width="1" height="1" fill="#000"/><rect x="0" y="2" width="1" height="1" fill="#000"/><rect x="12" y="2" width="2" height="1" fill="#000"/><rect x="0" y="3" width="1" height="1" fill="#000"/><rect x="4" y="3" width="1" height="1" fill="#000"/><rect x="9" y="3" width="1" height="1" fill="#000"/><rect x="12" y="3" width="1" height="1" fill="#000"/><rect x="0" y="4" width="1" height="1" fill="#000"/><rect x="4" y="4" width="2" height="1" fill="#000"/><rect x="8" y="4" width="2" height="1" fill="#000"/><rect x="11" y="4" width="2" height="1" fill="#000"/><rect x="0" y="5" width="1" height="1" fill="#000"/><rect x="3" y="5" width="2" height="1" fill="#000"/><rect x="9" y="5" width="1" height="1" fill="#000"/><rect x="12" y="5" width="1" height="1" fill="#000"/><rect x="0" y="6" width="1" height="1" fill="#000"/><rect x="4" y="6" width="1" height="1" fill="#000"/><rect x="9" y="6" width="2" height="1" fill="#000"/><rect x="0" y="7" width="1" height="1" fill="#000"/><rect x="12" y="7" width="2" height="1" fill="#008284"/><rect x="0" y="8" width="1" height="1" fill="#000"/><rect x="4" y="8" width="2" height="1" fill="#008284"/><rect x="12" y="8" width="2" height="1" fill="#008284"/><rect x="0" y="9" width="1" height="1" fill="#000"/><rect x="4" y="9" width="2" height="1" fill="#008284"/><rect x="12" y="9" width="2" height="1" fill="#008284"/><rect x="0" y="10" width="1" height="1" fill="#000"/><rect x="4" y="10" width="2" height="1" fill="#008284"/><rect x="8" y="10" width="2" height="1" fill="#008284"/><rect x="12" y="10" width="2" height="1" fill="#008284"/><rect x="0" y="11" width="1" height="1" fill="#000"/><rect x="4" y="11" width="2" height="1" fill="#008284"/><rect x="8" y="11" width="2" height="1" fill="#008284"/><rect x="12" y="11" width="2" height="1" fill="#008284"/><rect x="0" y="12" width="1" height="1" fill="#000"/><rect x="4" y="12" width="2" height="1" fill="#008284"/><rect x="8" y="12" width="2" height="1" fill="#008284"/><rect x="12" y="12" width="2" height="1" fill="#008284"/><rect x="0" y="13" width="1" height="1" fill="#000"/><rect x="4" y="13" width="2" height="1" fill="#008284"/><rect x="8" y="13" width="2" height="1" fill="#008284"/><rect x="12" y="13" width="2" height="1" fill="#008284"/><rect x="0" y="14" width="16" height="1" fill="#000"/></svg>
<div class="dithw" style="left:331px;top:364px;width:16px;height:187px;"></div>
<div class="btn" style="left:331px;top:364px;width:16px;height:16px;"></div>
<div class="btn" style="left:331px;top:535px;width:16px;height:16px;"></div>
<div class="btn" style="left:331px;top:380px;width:16px;height:122px;"></div>
<svg style="left:335px;top:370px" width="7" height="4" shape-rendering="crispEdges"><path d="M3.500 0L7 4H0z" fill="#000"/></svg>
<svg style="left:335px;top:541px" width="7" height="4" shape-rendering="crispEdges"><path d="M0 0h7L3.500 4z" fill="#000"/></svg>
<div style="left:362px;top:362px;width:67px;height:62px;background:#fff;box-shadow:inset 1px 1px 0 #848284,inset -1px -1px 0 #fff,inset 2px 2px 0 #000,inset -2px -2px 0 #fff;"></div>
<div style="left:364px;top:364px;width:63px;height:58px;background:#000"></div>
<div style="left:362px;top:425px;width:67px;height:62px;background:#fff;box-shadow:inset 1px 1px 0 #848284,inset -1px -1px 0 #fff,inset 2px 2px 0 #000,inset -2px -2px 0 #fff;"></div>
<div style="left:431px;top:425px;width:67px;height:62px;background:#fff;box-shadow:inset 1px 1px 0 #848284,inset -1px -1px 0 #fff,inset 2px 2px 0 #000,inset -2px -2px 0 #fff;"></div>
<div style="left:362px;top:488px;width:67px;height:65px;background:#fff;box-shadow:inset 1px 1px 0 #848284,inset -1px -1px 0 #fff,inset 2px 2px 0 #000,inset -2px -2px 0 #fff;"></div>
<div style="left:431px;top:488px;width:67px;height:65px;background:#fff;box-shadow:inset 1px 1px 0 #848284,inset -1px -1px 0 #fff,inset 2px 2px 0 #000,inset -2px -2px 0 #fff;"></div>
<svg style="left:362px;top:362px" width="67" height="62" viewBox="0 0 67 62" shape-rendering="crispEdges"><path d="M8.500 9v46.500H59" stroke="#fff" fill="none"/><rect x="10" y="14" width="4" height="4" fill="#008200"/><rect x="53" y="14" width="4" height="4" fill="#008200"/><rect x="23" y="37" width="4" height="4" fill="#008200"/><rect x="36" y="39" width="4" height="4" fill="#008200"/><path d="M29.5 20l2.500 2.500-2.500 2.500-2.500-2.500z" fill="#ff0" shape-rendering="auto"/><path d="M42.5 30l2.500 2.500-2.500 2.500-2.500-2.500z" fill="#ff0" shape-rendering="auto"/><path d="M12.5 41l2.500 2.500-2.500 2.500-2.500-2.500z" fill="#ff0" shape-rendering="auto"/><path d="M46.5 45l2.500 2.500-2.500 2.500-2.500-2.500z" fill="#ff0" shape-rendering="auto"/></svg>
<svg style="left:362px;top:425px" width="67" height="64" viewBox="0 0 67 64"><path d="M8.500 9v46.5H59" stroke="#000" fill="none" shape-rendering="crispEdges"/><path d="M12 16C17 21 19 33 25 39.500S34 45 38 41S49 25 55 16" stroke="#f0f" fill="none"/><path d="M12.500 44C19 37 23 27 29.500 22S43 24 46.800 32.600S45 42 42.700 47.200" stroke="#000084" fill="none"/><rect x="10" y="14" width="4" height="4" fill="#f0f"/><rect x="23" y="37.5" width="4" height="4" fill="#f0f"/><rect x="36" y="39" width="4" height="4" fill="#f0f"/><rect x="53" y="14" width="4" height="4" fill="#f0f"/><path d="M12.5 41.5l2.500 2.500-2.500 2.500-2.500-2.500z" fill="#000084"/><path d="M29.5 19.5l2.500 2.500-2.500 2.500-2.500-2.500z" fill="#000084"/><path d="M46.8 30.1l2.500 2.500-2.500 2.500-2.500-2.500z" fill="#000084"/><path d="M42.7 44.7l2.500 2.500-2.500 2.500-2.500-2.500z" fill="#000084"/></svg>
<svg style="left:431px;top:425px" width="67" height="64" viewBox="0 0 67 64"><path d="M8.500 9v46.5H59" stroke="#000" fill="none" shape-rendering="crispEdges"/><path d="M12 16C17 21 19 33 25 39.500S34 45 38 41S49 25 55 16" stroke="#f0f" fill="none"/><path d="M12.500 44C19 37 23 27 29.500 22S43 24 46.800 32.600S45 42 42.700 47.200" stroke="#000084" fill="none"/></svg>
<svg style="left:362px;top:488px" width="67" height="64" viewBox="0 0 67 64"><path d="M8.500 9v48.5H59" stroke="#000" fill="none" shape-rendering="crispEdges"/><path d="M12 16L25 41L55 16L38 43" stroke="#f0f" fill="none"/><path d="M12.500 45.300L29.500 22.200L46.800 49.800L42.700 33.700" stroke="#000084" fill="none"/><rect x="10" y="14" width="4" height="4" fill="#f0f"/><rect x="23" y="39" width="4" height="4" fill="#f0f"/><rect x="36" y="41" width="4" height="4" fill="#f0f"/><rect x="53" y="14" width="4" height="4" fill="#f0f"/><path d="M12.5 42.8l2.500 2.500-2.500 2.500-2.500-2.500z" fill="#000084"/><path d="M29.5 19.7l2.500 2.500-2.500 2.500-2.500-2.500z" fill="#000084"/><path d="M46.8 47.3l2.500 2.500-2.500 2.500-2.500-2.500z" fill="#000084"/><path d="M42.7 31.2l2.500 2.500-2.500 2.500-2.500-2.500z" fill="#000084"/></svg>
<svg style="left:431px;top:488px" width="67" height="64" viewBox="0 0 67 64"><path d="M8.500 9v48.5H59" stroke="#000" fill="none" shape-rendering="crispEdges"/><path d="M12 16L25 41L55 16L38 43" stroke="#f0f" fill="none"/><path d="M12.500 45.300L29.500 22.200L46.800 49.800L42.700 33.700" stroke="#000084" fill="none"/></svg>
<div class="sunk1" style="left:361px;top:564px;width:209px;height:50px;"></div>
<div class="t" style="left:361px;top:565px;font-family:'DejaVu Sans Condensed','Liberation Sans',sans-serif;font-size:11px;line-height:13px;letter-spacing:-0.08px">Scatter. Compares pairs of values.</div>
<div class="btn" style="left:361px;top:621px;width:209px;height:22px;"></div>
<div class="t" style="left:361px;top:626px;font-family:'DejaVu Sans Condensed','Liberation Sans',sans-serif;font-size:11px;line-height:13px;width:209px;text-align:center;letter-spacing:-0.2px">Press and hold to <u>v</u>iew sample</div>
<div class="btn" style="left:184px;top:660px;width:30px;height:22px;"></div>
<svg style="left:191px;top:662px" width="16" height="17" viewBox="0 0 16 17"><path d="M1.500 1.500h13v10h-4l1 4-5-4h-5z" fill="#ffff80" stroke="#000"/><text x="8" y="10.500" text-anchor="middle" font-family="Liberation Sans,sans-serif" font-weight="bold" font-size="11" fill="#000084">?</text></svg>
<div class="btn" style="left:269px;top:660px;width:74px;height:22px;"></div>
<div class="t" style="left:269px;top:665px;font-family:'DejaVu Sans Condensed','Liberation Sans',sans-serif;font-size:11px;line-height:13px;width:74px;text-align:center">Cancel</div>
<div class="btn" style="left:350px;top:660px;width:74px;height:22px;"></div>
<div class="t" style="left:350px;top:665px;font-family:'DejaVu Sans Condensed','Liberation Sans',sans-serif;font-size:11px;line-height:13px;width:74px;text-align:center;color:#848284;text-shadow:1px 1px 0 #fff">&lt; Back</div>
<div style="left:425px;top:660px;width:75px;height:22px;background:#000"></div>
<div class="btn" style="left:426px;top:661px;width:73px;height:20px;"></div>
<div class="t" style="left:425px;top:665px;font-family:'DejaVu Sans Condensed','Liberation Sans',sans-serif;font-size:11px;line-height:13px;width:75px;text-align:center">Next &gt;</div>
<div class="btn" style="left:506px;top:660px;width:74px;height:22px;"></div>
<div class="t" style="left:506px;top:665px;font-family:'DejaVu Sans Condensed','Liberation Sans',sans-serif;font-size:11px;line-height:13px;width:74px;text-align:center"><u>F</u>inish</div>
</div></body></html>
